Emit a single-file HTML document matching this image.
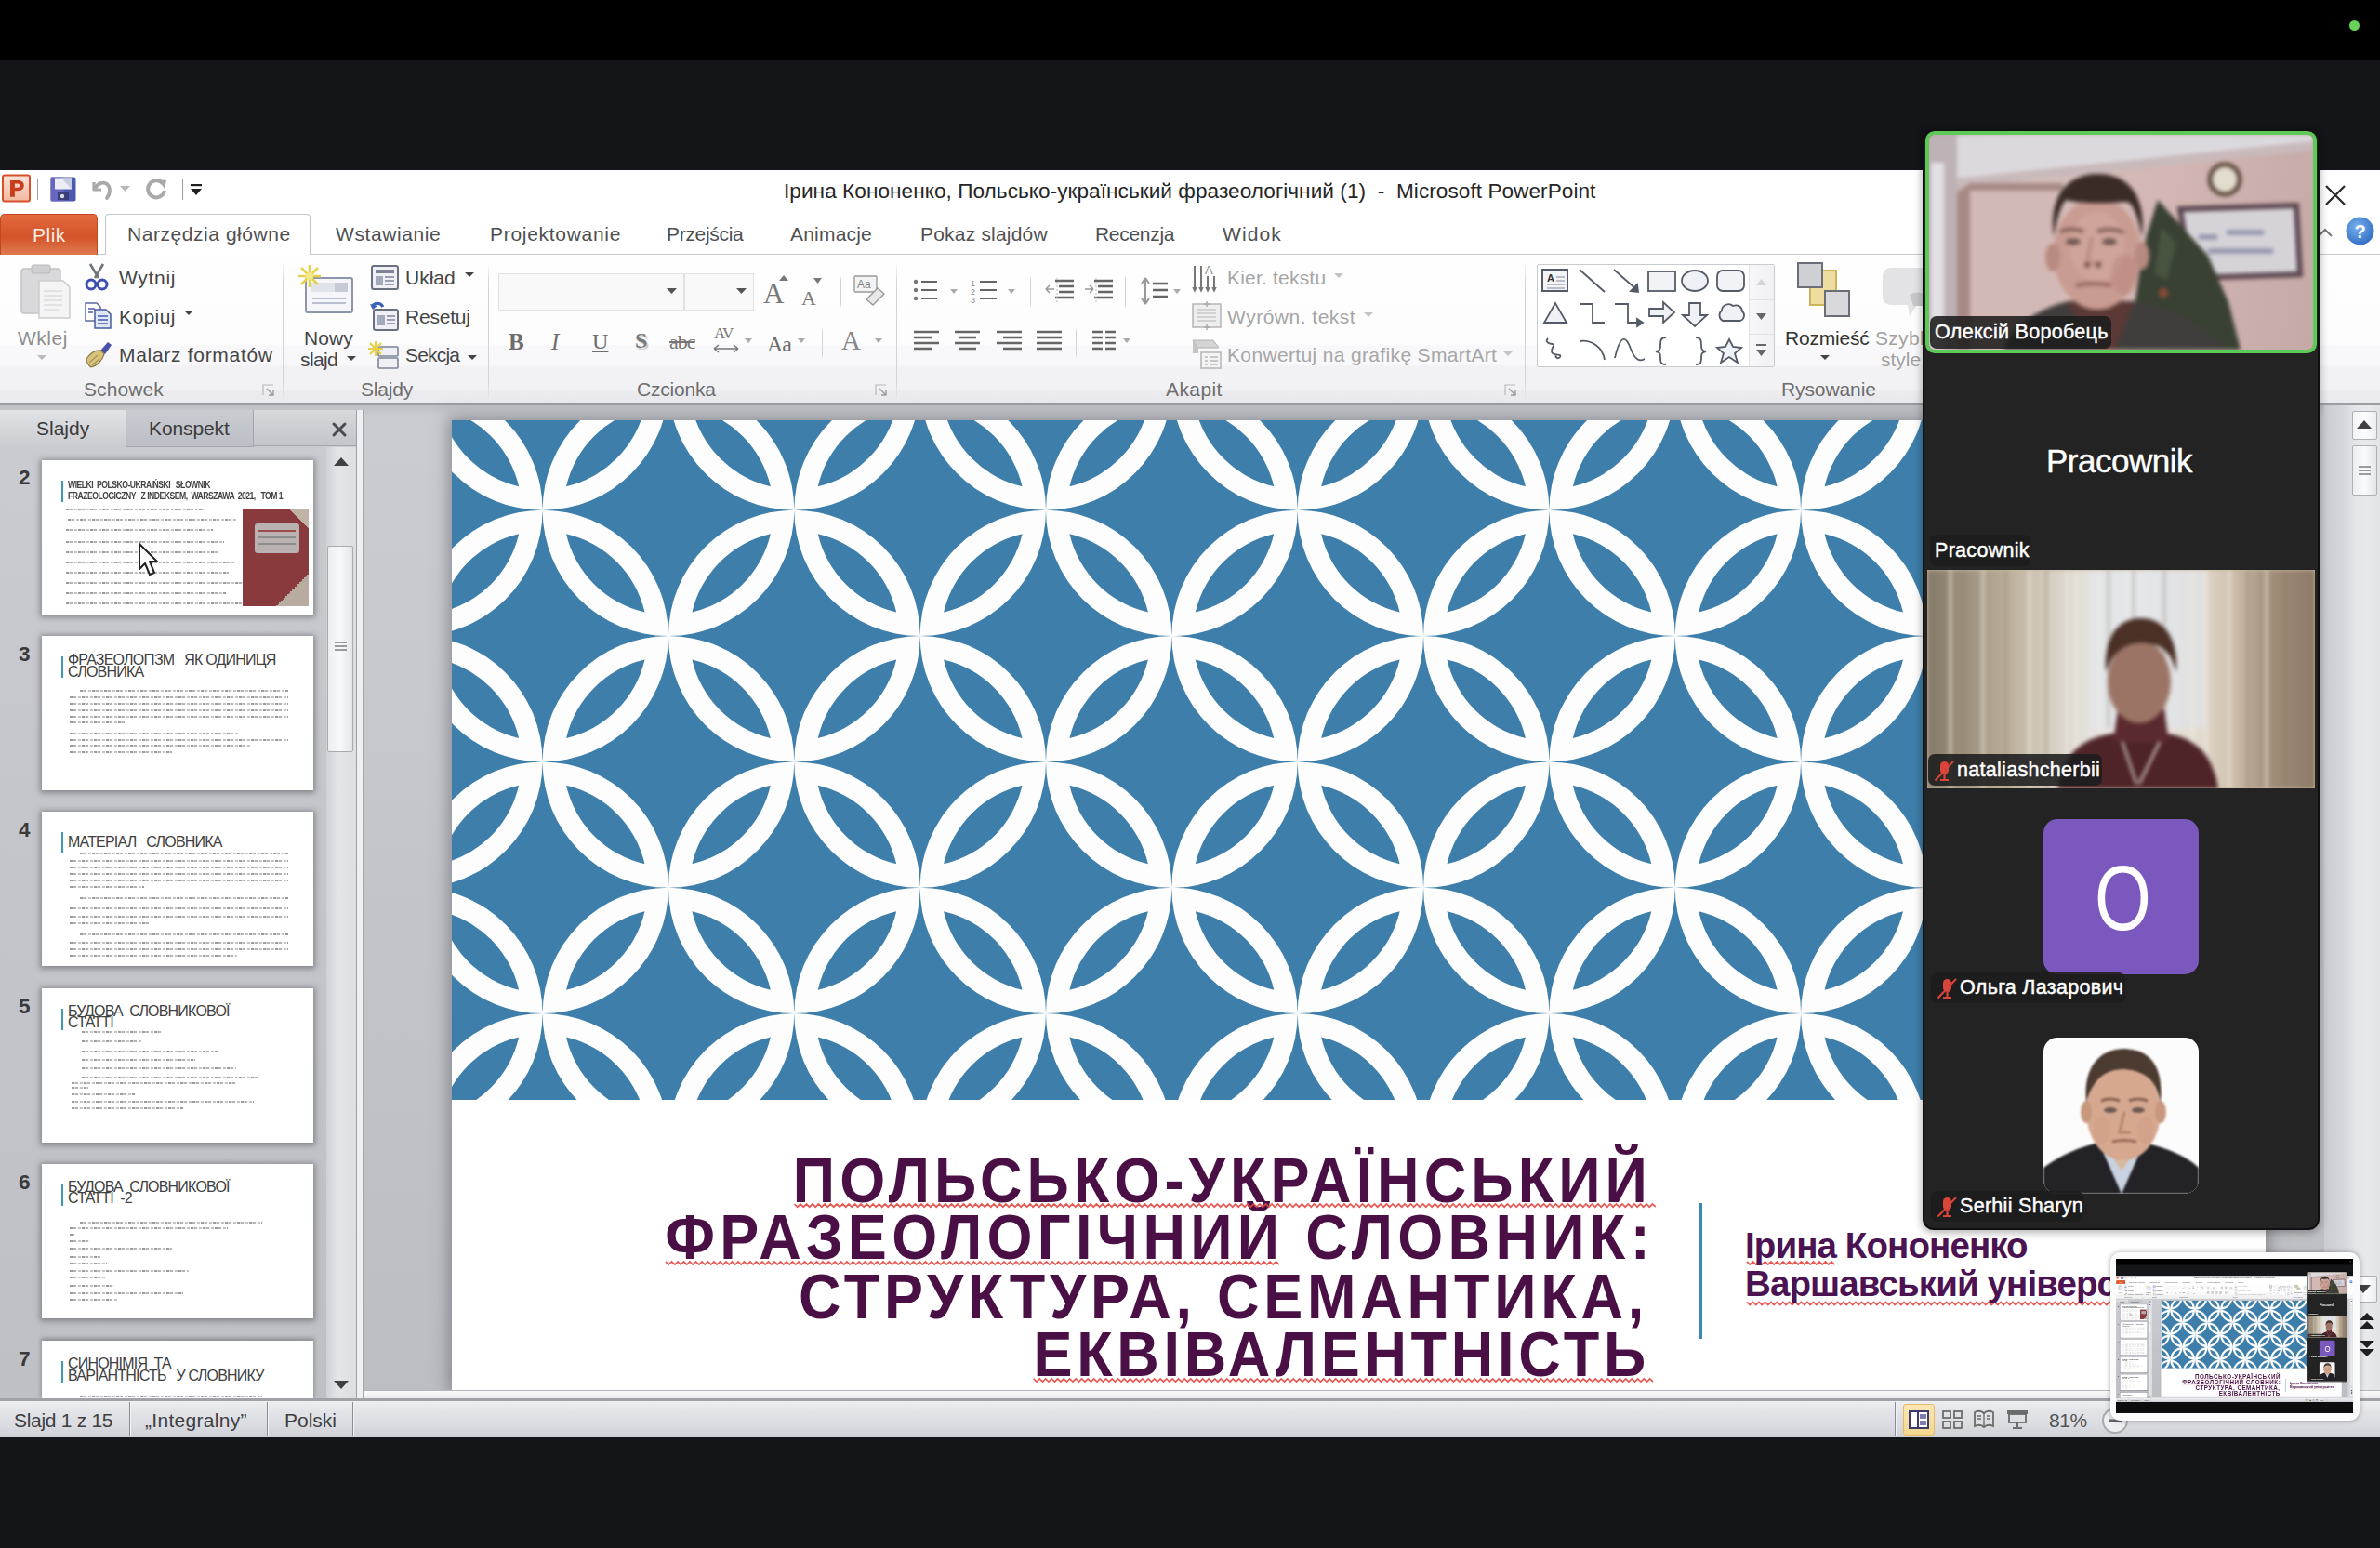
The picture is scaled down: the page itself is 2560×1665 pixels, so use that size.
<!DOCTYPE html>
<html><head><meta charset="utf-8">
<style>
*{margin:0;padding:0;box-sizing:border-box}
html,body{width:2560px;height:1665px;overflow:hidden;background:#141519;font-family:"Liberation Sans",sans-serif}
div,span{position:absolute;white-space:nowrap}
svg{position:absolute;display:block;overflow:visible}
.t{line-height:1}
.tab{font-size:21px;color:#505050;line-height:1;top:241px}
.rt{font-size:21px;color:#454545;line-height:1}
.dis{color:#a6a6a6}
.gl{font-size:21px;color:#6e6e6e;line-height:1;top:408px}
.vs{width:1px;background:linear-gradient(rgba(200,201,206,0),#d2d3d8 15%,#d2d3d8 85%,rgba(200,201,206,0))}
.tt{font-weight:bold;color:#4a1046;font-size:63px;line-height:1;transform:scaleY(1.08);transform-origin:0 53.3px}
.lbl{height:34px;background:rgba(28,28,28,.88);border-radius:7px;color:#fff;font-size:21.5px;font-weight:normal;-webkit-text-stroke:.45px #fff;letter-spacing:.3px;line-height:34px;padding:0 5px 0 5px}
.num{font-size:22.5px;font-weight:bold;color:#3a3a3a;left:18px;line-height:1}
.thumb{left:45px;width:292px;height:166px;background:#fff;box-shadow:0 1px 6px 2px rgba(70,72,80,.5);overflow:hidden}
</style></head><body>
<!-- zoom top bars -->
<div style="left:0;top:0;width:2560px;height:64px;background:#000"></div>
<div style="left:2527px;top:22px;width:11px;height:11px;border-radius:50%;background:#69d25c"></div>

<!-- ================= POWERPOINT WINDOW ================= -->
<div id="ppt" style="left:0;top:183px;width:2560px;height:1363px;background:#fff"></div>
<!-- title bar -->
<svg style="left:2px;top:187px" width="32" height="32" viewBox="0 0 32 32">
  <defs><linearGradient id="pg" x1="0" y1="0" x2="0" y2="1"><stop offset="0" stop-color="#fbe3d8"/><stop offset="1" stop-color="#f2b9a1"/></linearGradient></defs>
  <rect x="1" y="1.5" width="29" height="28" rx="2" fill="url(#pg)" stroke="#d8502a" stroke-width="2"/>
  <path d="M9 7h8.5c4 0 6.2 2.2 6.2 5.6s-2.3 5.6-6.2 5.6h-3.6v6.5H9z M13.9 10.6v4.2h3.1c1.5 0 2.3-.8 2.3-2.1s-.8-2.1-2.3-2.1z" fill="#c73e1d"/>
</svg>
<div style="left:40px;top:192px;width:1px;height:23px;background:#9b9b9b"></div>
<svg style="left:54px;top:190px" width="28" height="27" viewBox="0 0 28 27">
  <rect x="0.5" y="0.5" width="27" height="26" rx="2" fill="#4a5ab0"/>
  <rect x="0.5" y="0.5" width="14" height="26" fill="#6f6ac4" opacity=".8"/>
  <rect x="5" y="1.5" width="18" height="12" fill="#eceef6"/>
  <path d="M12 1.5h11v12L12 1.5z" fill="#c9cde0"/>
  <rect x="8" y="17" width="12" height="8" fill="#3a3f7a"/>
  <circle cx="13" cy="21" r="2.2" fill="#d8dbe8"/>
</svg>
<svg style="left:96px;top:192px" width="26" height="24" viewBox="0 0 26 24">
  <path d="M5 4v8h8" fill="none" stroke="#a9a9a9" stroke-width="3.2" stroke-linejoin="round"/>
  <path d="M6 11C9 5 15 3 19 6s4 10 0 15" fill="none" stroke="#a9a9a9" stroke-width="3.8" stroke-linecap="round"/>
</svg>
<svg style="left:129px;top:200px" width="11" height="7" viewBox="0 0 11 7"><path d="M0 0h11L5.5 6z" fill="#b7b7b7"/></svg>
<svg style="left:156px;top:192px" width="26" height="25" viewBox="0 0 26 25">
  <path d="M19 5.5A9 9 0 1 0 21 13" fill="none" stroke="#a9a9a9" stroke-width="4"/>
  <path d="M14 1l9 1-2 9z" fill="#a9a9a9"/>
</svg>
<div style="left:196px;top:192px;width:1px;height:23px;background:#9b9b9b"></div>
<svg style="left:204px;top:198px" width="14" height="14" viewBox="0 0 14 14">
  <rect x="1" y="0" width="12" height="2.2" fill="#1f1f1f"/>
  <path d="M1 5h12l-6 7z" fill="#1f1f1f"/>
</svg>
<div class="t" style="left:843px;top:195px;font-size:22.6px;color:#262626;letter-spacing:0.05px">Ірина Кононенко, Польсько-український фразеологічний (1)&nbsp; -&nbsp; Microsoft PowerPoint</div>
<!-- close X -->
<svg style="left:2498px;top:196px" width="28" height="28" viewBox="0 0 28 28"><path d="M4 4L24 24M24 4L4 24" stroke="#2b2b2b" stroke-width="2.3"/></svg>
<!-- ribbon minimize + help -->
<svg style="left:2492px;top:243px" width="18" height="14" viewBox="0 0 18 14"><path d="M2 11L9 4l7 7" fill="none" stroke="#7a7a7a" stroke-width="2.2"/></svg>
<svg style="left:2523px;top:233px" width="31" height="31" viewBox="-1 -1 31 31">
  <defs><radialGradient id="hg" cx=".4" cy=".35" r=".7"><stop offset="0" stop-color="#7ab0ee"/><stop offset="1" stop-color="#2f6cc4"/></radialGradient></defs>
  <circle cx="14.5" cy="14.5" r="15" fill="url(#hg)"/>
  <text x="14.5" y="22" text-anchor="middle" font-family="Liberation Sans" font-weight="bold" font-size="20" fill="#fff">?</text>
</svg>

<!-- tabs -->
<div style="left:0;top:273px;width:2560px;height:1px;background:#c9cbd0"></div>
<div style="left:0;top:230px;width:105px;height:44px;border-radius:5px 5px 0 0;background:linear-gradient(#e3693f,#d4532a 55%,#e07a4f);border:1px solid #c2481f;border-bottom:none"></div>
<div class="t" style="left:35px;top:242px;font-size:21px;color:#fbeee4;letter-spacing:.5px">Plik</div>
<div style="left:113px;top:230px;width:221px;height:45px;background:#fff;border:1px solid #c3c5ca;border-bottom:none;border-radius:4px 4px 0 0"></div>
<div class="tab" style="left:137px;letter-spacing:.55px">Narzędzia główne</div>
<div class="tab" style="left:361px;letter-spacing:.6px">Wstawianie</div>
<div class="tab" style="left:527px;letter-spacing:.7px">Projektowanie</div>
<div class="tab" style="left:717px;letter-spacing:-.3px">Przejścia</div>
<div class="tab" style="left:850px;letter-spacing:.2px">Animacje</div>
<div class="tab" style="left:990px;letter-spacing:.2px">Pokaz slajdów</div>
<div class="tab" style="left:1178px;letter-spacing:-.3px">Recenzja</div>
<div class="tab" style="left:1315px;letter-spacing:1.1px">Widok</div>

<!-- ribbon body -->
<div style="left:0;top:274px;width:2560px;height:160px;background:linear-gradient(#fefefe 0px,#fdfdfd 96px,#f8f7f9 98px,#f8f7f9 118px,#f2f2f5 120px,#f2f2f5 145px,#ececf0 147px,#eaeaee 160px)"></div>
<div class="vs" style="left:304px;top:282px;height:150px"></div>
<div class="vs" style="left:525px;top:282px;height:150px"></div>
<div class="vs" style="left:964px;top:282px;height:150px"></div>
<div class="vs" style="left:1640px;top:282px;height:150px"></div>

<!-- Schowek -->
<svg style="left:20px;top:282px" width="56" height="62" viewBox="0 0 56 62">
  <rect x="3" y="7" width="42" height="48" rx="3" fill="#d9d9db" stroke="#c4c4c6" stroke-width="1.5"/>
  <rect x="14" y="3" width="20" height="9" rx="2" fill="#cfcfd1" stroke="#b9b9bb"/>
  <path d="M22 20h26l7 7v33H22z" fill="#f4f4f5" stroke="#cbcbcd" stroke-width="1.5"/>
  <path d="M27 31h20M27 36h20M27 41h20M27 46h20M27 51h16" stroke="#dcdcde" stroke-width="1.5"/>
</svg>
<div class="rt" style="left:19px;top:353px;color:#8e8e8e;letter-spacing:0.5px">Wklej</div>
<svg style="left:40px;top:382px" width="10" height="6" viewBox="0 0 10 6"><path d="M0 0h10L5 5z" fill="#b9b9b9"/></svg>
<svg style="left:91px;top:283px" width="26" height="30" viewBox="0 0 26 30">
  <path d="M6 1l9 15M20 1l-9 15" stroke="#6f737a" stroke-width="2.6"/>
  <circle cx="7" cy="23" r="5" fill="none" stroke="#3f4eb0" stroke-width="3"/>
  <circle cx="19" cy="23" r="5" fill="none" stroke="#3f4eb0" stroke-width="3"/>
</svg>
<div class="rt" style="left:128px;top:288px;letter-spacing:0.7px">Wytnij</div>
<svg style="left:91px;top:325px" width="30" height="29" viewBox="0 0 30 29">
  <path d="M1 1h12l4 4v15H1z" fill="#fff" stroke="#5a6a9a" stroke-width="1.5"/>
  <path d="M11 8h12l5 5v15H11z" fill="#dfe6f7" stroke="#4a5a9a" stroke-width="1.5"/>
  <path d="M14 15h11M14 19h11M14 23h11M4 7h7M4 11h5" stroke="#4a5ab0" stroke-width="1.5"/>
</svg>
<div class="rt" style="left:128px;top:330px;letter-spacing:0.4px">Kopiuj</div>
<svg style="left:198px;top:334px" width="10" height="6" viewBox="0 0 10 6"><path d="M0 0h10L5 5z" fill="#444"/></svg>
<svg style="left:90px;top:366px" width="32" height="30" viewBox="0 0 32 30">
  <path d="M18 11l8-9 4 3-7 10z" fill="#4a4fa8"/>
  <path d="M3 20c4-6 10-10 16-9l3 4c-2 6-7 12-14 14-3-2-5-5-5-9z" fill="#d9c27a" stroke="#8a7a4a" stroke-width="1.2"/>
  <path d="M6 24l9-8M9 27l8-7" stroke="#a8925a" stroke-width="1.2"/>
</svg>
<div class="rt" style="left:128px;top:371px;letter-spacing:0.7px">Malarz formatów</div>
<div class="gl" style="left:90px;letter-spacing:0.1px">Schowek</div>
<svg style="left:282px;top:413px" width="13" height="13" viewBox="0 0 13 13"><path d="M1 12V1h11" fill="none" stroke="#b8b8b8" stroke-width="1.2"/><path d="M5 5l7 7M12 7v5H7" fill="none" stroke="#9a9a9a" stroke-width="1.4"/></svg>

<!-- Slajdy -->
<svg style="left:320px;top:283px" width="62" height="56" viewBox="0 0 62 56">
  <rect x="9" y="16" width="50" height="37" rx="2" fill="#f4f6fa" stroke="#8c96a8" stroke-width="2"/>
  <rect x="14" y="21" width="40" height="10" fill="#dfe3ea"/>
  <rect x="40" y="21" width="14" height="10" fill="#c5cad4"/>
  <path d="M16 38h36M16 43h36" stroke="#b8c0d0" stroke-width="2"/>
  <path d="M13 2v24M1 14h24M4 5l18 18M22 5L4 23" stroke="#e5d24a" stroke-width="2.5"/>
  <circle cx="13" cy="14" r="4" fill="#f5e98a"/>
</svg>
<div class="rt" style="left:327px;top:353px;letter-spacing:0.1px">Nowy</div>
<div class="rt" style="left:323px;top:376px;letter-spacing:-0.6px">slajd</div>
<svg style="left:373px;top:383px" width="10" height="6" viewBox="0 0 10 6"><path d="M0 0h10L5 5z" fill="#444"/></svg>
<svg style="left:399px;top:285px" width="30" height="27" viewBox="0 0 30 27">
  <rect x="1" y="1" width="28" height="25" rx="2" fill="#eef0f5" stroke="#6a7080" stroke-width="2"/>
  <rect x="5" y="5" width="20" height="4" fill="#7c8496"/>
  <rect x="5" y="12" width="8" height="10" fill="#a4abbc"/>
  <path d="M15 13h10M15 17h10M15 21h10" stroke="#7c8496" stroke-width="1.6"/>
</svg>
<div class="rt" style="left:436px;top:288px;letter-spacing:0px">Układ</div>
<svg style="left:500px;top:293px" width="10" height="6" viewBox="0 0 10 6"><path d="M0 0h10L5 5z" fill="#444"/></svg>
<svg style="left:398px;top:324px" width="32" height="32" viewBox="0 0 32 32">
  <rect x="4" y="9" width="26" height="22" rx="2" fill="#eef0f5" stroke="#6a7080" stroke-width="2"/>
  <rect x="8" y="15" width="8" height="11" fill="#a4abbc"/>
  <path d="M18 16h9M18 20h9M18 24h9" stroke="#7c8496" stroke-width="1.6"/>
  <path d="M2 6c3-5 9-5 12 0" fill="none" stroke="#3a62b8" stroke-width="3"/>
  <path d="M0 3l3 6 5-4z" fill="#3a62b8"/>
</svg>
<div class="rt" style="left:436px;top:330px;letter-spacing:-0.2px">Resetuj</div>
<svg style="left:396px;top:365px" width="34" height="32" viewBox="0 0 34 32">
  <rect x="11" y="8" width="21" height="10" rx="1" fill="#eef0f5" stroke="#7c8496" stroke-width="1.6"/>
  <rect x="11" y="20" width="21" height="11" rx="1" fill="#eef0f5" stroke="#7c8496" stroke-width="1.6"/>
  <path d="M8 2v16M0 10h16M2 4l12 12M14 4L2 16" stroke="#e5d24a" stroke-width="2.2"/>
</svg>
<div class="rt" style="left:436px;top:371px;letter-spacing:-0.8px">Sekcja</div>
<svg style="left:503px;top:382px" width="10" height="6" viewBox="0 0 10 6"><path d="M0 0h10L5 5z" fill="#444"/></svg>
<div class="gl" style="left:388px;letter-spacing:-0.2px">Slajdy</div>

<!-- Czcionka -->
<div style="left:536px;top:294px;width:200px;height:40px;background:#f9f9fa;border:1px solid #e1e2e6"></div>
<div style="left:736px;top:294px;width:75px;height:40px;background:#f9f9fa;border:1px solid #e1e2e6"></div>
<svg style="left:717px;top:310px" width="11" height="7" viewBox="0 0 11 7"><path d="M0 0h11L5.5 6z" fill="#555"/></svg>
<svg style="left:792px;top:310px" width="11" height="7" viewBox="0 0 11 7"><path d="M0 0h11L5.5 6z" fill="#555"/></svg>
<div class="t" style="left:821px;top:300px;font-family:'Liberation Serif';font-size:31px;color:#777">A</div>
<svg style="left:838px;top:296px" width="10" height="6" viewBox="0 0 10 6"><path d="M0 6h10L5 0z" fill="#777"/></svg>
<div class="t" style="left:862px;top:310px;font-family:'Liberation Serif';font-size:22px;color:#777">A</div>
<svg style="left:875px;top:299px" width="9" height="6" viewBox="0 0 9 6"><path d="M0 0h9L4.5 6z" fill="#777"/></svg>
<div class="vs" style="left:904px;top:296px;height:36px"></div>
<svg style="left:918px;top:296px" width="34" height="33" viewBox="0 0 34 33">
  <rect x="1" y="1" width="24" height="17" rx="1" fill="#f3f3f3" stroke="#999" stroke-width="1.4"/>
  <text x="4" y="14" font-family="Liberation Sans" font-size="12" fill="#888">Aa</text>
  <path d="M14 26l12-12 7 6-12 12z" fill="#e8e8e8" stroke="#9a9a9a" stroke-width="1.4"/>
</svg>
<div class="t" style="left:547px;top:355px;font-family:'Liberation Serif';font-weight:bold;font-size:25px;color:#6e6e6e">B</div>
<div class="t" style="left:593px;top:355px;font-family:'Liberation Serif';font-style:italic;font-size:25px;color:#6e6e6e">I</div>
<div class="t" style="left:637px;top:355px;font-family:'Liberation Serif';font-size:24px;color:#6e6e6e;text-decoration:underline">U</div>
<div class="t" style="left:683px;top:354px;font-family:'Liberation Serif';font-weight:bold;font-size:24px;color:#7a7a7a;text-shadow:2px 2px 1px #c8c8c8">S</div>
<div class="t" style="left:720px;top:357px;font-family:'Liberation Serif';font-size:22px;color:#777;text-decoration:line-through;letter-spacing:-1px">abc</div>
<div class="t" style="left:768px;top:350px;font-family:'Liberation Serif';font-size:17px;color:#777;letter-spacing:-1px">AV</div>
<svg style="left:766px;top:369px" width="30" height="12" viewBox="0 0 30 12"><path d="M2 6h26M2 6l5-4M2 6l5 4M28 6l-5-4M28 6l-5 4" stroke="#777" stroke-width="1.6" fill="none"/></svg>
<svg style="left:801px;top:364px" width="8" height="5" viewBox="0 0 8 5"><path d="M0 0h8L4 5z" fill="#aaa"/></svg>
<div class="t" style="left:825px;top:358px;font-family:'Liberation Serif';font-size:24px;color:#6e6e6e;letter-spacing:-1px">Aa</div>
<svg style="left:858px;top:364px" width="8" height="5" viewBox="0 0 8 5"><path d="M0 0h8L4 5z" fill="#aaa"/></svg>
<div class="vs" style="left:884px;top:352px;height:34px"></div>
<div class="t" style="left:905px;top:352px;font-family:'Liberation Serif';font-size:29px;color:#888">A</div>
<svg style="left:941px;top:364px" width="8" height="5" viewBox="0 0 8 5"><path d="M0 0h8L4 5z" fill="#aaa"/></svg>
<div class="gl" style="left:685px;letter-spacing:-0.2px">Czcionka</div>
<svg style="left:941px;top:413px" width="13" height="13" viewBox="0 0 13 13"><path d="M1 12V1h11" fill="none" stroke="#b8b8b8" stroke-width="1.2"/><path d="M5 5l7 7M12 7v5H7" fill="none" stroke="#9a9a9a" stroke-width="1.4"/></svg>

<!-- Akapit -->
<svg style="left:982px;top:300px" width="28" height="26" viewBox="0 0 28 26">
  <circle cx="3" cy="3" r="2.2" fill="#777"/><circle cx="3" cy="12" r="2.2" fill="#777"/><circle cx="3" cy="21" r="2.2" fill="#777"/>
  <path d="M9 3h17M9 12h17M9 21h17" stroke="#666" stroke-width="2"/>
</svg>
<svg style="left:1022px;top:311px" width="8" height="5" viewBox="0 0 8 5"><path d="M0 0h8L4 5z" fill="#aaa"/></svg>
<svg style="left:1044px;top:299px" width="30" height="28" viewBox="0 0 30 28">
  <text x="0" y="9" font-size="9" font-family="Liberation Sans" fill="#888">1</text><text x="0" y="18" font-size="9" font-family="Liberation Sans" fill="#888">2</text><text x="0" y="27" font-size="9" font-family="Liberation Sans" fill="#888">3</text>
  <path d="M10 4h18M10 13h18M10 22h18" stroke="#666" stroke-width="2"/>
</svg>
<svg style="left:1084px;top:311px" width="8" height="5" viewBox="0 0 8 5"><path d="M0 0h8L4 5z" fill="#aaa"/></svg>
<div class="vs" style="left:1108px;top:296px;height:36px"></div>
<svg style="left:1123px;top:298px" width="34" height="30" viewBox="0 0 34 30">
  <path d="M12 4h20M16 10h16M16 16h16M12 22h20" stroke="#666" stroke-width="2.4"/>
  <path d="M2 13h9M2 13l4-4M2 13l4 4" stroke="#999" stroke-width="1.6" fill="none"/>
  <path d="M14 1v28" stroke="#bbb" stroke-width="1" stroke-dasharray="2 2"/>
</svg>
<svg style="left:1165px;top:298px" width="34" height="30" viewBox="0 0 34 30">
  <path d="M12 4h20M16 10h16M16 16h16M12 22h20" stroke="#666" stroke-width="2.4"/>
  <path d="M2 13h9M11 13l-4-4M11 13l-4 4" stroke="#999" stroke-width="1.6" fill="none"/>
  <path d="M14 1v28" stroke="#bbb" stroke-width="1" stroke-dasharray="2 2"/>
</svg>
<div class="vs" style="left:1210px;top:296px;height:36px"></div>
<svg style="left:1226px;top:297px" width="44" height="32" viewBox="0 0 44 32">
  <path d="M6 3v26M6 2l-4 6M6 2l4 6M6 30l-4-6M6 30l4-6" stroke="#999" stroke-width="2" fill="none"/>
  <path d="M14 8h16M14 15h16M14 22h16" stroke="#666" stroke-width="2.4"/>
</svg>
<svg style="left:1262px;top:311px" width="8" height="5" viewBox="0 0 8 5"><path d="M0 0h8L4 5z" fill="#aaa"/></svg>
<svg style="left:982px;top:355px" width="30" height="25" viewBox="0 0 30 25"><path d="M1 2h27M1 8h20M1 14h27M1 20h20" stroke="#666" stroke-width="2.4"/></svg>
<svg style="left:1026px;top:355px" width="30" height="25" viewBox="0 0 30 25"><path d="M1 2h27M5 8h19M1 14h27M5 20h19" stroke="#666" stroke-width="2.4"/></svg>
<svg style="left:1071px;top:355px" width="30" height="25" viewBox="0 0 30 25"><path d="M1 2h27M8 8h20M1 14h27M8 20h20" stroke="#666" stroke-width="2.4"/></svg>
<svg style="left:1114px;top:355px" width="30" height="25" viewBox="0 0 30 25"><path d="M1 2h27M1 8h27M1 14h27M1 20h27" stroke="#666" stroke-width="2.4"/></svg>
<div class="vs" style="left:1157px;top:352px;height:34px"></div>
<svg style="left:1174px;top:355px" width="28" height="25" viewBox="0 0 28 25"><path d="M1 2h11M1 8h11M1 14h11M1 20h11M15 2h11M15 8h11M15 14h11M15 20h11" stroke="#666" stroke-width="2.4"/></svg>
<svg style="left:1208px;top:364px" width="8" height="5" viewBox="0 0 8 5"><path d="M0 0h8L4 5z" fill="#aaa"/></svg>
<svg style="left:1282px;top:283px" width="32" height="31" viewBox="0 0 32 31">
  <path d="M3 3v26M10 3v26M17 14v15M24 14v15" stroke="#777" stroke-width="2"/>
  <path d="M1 26l2 4 2-4M8 26l2 4 2-4M15 26l2 4 2-4M22 26l2 4 2-4" stroke="#777" stroke-width="1.5" fill="none"/>
  <text x="14" y="12" font-size="13" font-family="Liberation Sans" fill="#888">A</text>
</svg>
<div class="rt dis" style="left:1320px;top:288px;letter-spacing:0.2px">Kier. tekstu</div>
<svg style="left:1435px;top:294px" width="10" height="6" viewBox="0 0 10 6"><path d="M0 0h10L5 5z" fill="#c4c4c4"/></svg>
<svg style="left:1282px;top:324px" width="33" height="31" viewBox="0 0 33 31">
  <rect x="1" y="3" width="30" height="25" fill="#eeeeee" stroke="#b5b5b5" stroke-width="1.5"/>
  <path d="M6 9h20M6 13h20M6 17h20M6 21h20" stroke="#c8c8c8" stroke-width="1.5"/>
  <path d="M16 0v6M13 3h6M16 25v6M13 28h6" stroke="#aaa" stroke-width="1.5"/>
</svg>
<div class="rt dis" style="left:1320px;top:330px;letter-spacing:0.5px">Wyrówn. tekst</div>
<svg style="left:1467px;top:336px" width="10" height="6" viewBox="0 0 10 6"><path d="M0 0h10L5 5z" fill="#c4c4c4"/></svg>
<svg style="left:1282px;top:365px" width="33" height="32" viewBox="0 0 33 32">
  <path d="M1 1h22l6 8H7z" fill="#d4d4d4" stroke="#b0b0b0"/>
  <path d="M1 1l6 8v6H1z" fill="#c4c4c4"/>
  <rect x="10" y="14" width="21" height="17" fill="#f3f3f3" stroke="#b5b5b5" stroke-width="1.5"/>
  <path d="M14 19h3M20 19h8M14 23h3M20 23h8M14 27h3M20 27h8" stroke="#b8b8b8" stroke-width="1.5"/>
</svg>
<div class="rt dis" style="left:1320px;top:371px;letter-spacing:0.35px">Konwertuj na grafikę SmartArt</div>
<svg style="left:1617px;top:378px" width="10" height="6" viewBox="0 0 10 6"><path d="M0 0h10L5 5z" fill="#c4c4c4"/></svg>
<div class="gl" style="left:1254px;letter-spacing:0.4px">Akapit</div>
<svg style="left:1618px;top:413px" width="13" height="13" viewBox="0 0 13 13"><path d="M1 12V1h11" fill="none" stroke="#b8b8b8" stroke-width="1.2"/><path d="M5 5l7 7M12 7v5H7" fill="none" stroke="#9a9a9a" stroke-width="1.4"/></svg>

<!-- Rysowanie -->
<div style="left:1653px;top:284px;width:256px;height:111px;background:#fff;border:1px solid #c9cbcf;border-radius:2px"></div>
<div style="left:1881px;top:285px;width:27px;height:109px;background:linear-gradient(90deg,#f7f7f9,#f1f1f4);border-left:1px solid #e2e3e6"></div>
<div style="left:1881px;top:322px;width:27px;height:1px;background:#e2e3e6"></div>
<div style="left:1881px;top:359px;width:27px;height:1px;background:#e2e3e6"></div>
<svg style="left:1889px;top:300px" width="11" height="7" viewBox="0 0 11 7"><path d="M0 7h11L5.5 0z" fill="#d5d5d5"/></svg>
<svg style="left:1889px;top:337px" width="11" height="7" viewBox="0 0 11 7"><path d="M0 0h11L5.5 7z" fill="#666"/></svg>
<svg style="left:1889px;top:370px" width="11" height="14" viewBox="0 0 11 14"><path d="M0 1h11" stroke="#666" stroke-width="2"/><path d="M0 6h11L5.5 13z" fill="#666"/></svg>
<svg style="left:1655px;top:286px" width="226" height="108" viewBox="0 0 226 108" fill="none" stroke="#545b66" stroke-width="1.8">
  <rect x="4" y="4" width="27" height="23" fill="#f2f3f6" stroke-width="2"/>
  <text x="9" y="17" font-size="11" font-weight="bold" font-family="Liberation Sans" fill="#333" stroke="none">A</text>
  <path d="M19 12h9M19 16h9M9 20h19M9 24h19" stroke="#889" stroke-width="1.2"/>
  <path d="M44 4l27 24"/>
  <path d="M81 4l25 22"/><path d="M99 27l8 1-1-8z" fill="#545b66"/>
  <rect x="118" y="6" width="29" height="21" fill="#f1f3f7"/>
  <ellipse cx="168" cy="16" rx="14" ry="11" fill="#eef1f6"/>
  <rect x="192" y="5" width="29" height="22" rx="6" fill="#f1f3f7"/>
  <path d="M18 40l-12 21h24z" fill="#eef1f6"/>
  <path d="M45 41h13v20h13"/>
  <path d="M82 41h14v20h11"/><path d="M106 57l6 4-6 4z" fill="#545b66"/>
  <path d="M119 46h15v-7l12 11-12 11v-7h-15z" fill="#eef1f6"/>
  <path d="M162 40h12v13h7l-13 12-13-12h7z" fill="#eef1f6"/>
  <path d="M197 48c0-6 8-9 12-5 5-2 10 1 10 6 3 2 3 8-2 10h-19c-4-2-5-8-1-11z" fill="#eef1f6"/>
  <path d="M10 78c-4 4 2 6 5 6 4 1-4 6 0 10 4 3 10 0 8 4-2 3-6 0-4-3"/>
  <path d="M44 81c12-2 25 6 27 20"/>
  <path d="M82 99c6-26 12-24 17-10 5 13 10 14 15 11"/>
  <path d="M137 77c-6 0-6 4-6 8s0 6-5 7c5 1 5 3 5 7s0 7 6 7"/>
  <path d="M169 77c6 0 6 4 6 8s0 6 5 7c-5 1-5 3-5 7s0 7-6 7"/>
  <path d="M205 79l4 8 9 1-7 6 3 10-9-6-9 6 3-10-7-6 9-1z" fill="#eef3f8"/>
</svg>
<svg style="left:1932px;top:281px" width="60" height="62" viewBox="0 0 60 62">
  <rect x="15" y="10" width="28" height="37" fill="#efdca0" stroke="#cdb45a" stroke-width="2"/>
  <rect x="2" y="2" width="26" height="26" fill="#cfd0d4" stroke="#6b6e76" stroke-width="2"/>
  <rect x="31" y="32" width="26" height="27" fill="#d9d9dd" stroke="#6b6e76" stroke-width="2"/>
</svg>
<div class="rt" style="left:1920px;top:353px;letter-spacing:-.2px;color:#333">Rozmieść</div>
<svg style="left:1958px;top:382px" width="10" height="6" viewBox="0 0 10 6"><path d="M0 0h10L5 5z" fill="#444"/></svg>
<svg style="left:2024px;top:287px" width="50" height="55" viewBox="0 0 50 55">
  <path d="M10 1h40v40H38l-8 12-2-12H10C5 41 1 37 1 32V10C1 5 5 1 10 1z" fill="#e3e3e5"/>
  <path d="M30 30c6-4 14-3 20 2v10H34z" fill="#c8c8ca"/>
</svg>
<div class="rt dis" style="left:2017px;top:353px;color:#a0a0a0;letter-spacing:.3px">Szybkie</div>
<div class="rt dis" style="left:2023px;top:376px;color:#a0a0a0">style</div>
<div class="gl" style="left:1916px;letter-spacing:-0.1px">Rysowanie</div>

<!-- work area -->
<div style="left:0;top:433px;width:2560px;height:3px;background:#9c9da3"></div>
<div style="left:0;top:436px;width:2560px;height:1070px;background:linear-gradient(#bfc0c5 0px,#cbccd1 12px,#c8c9ce 300px,#c3c4c9 550px,#bdbec3 1060px)"></div>
<!-- left slides panel -->
<div style="left:0;top:441px;width:384px;height:1065px;background:linear-gradient(#cbccd1,#c5c6cb 40%,#bfc0c5);border-right:1px solid #9fa1a7;overflow:hidden">
  <!-- tabs -->
  <div style="left:0;top:0;width:384px;height:39px;background:linear-gradient(#d6d8dc,#c3c5cb);border-bottom:1px solid #a4a6ac"></div>
  <div style="left:0;top:0;width:136px;height:40px;background:linear-gradient(#e2e3e6,#d3d5d9 60%,#c9cbd0)"></div>
  <div style="left:135px;top:0;width:138px;height:40px;background:linear-gradient(#c9cbd1,#bcbfc6);border-left:1px solid #a3a5ab;border-right:1px solid #a3a5ab;border-bottom:1px solid #a3a5ab"></div>
  <div class="t" style="left:39px;top:9px;font-size:21px;color:#3b3b3b">Slajdy</div>
  <div class="t" style="left:160px;top:9px;font-size:21px;color:#3b3b3b;letter-spacing:-.1px">Konspekt</div>
  <svg style="left:357px;top:13px" width="16" height="16" viewBox="0 0 16 16"><path d="M2 2l12 12M14 2L2 14" stroke="#4a4a4f" stroke-width="3" stroke-linecap="round"/></svg>
  <!-- scrollbar -->
  <div style="left:351px;top:40px;width:32px;height:1025px;background:linear-gradient(90deg,#cfd1d6,#e4e5e9 40%,#dcdee2)"></div>
  <svg style="left:359px;top:51px" width="16" height="9" viewBox="0 0 16 9"><path d="M0 9h16L8 0z" fill="#3f3f44"/></svg>
  <div style="left:352px;top:146px;width:28px;height:222px;border:1px solid #a9abb1;border-radius:2px;background:linear-gradient(90deg,#eceef1,#f9f9fb 50%,#e3e5e9)"></div>
  <svg style="left:359px;top:248px" width="15" height="14" viewBox="0 0 15 14"><path d="M1 2h13M1 6h13M1 10h13" stroke="#7b7d83" stroke-width="1.4"/></svg>
  <svg style="left:359px;top:1044px" width="16" height="9" viewBox="0 0 16 9"><path d="M0 0h16L8 9z" fill="#3f3f44"/></svg>
</div>
<div style="left:384px;top:441px;width:7px;height:1065px;background:#eef0f3;border-right:1px solid #a6a8ae"></div>

<!-- thumbnails -->
<div class="num" style="left:20px;top:503px">2</div>
<div class="thumb" style="top:495px">
  <div style="left:21px;top:22px;width:2px;height:23px;background:#3a9bb7"></div>
  <div class="t" style="left:28px;top:21px;font-size:10.5px;font-weight:bold;color:#444;letter-spacing:-.6px;transform:scaleX(.82);transform-origin:0 0">WIELKI &nbsp;POLSKO-UKRAIŃSKI &nbsp; SŁOWNIK</div>
  <div class="t" style="left:28px;top:33px;font-size:10.5px;font-weight:bold;color:#444;letter-spacing:-.6px;transform:scaleX(.82);transform-origin:0 0">FRAZEOLOGICZNY &nbsp; Z INDEKSEM, &nbsp;WARSZAWA &nbsp;2021, &nbsp; TOM 1.</div>
  <div style="left:26px;top:52px;width:148px;height:2px;background:repeating-linear-gradient(90deg,#9c9c9c 0 3px,#dadada 3px 4px,#b4b4b4 4px 7px,#f6f6f6 7px 9px,#c4c4c4 9px 12px,#fff 12px 13px)"></div>
  <div style="left:28px;top:63px;width:182px;height:2px;background:repeating-linear-gradient(90deg,#9c9c9c 0 3px,#dadada 3px 4px,#b4b4b4 4px 7px,#f6f6f6 7px 9px,#c4c4c4 9px 12px,#fff 12px 13px)"></div>
  <div style="left:26px;top:74px;width:158px;height:2px;background:repeating-linear-gradient(90deg,#9c9c9c 0 3px,#dadada 3px 4px,#b4b4b4 4px 7px,#f6f6f6 7px 9px,#c4c4c4 9px 12px,#fff 12px 13px)"></div>
  <div style="left:26px;top:87px;width:170px;height:2px;background:repeating-linear-gradient(90deg,#9c9c9c 0 3px,#dadada 3px 4px,#b4b4b4 4px 7px,#f6f6f6 7px 9px,#c4c4c4 9px 12px,#fff 12px 13px)"></div>
  <div style="left:26px;top:98px;width:165px;height:2px;background:repeating-linear-gradient(90deg,#9c9c9c 0 3px,#dadada 3px 4px,#b4b4b4 4px 7px,#f6f6f6 7px 9px,#c4c4c4 9px 12px,#fff 12px 13px)"></div>
  <div style="left:26px;top:109px;width:182px;height:2px;background:repeating-linear-gradient(90deg,#9c9c9c 0 3px,#dadada 3px 4px,#b4b4b4 4px 7px,#f6f6f6 7px 9px,#c4c4c4 9px 12px,#fff 12px 13px)"></div>
  <div style="left:26px;top:120px;width:175px;height:2px;background:repeating-linear-gradient(90deg,#9c9c9c 0 3px,#dadada 3px 4px,#b4b4b4 4px 7px,#f6f6f6 7px 9px,#c4c4c4 9px 12px,#fff 12px 13px)"></div>
  <div style="left:26px;top:131px;width:190px;height:2px;background:repeating-linear-gradient(90deg,#9c9c9c 0 3px,#dadada 3px 4px,#b4b4b4 4px 7px,#f6f6f6 7px 9px,#c4c4c4 9px 12px,#fff 12px 13px)"></div>
  <div style="left:26px;top:142px;width:172px;height:2px;background:repeating-linear-gradient(90deg,#9c9c9c 0 3px,#dadada 3px 4px,#b4b4b4 4px 7px,#f6f6f6 7px 9px,#c4c4c4 9px 12px,#fff 12px 13px)"></div>
  <div style="left:26px;top:153px;width:190px;height:2px;background:repeating-linear-gradient(90deg,#9c9c9c 0 3px,#dadada 3px 4px,#b4b4b4 4px 7px,#f6f6f6 7px 9px,#c4c4c4 9px 12px,#fff 12px 13px)"></div>
  <div style="left:216px;top:53px;width:71px;height:104px;background:#883a3d"></div>
  <div style="left:216px;top:53px;width:71px;height:104px;background:linear-gradient(135deg,transparent 80%,#b8aca0 80%);"></div>
  <div style="left:218px;top:53px;width:69px;height:104px;background:linear-gradient(225deg,#c0b4a8 12%,transparent 12%)"></div>
  <div style="left:229px;top:68px;width:48px;height:32px;background:#b9b2b0;border-radius:3px"></div>
  <div style="left:233px;top:75px;width:40px;height:2px;background:#9a4a4a"></div>
  <div style="left:233px;top:82px;width:40px;height:2px;background:#8d8d8d"></div>
  <div style="left:233px;top:89px;width:40px;height:2px;background:#8d8d8d"></div>
</div>
<!-- cursor -->
<svg style="left:149px;top:584px" width="22" height="36" viewBox="0 0 22 36">
  <path d="M1 1v27l6-6 5 12 5-2-5-12h8z" fill="#fff" stroke="#222" stroke-width="2" stroke-linejoin="round"/>
</svg>

<div class="num" style="left:20px;top:693px">3</div>
<div class="thumb" style="top:684px">
  <div style="left:21px;top:22px;width:2px;height:23px;background:#3a9bb7"></div>
  <div class="t" style="left:28px;top:18px;font-size:16px;color:#404040;letter-spacing:-.8px">ФРАЗЕОЛОГІЗМ &nbsp; ЯК ОДИНИЦЯ</div>
  <div class="t" style="left:28px;top:31px;font-size:16px;color:#404040;letter-spacing:-.8px">СЛОВНИКА</div>
  <div style="left:41px;top:58px;width:224px;height:2px;background:repeating-linear-gradient(90deg,#9c9c9c 0 3px,#dadada 3px 4px,#b4b4b4 4px 7px,#f6f6f6 7px 9px,#c4c4c4 9px 12px,#fff 12px 13px)"></div>
  <div style="left:30px;top:65px;width:235px;height:2px;background:repeating-linear-gradient(90deg,#9c9c9c 0 3px,#dadada 3px 4px,#b4b4b4 4px 7px,#f6f6f6 7px 9px,#c4c4c4 9px 12px,#fff 12px 13px)"></div>
  <div style="left:30px;top:72px;width:235px;height:2px;background:repeating-linear-gradient(90deg,#9c9c9c 0 3px,#dadada 3px 4px,#b4b4b4 4px 7px,#f6f6f6 7px 9px,#c4c4c4 9px 12px,#fff 12px 13px)"></div>
  <div style="left:30px;top:79px;width:235px;height:2px;background:repeating-linear-gradient(90deg,#9c9c9c 0 3px,#dadada 3px 4px,#b4b4b4 4px 7px,#f6f6f6 7px 9px,#c4c4c4 9px 12px,#fff 12px 13px)"></div>
  <div style="left:30px;top:86px;width:235px;height:2px;background:repeating-linear-gradient(90deg,#9c9c9c 0 3px,#dadada 3px 4px,#b4b4b4 4px 7px,#f6f6f6 7px 9px,#c4c4c4 9px 12px,#fff 12px 13px)"></div>
  <div style="left:30px;top:92px;width:60px;height:2px;background:repeating-linear-gradient(90deg,#9c9c9c 0 3px,#dadada 3px 4px,#b4b4b4 4px 7px,#f6f6f6 7px 9px,#c4c4c4 9px 12px,#fff 12px 13px)"></div>
  <div style="left:30px;top:104px;width:182px;height:2px;background:repeating-linear-gradient(90deg,#9c9c9c 0 3px,#dadada 3px 4px,#b4b4b4 4px 7px,#f6f6f6 7px 9px,#c4c4c4 9px 12px,#fff 12px 13px)"></div>
  <div style="left:30px;top:111px;width:235px;height:2px;background:repeating-linear-gradient(90deg,#9c9c9c 0 3px,#dadada 3px 4px,#b4b4b4 4px 7px,#f6f6f6 7px 9px,#c4c4c4 9px 12px,#fff 12px 13px)"></div>
  <div style="left:30px;top:117px;width:194px;height:2px;background:repeating-linear-gradient(90deg,#9c9c9c 0 3px,#dadada 3px 4px,#b4b4b4 4px 7px,#f6f6f6 7px 9px,#c4c4c4 9px 12px,#fff 12px 13px)"></div>
  <div style="left:30px;top:124px;width:110px;height:2px;background:repeating-linear-gradient(90deg,#9c9c9c 0 3px,#dadada 3px 4px,#b4b4b4 4px 7px,#f6f6f6 7px 9px,#c4c4c4 9px 12px,#fff 12px 13px)"></div>
</div>

<div class="num" style="left:20px;top:882px">4</div>
<div class="thumb" style="top:873px">
  <div style="left:21px;top:22px;width:2px;height:23px;background:#3a9bb7"></div>
  <div class="t" style="left:28px;top:25px;font-size:16px;color:#404040;letter-spacing:-.8px">МАТЕРІАЛ &nbsp; СЛОВНИКА</div>
  <div style="left:41px;top:44px;width:224px;height:2px;background:repeating-linear-gradient(90deg,#9c9c9c 0 3px,#dadada 3px 4px,#b4b4b4 4px 7px,#f6f6f6 7px 9px,#c4c4c4 9px 12px,#fff 12px 13px)"></div>
  <div style="left:30px;top:52px;width:235px;height:2px;background:repeating-linear-gradient(90deg,#9c9c9c 0 3px,#dadada 3px 4px,#b4b4b4 4px 7px,#f6f6f6 7px 9px,#c4c4c4 9px 12px,#fff 12px 13px)"></div>
  <div style="left:30px;top:59px;width:235px;height:2px;background:repeating-linear-gradient(90deg,#9c9c9c 0 3px,#dadada 3px 4px,#b4b4b4 4px 7px,#f6f6f6 7px 9px,#c4c4c4 9px 12px,#fff 12px 13px)"></div>
  <div style="left:30px;top:66px;width:235px;height:2px;background:repeating-linear-gradient(90deg,#9c9c9c 0 3px,#dadada 3px 4px,#b4b4b4 4px 7px,#f6f6f6 7px 9px,#c4c4c4 9px 12px,#fff 12px 13px)"></div>
  <div style="left:30px;top:73px;width:235px;height:2px;background:repeating-linear-gradient(90deg,#9c9c9c 0 3px,#dadada 3px 4px,#b4b4b4 4px 7px,#f6f6f6 7px 9px,#c4c4c4 9px 12px,#fff 12px 13px)"></div>
  <div style="left:30px;top:80px;width:80px;height:2px;background:repeating-linear-gradient(90deg,#9c9c9c 0 3px,#dadada 3px 4px,#b4b4b4 4px 7px,#f6f6f6 7px 9px,#c4c4c4 9px 12px,#fff 12px 13px)"></div>
  <div style="left:41px;top:92px;width:224px;height:2px;background:repeating-linear-gradient(90deg,#9c9c9c 0 3px,#dadada 3px 4px,#b4b4b4 4px 7px,#f6f6f6 7px 9px,#c4c4c4 9px 12px,#fff 12px 13px)"></div>
  <div style="left:30px;top:103px;width:235px;height:2px;background:repeating-linear-gradient(90deg,#9c9c9c 0 3px,#dadada 3px 4px,#b4b4b4 4px 7px,#f6f6f6 7px 9px,#c4c4c4 9px 12px,#fff 12px 13px)"></div>
  <div style="left:30px;top:112px;width:235px;height:2px;background:repeating-linear-gradient(90deg,#9c9c9c 0 3px,#dadada 3px 4px,#b4b4b4 4px 7px,#f6f6f6 7px 9px,#c4c4c4 9px 12px,#fff 12px 13px)"></div>
  <div style="left:30px;top:119px;width:85px;height:2px;background:repeating-linear-gradient(90deg,#9c9c9c 0 3px,#dadada 3px 4px,#b4b4b4 4px 7px,#f6f6f6 7px 9px,#c4c4c4 9px 12px,#fff 12px 13px)"></div>
  <div style="left:41px;top:131px;width:224px;height:2px;background:repeating-linear-gradient(90deg,#9c9c9c 0 3px,#dadada 3px 4px,#b4b4b4 4px 7px,#f6f6f6 7px 9px,#c4c4c4 9px 12px,#fff 12px 13px)"></div>
  <div style="left:30px;top:140px;width:235px;height:2px;background:repeating-linear-gradient(90deg,#9c9c9c 0 3px,#dadada 3px 4px,#b4b4b4 4px 7px,#f6f6f6 7px 9px,#c4c4c4 9px 12px,#fff 12px 13px)"></div>
  <div style="left:30px;top:147px;width:235px;height:2px;background:repeating-linear-gradient(90deg,#9c9c9c 0 3px,#dadada 3px 4px,#b4b4b4 4px 7px,#f6f6f6 7px 9px,#c4c4c4 9px 12px,#fff 12px 13px)"></div>
  <div style="left:30px;top:154px;width:180px;height:2px;background:repeating-linear-gradient(90deg,#9c9c9c 0 3px,#dadada 3px 4px,#b4b4b4 4px 7px,#f6f6f6 7px 9px,#c4c4c4 9px 12px,#fff 12px 13px)"></div>
</div>

<div class="num" style="left:20px;top:1072px">5</div>
<div class="thumb" style="top:1063px">
  <div style="left:21px;top:22px;width:2px;height:23px;background:#3a9bb7"></div>
  <div class="t" style="left:28px;top:17px;font-size:16px;color:#404040;letter-spacing:-.8px">БУДОВА &nbsp;СЛОВНИКОВОЇ</div>
  <div class="t" style="left:28px;top:29px;font-size:16px;color:#404040;letter-spacing:-.8px">СТАТТІ</div>
  <div style="left:43px;top:46px;width:85px;height:2px;background:repeating-linear-gradient(90deg,#9c9c9c 0 3px,#dadada 3px 4px,#b4b4b4 4px 7px,#f6f6f6 7px 9px,#c4c4c4 9px 12px,#fff 12px 13px)"></div>
  <div style="left:43px;top:56px;width:65px;height:2px;background:repeating-linear-gradient(90deg,#9c9c9c 0 3px,#dadada 3px 4px,#b4b4b4 4px 7px,#f6f6f6 7px 9px,#c4c4c4 9px 12px,#fff 12px 13px)"></div>
  <div style="left:43px;top:67px;width:146px;height:2px;background:repeating-linear-gradient(90deg,#9c9c9c 0 3px,#dadada 3px 4px,#b4b4b4 4px 7px,#f6f6f6 7px 9px,#c4c4c4 9px 12px,#fff 12px 13px)"></div>
  <div style="left:43px;top:76px;width:122px;height:2px;background:repeating-linear-gradient(90deg,#9c9c9c 0 3px,#dadada 3px 4px,#b4b4b4 4px 7px,#f6f6f6 7px 9px,#c4c4c4 9px 12px,#fff 12px 13px)"></div>
  <div style="left:43px;top:85px;width:166px;height:2px;background:repeating-linear-gradient(90deg,#9c9c9c 0 3px,#dadada 3px 4px,#b4b4b4 4px 7px,#f6f6f6 7px 9px,#c4c4c4 9px 12px,#fff 12px 13px)"></div>
  <div style="left:43px;top:95px;width:190px;height:2px;background:repeating-linear-gradient(90deg,#9c9c9c 0 3px,#dadada 3px 4px,#b4b4b4 4px 7px,#f6f6f6 7px 9px,#c4c4c4 9px 12px,#fff 12px 13px)"></div>
  <div style="left:32px;top:101px;width:178px;height:2px;background:repeating-linear-gradient(90deg,#9c9c9c 0 3px,#dadada 3px 4px,#b4b4b4 4px 7px,#f6f6f6 7px 9px,#c4c4c4 9px 12px,#fff 12px 13px)"></div>
  <div style="left:32px;top:106px;width:18px;height:2px;background:repeating-linear-gradient(90deg,#9c9c9c 0 3px,#dadada 3px 4px,#b4b4b4 4px 7px,#f6f6f6 7px 9px,#c4c4c4 9px 12px,#fff 12px 13px)"></div>
  <div style="left:32px;top:113px;width:68px;height:2px;background:repeating-linear-gradient(90deg,#9c9c9c 0 3px,#dadada 3px 4px,#b4b4b4 4px 7px,#f6f6f6 7px 9px,#c4c4c4 9px 12px,#fff 12px 13px)"></div>
  <div style="left:32px;top:121px;width:196px;height:2px;background:repeating-linear-gradient(90deg,#9c9c9c 0 3px,#dadada 3px 4px,#b4b4b4 4px 7px,#f6f6f6 7px 9px,#c4c4c4 9px 12px,#fff 12px 13px)"></div>
  <div style="left:32px;top:128px;width:120px;height:2px;background:repeating-linear-gradient(90deg,#9c9c9c 0 3px,#dadada 3px 4px,#b4b4b4 4px 7px,#f6f6f6 7px 9px,#c4c4c4 9px 12px,#fff 12px 13px)"></div>
</div>

<div class="num" style="left:20px;top:1261px">6</div>
<div class="thumb" style="top:1252px">
  <div style="left:21px;top:22px;width:2px;height:23px;background:#3a9bb7"></div>
  <div class="t" style="left:28px;top:17px;font-size:16px;color:#404040;letter-spacing:-.8px">БУДОВА &nbsp;СЛОВНИКОВОЇ</div>
  <div class="t" style="left:28px;top:29px;font-size:16px;color:#404040;letter-spacing:-.8px">СТАТТІ &nbsp;-2</div>
  <div style="left:41px;top:62px;width:196px;height:2px;background:repeating-linear-gradient(90deg,#9c9c9c 0 3px,#dadada 3px 4px,#b4b4b4 4px 7px,#f6f6f6 7px 9px,#c4c4c4 9px 12px,#fff 12px 13px)"></div>
  <div style="left:30px;top:68px;width:170px;height:2px;background:repeating-linear-gradient(90deg,#9c9c9c 0 3px,#dadada 3px 4px,#b4b4b4 4px 7px,#f6f6f6 7px 9px,#c4c4c4 9px 12px,#fff 12px 13px)"></div>
  <div style="left:30px;top:75px;width:5px;height:2px;background:repeating-linear-gradient(90deg,#9c9c9c 0 3px,#dadada 3px 4px,#b4b4b4 4px 7px,#f6f6f6 7px 9px,#c4c4c4 9px 12px,#fff 12px 13px)"></div>
  <div style="left:30px;top:82px;width:22px;height:2px;background:repeating-linear-gradient(90deg,#9c9c9c 0 3px,#dadada 3px 4px,#b4b4b4 4px 7px,#f6f6f6 7px 9px,#c4c4c4 9px 12px,#fff 12px 13px)"></div>
  <div style="left:30px;top:90px;width:110px;height:2px;background:repeating-linear-gradient(90deg,#9c9c9c 0 3px,#dadada 3px 4px,#b4b4b4 4px 7px,#f6f6f6 7px 9px,#c4c4c4 9px 12px,#fff 12px 13px)"></div>
  <div style="left:30px;top:99px;width:33px;height:2px;background:repeating-linear-gradient(90deg,#9c9c9c 0 3px,#dadada 3px 4px,#b4b4b4 4px 7px,#f6f6f6 7px 9px,#c4c4c4 9px 12px,#fff 12px 13px)"></div>
  <div style="left:30px;top:106px;width:40px;height:2px;background:repeating-linear-gradient(90deg,#9c9c9c 0 3px,#dadada 3px 4px,#b4b4b4 4px 7px,#f6f6f6 7px 9px,#c4c4c4 9px 12px,#fff 12px 13px)"></div>
  <div style="left:30px;top:114px;width:128px;height:2px;background:repeating-linear-gradient(90deg,#9c9c9c 0 3px,#dadada 3px 4px,#b4b4b4 4px 7px,#f6f6f6 7px 9px,#c4c4c4 9px 12px,#fff 12px 13px)"></div>
  <div style="left:30px;top:121px;width:38px;height:2px;background:repeating-linear-gradient(90deg,#9c9c9c 0 3px,#dadada 3px 4px,#b4b4b4 4px 7px,#f6f6f6 7px 9px,#c4c4c4 9px 12px,#fff 12px 13px)"></div>
  <div style="left:30px;top:130px;width:48px;height:2px;background:repeating-linear-gradient(90deg,#9c9c9c 0 3px,#dadada 3px 4px,#b4b4b4 4px 7px,#f6f6f6 7px 9px,#c4c4c4 9px 12px,#fff 12px 13px)"></div>
  <div style="left:30px;top:138px;width:122px;height:2px;background:repeating-linear-gradient(90deg,#9c9c9c 0 3px,#dadada 3px 4px,#b4b4b4 4px 7px,#f6f6f6 7px 9px,#c4c4c4 9px 12px,#fff 12px 13px)"></div>
  <div style="left:30px;top:145px;width:52px;height:2px;background:repeating-linear-gradient(90deg,#9c9c9c 0 3px,#dadada 3px 4px,#b4b4b4 4px 7px,#f6f6f6 7px 9px,#c4c4c4 9px 12px,#fff 12px 13px)"></div>
</div>

<div class="num" style="left:20px;top:1451px">7</div>
<div class="thumb" style="top:1442px;height:63px;box-shadow:0 -2px 4px 1px rgba(80,82,90,.45)">
  <div style="left:21px;top:22px;width:2px;height:23px;background:#3a9bb7"></div>
  <div class="t" style="left:28px;top:17px;font-size:16px;color:#404040;letter-spacing:-.8px">СИНОНІМІЯ &nbsp;ТА</div>
  <div class="t" style="left:28px;top:30px;font-size:16px;color:#404040;letter-spacing:-.8px">ВАРІАНТНІСТЬ &nbsp; У СЛОВНИКУ</div>
  <div style="left:41px;top:59px;width:196px;height:2px;background:repeating-linear-gradient(90deg,#9c9c9c 0 3px,#dadada 3px 4px,#b4b4b4 4px 7px,#f6f6f6 7px 9px,#c4c4c4 9px 12px,#fff 12px 13px)"></div>
</div>

<!-- main slide -->
<div style="left:486px;top:452px;width:1951px;height:1043px;background:#fff;box-shadow:0 0 16px 4px rgba(90,92,100,.55);overflow:hidden">
  <svg width="1951" height="731" viewBox="0 0 1951 731" style="position:absolute;left:0;top:0;display:block;overflow:hidden"><rect width="1951" height="731" fill="#3d7eaa"/><path fill="#fdfdfd" fill-rule="evenodd" d="M232.95 -38.65A135.35 135.35 0 0 1 97.60 96.70A135.35 135.35 0 0 1 232.95 -38.65ZM207.49 -13.19A112.8 112.8 0 0 1 123.06 71.24A112.8 112.8 0 0 1 207.49 -13.19ZM503.65 -38.65A135.35 135.35 0 0 1 368.30 96.70A135.35 135.35 0 0 1 503.65 -38.65ZM478.19 -13.19A112.8 112.8 0 0 1 393.76 71.24A112.8 112.8 0 0 1 478.19 -13.19ZM774.35 -38.65A135.35 135.35 0 0 1 639.00 96.70A135.35 135.35 0 0 1 774.35 -38.65ZM748.89 -13.19A112.8 112.8 0 0 1 664.46 71.24A112.8 112.8 0 0 1 748.89 -13.19ZM1045.05 -38.65A135.35 135.35 0 0 1 909.70 96.70A135.35 135.35 0 0 1 1045.05 -38.65ZM1019.59 -13.19A112.8 112.8 0 0 1 935.16 71.24A112.8 112.8 0 0 1 1019.59 -13.19ZM1315.75 -38.65A135.35 135.35 0 0 1 1180.40 96.70A135.35 135.35 0 0 1 1315.75 -38.65ZM1290.29 -13.19A112.8 112.8 0 0 1 1205.86 71.24A112.8 112.8 0 0 1 1290.29 -13.19ZM1586.45 -38.65A135.35 135.35 0 0 1 1451.10 96.70A135.35 135.35 0 0 1 1586.45 -38.65ZM1560.99 -13.19A112.8 112.8 0 0 1 1476.56 71.24A112.8 112.8 0 0 1 1560.99 -13.19ZM1857.15 -38.65A135.35 135.35 0 0 1 1721.80 96.70A135.35 135.35 0 0 1 1857.15 -38.65ZM1831.69 -13.19A112.8 112.8 0 0 1 1747.26 71.24A112.8 112.8 0 0 1 1831.69 -13.19ZM97.60 96.70A135.35 135.35 0 0 1 -37.75 232.05A135.35 135.35 0 0 1 97.60 96.70ZM72.14 122.16A112.8 112.8 0 0 1 -12.29 206.59A112.8 112.8 0 0 1 72.14 122.16ZM97.60 96.70A135.35 135.35 0 0 0 -37.75 -38.65A135.35 135.35 0 0 0 97.60 96.70ZM72.14 71.24A112.8 112.8 0 0 0 -12.29 -13.19A112.8 112.8 0 0 0 72.14 71.24ZM368.30 96.70A135.35 135.35 0 0 1 232.95 232.05A135.35 135.35 0 0 1 368.30 96.70ZM342.84 122.16A112.8 112.8 0 0 1 258.41 206.59A112.8 112.8 0 0 1 342.84 122.16ZM368.30 96.70A135.35 135.35 0 0 0 232.95 -38.65A135.35 135.35 0 0 0 368.30 96.70ZM342.84 71.24A112.8 112.8 0 0 0 258.41 -13.19A112.8 112.8 0 0 0 342.84 71.24ZM639.00 96.70A135.35 135.35 0 0 1 503.65 232.05A135.35 135.35 0 0 1 639.00 96.70ZM613.54 122.16A112.8 112.8 0 0 1 529.11 206.59A112.8 112.8 0 0 1 613.54 122.16ZM639.00 96.70A135.35 135.35 0 0 0 503.65 -38.65A135.35 135.35 0 0 0 639.00 96.70ZM613.54 71.24A112.8 112.8 0 0 0 529.11 -13.19A112.8 112.8 0 0 0 613.54 71.24ZM909.70 96.70A135.35 135.35 0 0 1 774.35 232.05A135.35 135.35 0 0 1 909.70 96.70ZM884.24 122.16A112.8 112.8 0 0 1 799.81 206.59A112.8 112.8 0 0 1 884.24 122.16ZM909.70 96.70A135.35 135.35 0 0 0 774.35 -38.65A135.35 135.35 0 0 0 909.70 96.70ZM884.24 71.24A112.8 112.8 0 0 0 799.81 -13.19A112.8 112.8 0 0 0 884.24 71.24ZM1180.40 96.70A135.35 135.35 0 0 1 1045.05 232.05A135.35 135.35 0 0 1 1180.40 96.70ZM1154.94 122.16A112.8 112.8 0 0 1 1070.51 206.59A112.8 112.8 0 0 1 1154.94 122.16ZM1180.40 96.70A135.35 135.35 0 0 0 1045.05 -38.65A135.35 135.35 0 0 0 1180.40 96.70ZM1154.94 71.24A112.8 112.8 0 0 0 1070.51 -13.19A112.8 112.8 0 0 0 1154.94 71.24ZM1451.10 96.70A135.35 135.35 0 0 1 1315.75 232.05A135.35 135.35 0 0 1 1451.10 96.70ZM1425.64 122.16A112.8 112.8 0 0 1 1341.21 206.59A112.8 112.8 0 0 1 1425.64 122.16ZM1451.10 96.70A135.35 135.35 0 0 0 1315.75 -38.65A135.35 135.35 0 0 0 1451.10 96.70ZM1425.64 71.24A112.8 112.8 0 0 0 1341.21 -13.19A112.8 112.8 0 0 0 1425.64 71.24ZM1721.80 96.70A135.35 135.35 0 0 1 1586.45 232.05A135.35 135.35 0 0 1 1721.80 96.70ZM1696.34 122.16A112.8 112.8 0 0 1 1611.91 206.59A112.8 112.8 0 0 1 1696.34 122.16ZM1721.80 96.70A135.35 135.35 0 0 0 1586.45 -38.65A135.35 135.35 0 0 0 1721.80 96.70ZM1696.34 71.24A112.8 112.8 0 0 0 1611.91 -13.19A112.8 112.8 0 0 0 1696.34 71.24ZM1992.50 96.70A135.35 135.35 0 0 1 1857.15 232.05A135.35 135.35 0 0 1 1992.50 96.70ZM1967.04 122.16A112.8 112.8 0 0 1 1882.61 206.59A112.8 112.8 0 0 1 1967.04 122.16ZM1992.50 96.70A135.35 135.35 0 0 0 1857.15 -38.65A135.35 135.35 0 0 0 1992.50 96.70ZM1967.04 71.24A112.8 112.8 0 0 0 1882.61 -13.19A112.8 112.8 0 0 0 1967.04 71.24ZM232.95 232.05A135.35 135.35 0 0 1 97.60 367.40A135.35 135.35 0 0 1 232.95 232.05ZM207.49 257.51A112.8 112.8 0 0 1 123.06 341.94A112.8 112.8 0 0 1 207.49 257.51ZM232.95 232.05A135.35 135.35 0 0 0 97.60 96.70A135.35 135.35 0 0 0 232.95 232.05ZM207.49 206.59A112.8 112.8 0 0 0 123.06 122.16A112.8 112.8 0 0 0 207.49 206.59ZM503.65 232.05A135.35 135.35 0 0 1 368.30 367.40A135.35 135.35 0 0 1 503.65 232.05ZM478.19 257.51A112.8 112.8 0 0 1 393.76 341.94A112.8 112.8 0 0 1 478.19 257.51ZM503.65 232.05A135.35 135.35 0 0 0 368.30 96.70A135.35 135.35 0 0 0 503.65 232.05ZM478.19 206.59A112.8 112.8 0 0 0 393.76 122.16A112.8 112.8 0 0 0 478.19 206.59ZM774.35 232.05A135.35 135.35 0 0 1 639.00 367.40A135.35 135.35 0 0 1 774.35 232.05ZM748.89 257.51A112.8 112.8 0 0 1 664.46 341.94A112.8 112.8 0 0 1 748.89 257.51ZM774.35 232.05A135.35 135.35 0 0 0 639.00 96.70A135.35 135.35 0 0 0 774.35 232.05ZM748.89 206.59A112.8 112.8 0 0 0 664.46 122.16A112.8 112.8 0 0 0 748.89 206.59ZM1045.05 232.05A135.35 135.35 0 0 1 909.70 367.40A135.35 135.35 0 0 1 1045.05 232.05ZM1019.59 257.51A112.8 112.8 0 0 1 935.16 341.94A112.8 112.8 0 0 1 1019.59 257.51ZM1045.05 232.05A135.35 135.35 0 0 0 909.70 96.70A135.35 135.35 0 0 0 1045.05 232.05ZM1019.59 206.59A112.8 112.8 0 0 0 935.16 122.16A112.8 112.8 0 0 0 1019.59 206.59ZM1315.75 232.05A135.35 135.35 0 0 1 1180.40 367.40A135.35 135.35 0 0 1 1315.75 232.05ZM1290.29 257.51A112.8 112.8 0 0 1 1205.86 341.94A112.8 112.8 0 0 1 1290.29 257.51ZM1315.75 232.05A135.35 135.35 0 0 0 1180.40 96.70A135.35 135.35 0 0 0 1315.75 232.05ZM1290.29 206.59A112.8 112.8 0 0 0 1205.86 122.16A112.8 112.8 0 0 0 1290.29 206.59ZM1586.45 232.05A135.35 135.35 0 0 1 1451.10 367.40A135.35 135.35 0 0 1 1586.45 232.05ZM1560.99 257.51A112.8 112.8 0 0 1 1476.56 341.94A112.8 112.8 0 0 1 1560.99 257.51ZM1586.45 232.05A135.35 135.35 0 0 0 1451.10 96.70A135.35 135.35 0 0 0 1586.45 232.05ZM1560.99 206.59A112.8 112.8 0 0 0 1476.56 122.16A112.8 112.8 0 0 0 1560.99 206.59ZM1857.15 232.05A135.35 135.35 0 0 1 1721.80 367.40A135.35 135.35 0 0 1 1857.15 232.05ZM1831.69 257.51A112.8 112.8 0 0 1 1747.26 341.94A112.8 112.8 0 0 1 1831.69 257.51ZM1857.15 232.05A135.35 135.35 0 0 0 1721.80 96.70A135.35 135.35 0 0 0 1857.15 232.05ZM1831.69 206.59A112.8 112.8 0 0 0 1747.26 122.16A112.8 112.8 0 0 0 1831.69 206.59ZM97.60 367.40A135.35 135.35 0 0 1 -37.75 502.75A135.35 135.35 0 0 1 97.60 367.40ZM72.14 392.86A112.8 112.8 0 0 1 -12.29 477.29A112.8 112.8 0 0 1 72.14 392.86ZM97.60 367.40A135.35 135.35 0 0 0 -37.75 232.05A135.35 135.35 0 0 0 97.60 367.40ZM72.14 341.94A112.8 112.8 0 0 0 -12.29 257.51A112.8 112.8 0 0 0 72.14 341.94ZM368.30 367.40A135.35 135.35 0 0 1 232.95 502.75A135.35 135.35 0 0 1 368.30 367.40ZM342.84 392.86A112.8 112.8 0 0 1 258.41 477.29A112.8 112.8 0 0 1 342.84 392.86ZM368.30 367.40A135.35 135.35 0 0 0 232.95 232.05A135.35 135.35 0 0 0 368.30 367.40ZM342.84 341.94A112.8 112.8 0 0 0 258.41 257.51A112.8 112.8 0 0 0 342.84 341.94ZM639.00 367.40A135.35 135.35 0 0 1 503.65 502.75A135.35 135.35 0 0 1 639.00 367.40ZM613.54 392.86A112.8 112.8 0 0 1 529.11 477.29A112.8 112.8 0 0 1 613.54 392.86ZM639.00 367.40A135.35 135.35 0 0 0 503.65 232.05A135.35 135.35 0 0 0 639.00 367.40ZM613.54 341.94A112.8 112.8 0 0 0 529.11 257.51A112.8 112.8 0 0 0 613.54 341.94ZM909.70 367.40A135.35 135.35 0 0 1 774.35 502.75A135.35 135.35 0 0 1 909.70 367.40ZM884.24 392.86A112.8 112.8 0 0 1 799.81 477.29A112.8 112.8 0 0 1 884.24 392.86ZM909.70 367.40A135.35 135.35 0 0 0 774.35 232.05A135.35 135.35 0 0 0 909.70 367.40ZM884.24 341.94A112.8 112.8 0 0 0 799.81 257.51A112.8 112.8 0 0 0 884.24 341.94ZM1180.40 367.40A135.35 135.35 0 0 1 1045.05 502.75A135.35 135.35 0 0 1 1180.40 367.40ZM1154.94 392.86A112.8 112.8 0 0 1 1070.51 477.29A112.8 112.8 0 0 1 1154.94 392.86ZM1180.40 367.40A135.35 135.35 0 0 0 1045.05 232.05A135.35 135.35 0 0 0 1180.40 367.40ZM1154.94 341.94A112.8 112.8 0 0 0 1070.51 257.51A112.8 112.8 0 0 0 1154.94 341.94ZM1451.10 367.40A135.35 135.35 0 0 1 1315.75 502.75A135.35 135.35 0 0 1 1451.10 367.40ZM1425.64 392.86A112.8 112.8 0 0 1 1341.21 477.29A112.8 112.8 0 0 1 1425.64 392.86ZM1451.10 367.40A135.35 135.35 0 0 0 1315.75 232.05A135.35 135.35 0 0 0 1451.10 367.40ZM1425.64 341.94A112.8 112.8 0 0 0 1341.21 257.51A112.8 112.8 0 0 0 1425.64 341.94ZM1721.80 367.40A135.35 135.35 0 0 1 1586.45 502.75A135.35 135.35 0 0 1 1721.80 367.40ZM1696.34 392.86A112.8 112.8 0 0 1 1611.91 477.29A112.8 112.8 0 0 1 1696.34 392.86ZM1721.80 367.40A135.35 135.35 0 0 0 1586.45 232.05A135.35 135.35 0 0 0 1721.80 367.40ZM1696.34 341.94A112.8 112.8 0 0 0 1611.91 257.51A112.8 112.8 0 0 0 1696.34 341.94ZM1992.50 367.40A135.35 135.35 0 0 1 1857.15 502.75A135.35 135.35 0 0 1 1992.50 367.40ZM1967.04 392.86A112.8 112.8 0 0 1 1882.61 477.29A112.8 112.8 0 0 1 1967.04 392.86ZM1992.50 367.40A135.35 135.35 0 0 0 1857.15 232.05A135.35 135.35 0 0 0 1992.50 367.40ZM1967.04 341.94A112.8 112.8 0 0 0 1882.61 257.51A112.8 112.8 0 0 0 1967.04 341.94ZM232.95 502.75A135.35 135.35 0 0 1 97.60 638.10A135.35 135.35 0 0 1 232.95 502.75ZM207.49 528.21A112.8 112.8 0 0 1 123.06 612.64A112.8 112.8 0 0 1 207.49 528.21ZM232.95 502.75A135.35 135.35 0 0 0 97.60 367.40A135.35 135.35 0 0 0 232.95 502.75ZM207.49 477.29A112.8 112.8 0 0 0 123.06 392.86A112.8 112.8 0 0 0 207.49 477.29ZM503.65 502.75A135.35 135.35 0 0 1 368.30 638.10A135.35 135.35 0 0 1 503.65 502.75ZM478.19 528.21A112.8 112.8 0 0 1 393.76 612.64A112.8 112.8 0 0 1 478.19 528.21ZM503.65 502.75A135.35 135.35 0 0 0 368.30 367.40A135.35 135.35 0 0 0 503.65 502.75ZM478.19 477.29A112.8 112.8 0 0 0 393.76 392.86A112.8 112.8 0 0 0 478.19 477.29ZM774.35 502.75A135.35 135.35 0 0 1 639.00 638.10A135.35 135.35 0 0 1 774.35 502.75ZM748.89 528.21A112.8 112.8 0 0 1 664.46 612.64A112.8 112.8 0 0 1 748.89 528.21ZM774.35 502.75A135.35 135.35 0 0 0 639.00 367.40A135.35 135.35 0 0 0 774.35 502.75ZM748.89 477.29A112.8 112.8 0 0 0 664.46 392.86A112.8 112.8 0 0 0 748.89 477.29ZM1045.05 502.75A135.35 135.35 0 0 1 909.70 638.10A135.35 135.35 0 0 1 1045.05 502.75ZM1019.59 528.21A112.8 112.8 0 0 1 935.16 612.64A112.8 112.8 0 0 1 1019.59 528.21ZM1045.05 502.75A135.35 135.35 0 0 0 909.70 367.40A135.35 135.35 0 0 0 1045.05 502.75ZM1019.59 477.29A112.8 112.8 0 0 0 935.16 392.86A112.8 112.8 0 0 0 1019.59 477.29ZM1315.75 502.75A135.35 135.35 0 0 1 1180.40 638.10A135.35 135.35 0 0 1 1315.75 502.75ZM1290.29 528.21A112.8 112.8 0 0 1 1205.86 612.64A112.8 112.8 0 0 1 1290.29 528.21ZM1315.75 502.75A135.35 135.35 0 0 0 1180.40 367.40A135.35 135.35 0 0 0 1315.75 502.75ZM1290.29 477.29A112.8 112.8 0 0 0 1205.86 392.86A112.8 112.8 0 0 0 1290.29 477.29ZM1586.45 502.75A135.35 135.35 0 0 1 1451.10 638.10A135.35 135.35 0 0 1 1586.45 502.75ZM1560.99 528.21A112.8 112.8 0 0 1 1476.56 612.64A112.8 112.8 0 0 1 1560.99 528.21ZM1586.45 502.75A135.35 135.35 0 0 0 1451.10 367.40A135.35 135.35 0 0 0 1586.45 502.75ZM1560.99 477.29A112.8 112.8 0 0 0 1476.56 392.86A112.8 112.8 0 0 0 1560.99 477.29ZM1857.15 502.75A135.35 135.35 0 0 1 1721.80 638.10A135.35 135.35 0 0 1 1857.15 502.75ZM1831.69 528.21A112.8 112.8 0 0 1 1747.26 612.64A112.8 112.8 0 0 1 1831.69 528.21ZM1857.15 502.75A135.35 135.35 0 0 0 1721.80 367.40A135.35 135.35 0 0 0 1857.15 502.75ZM1831.69 477.29A112.8 112.8 0 0 0 1747.26 392.86A112.8 112.8 0 0 0 1831.69 477.29ZM97.60 638.10A135.35 135.35 0 0 1 -37.75 773.45A135.35 135.35 0 0 1 97.60 638.10ZM72.14 663.56A112.8 112.8 0 0 1 -12.29 747.99A112.8 112.8 0 0 1 72.14 663.56ZM97.60 638.10A135.35 135.35 0 0 0 -37.75 502.75A135.35 135.35 0 0 0 97.60 638.10ZM72.14 612.64A112.8 112.8 0 0 0 -12.29 528.21A112.8 112.8 0 0 0 72.14 612.64ZM368.30 638.10A135.35 135.35 0 0 1 232.95 773.45A135.35 135.35 0 0 1 368.30 638.10ZM342.84 663.56A112.8 112.8 0 0 1 258.41 747.99A112.8 112.8 0 0 1 342.84 663.56ZM368.30 638.10A135.35 135.35 0 0 0 232.95 502.75A135.35 135.35 0 0 0 368.30 638.10ZM342.84 612.64A112.8 112.8 0 0 0 258.41 528.21A112.8 112.8 0 0 0 342.84 612.64ZM639.00 638.10A135.35 135.35 0 0 1 503.65 773.45A135.35 135.35 0 0 1 639.00 638.10ZM613.54 663.56A112.8 112.8 0 0 1 529.11 747.99A112.8 112.8 0 0 1 613.54 663.56ZM639.00 638.10A135.35 135.35 0 0 0 503.65 502.75A135.35 135.35 0 0 0 639.00 638.10ZM613.54 612.64A112.8 112.8 0 0 0 529.11 528.21A112.8 112.8 0 0 0 613.54 612.64ZM909.70 638.10A135.35 135.35 0 0 1 774.35 773.45A135.35 135.35 0 0 1 909.70 638.10ZM884.24 663.56A112.8 112.8 0 0 1 799.81 747.99A112.8 112.8 0 0 1 884.24 663.56ZM909.70 638.10A135.35 135.35 0 0 0 774.35 502.75A135.35 135.35 0 0 0 909.70 638.10ZM884.24 612.64A112.8 112.8 0 0 0 799.81 528.21A112.8 112.8 0 0 0 884.24 612.64ZM1180.40 638.10A135.35 135.35 0 0 1 1045.05 773.45A135.35 135.35 0 0 1 1180.40 638.10ZM1154.94 663.56A112.8 112.8 0 0 1 1070.51 747.99A112.8 112.8 0 0 1 1154.94 663.56ZM1180.40 638.10A135.35 135.35 0 0 0 1045.05 502.75A135.35 135.35 0 0 0 1180.40 638.10ZM1154.94 612.64A112.8 112.8 0 0 0 1070.51 528.21A112.8 112.8 0 0 0 1154.94 612.64ZM1451.10 638.10A135.35 135.35 0 0 1 1315.75 773.45A135.35 135.35 0 0 1 1451.10 638.10ZM1425.64 663.56A112.8 112.8 0 0 1 1341.21 747.99A112.8 112.8 0 0 1 1425.64 663.56ZM1451.10 638.10A135.35 135.35 0 0 0 1315.75 502.75A135.35 135.35 0 0 0 1451.10 638.10ZM1425.64 612.64A112.8 112.8 0 0 0 1341.21 528.21A112.8 112.8 0 0 0 1425.64 612.64ZM1721.80 638.10A135.35 135.35 0 0 1 1586.45 773.45A135.35 135.35 0 0 1 1721.80 638.10ZM1696.34 663.56A112.8 112.8 0 0 1 1611.91 747.99A112.8 112.8 0 0 1 1696.34 663.56ZM1721.80 638.10A135.35 135.35 0 0 0 1586.45 502.75A135.35 135.35 0 0 0 1721.80 638.10ZM1696.34 612.64A112.8 112.8 0 0 0 1611.91 528.21A112.8 112.8 0 0 0 1696.34 612.64ZM1992.50 638.10A135.35 135.35 0 0 1 1857.15 773.45A135.35 135.35 0 0 1 1992.50 638.10ZM1967.04 663.56A112.8 112.8 0 0 1 1882.61 747.99A112.8 112.8 0 0 1 1967.04 663.56ZM1992.50 638.10A135.35 135.35 0 0 0 1857.15 502.75A135.35 135.35 0 0 0 1992.50 638.10ZM1967.04 612.64A112.8 112.8 0 0 0 1882.61 528.21A112.8 112.8 0 0 0 1967.04 612.64ZM232.95 773.45A135.35 135.35 0 0 0 97.60 638.10A135.35 135.35 0 0 0 232.95 773.45ZM207.49 747.99A112.8 112.8 0 0 0 123.06 663.56A112.8 112.8 0 0 0 207.49 747.99ZM503.65 773.45A135.35 135.35 0 0 0 368.30 638.10A135.35 135.35 0 0 0 503.65 773.45ZM478.19 747.99A112.8 112.8 0 0 0 393.76 663.56A112.8 112.8 0 0 0 478.19 747.99ZM774.35 773.45A135.35 135.35 0 0 0 639.00 638.10A135.35 135.35 0 0 0 774.35 773.45ZM748.89 747.99A112.8 112.8 0 0 0 664.46 663.56A112.8 112.8 0 0 0 748.89 747.99ZM1045.05 773.45A135.35 135.35 0 0 0 909.70 638.10A135.35 135.35 0 0 0 1045.05 773.45ZM1019.59 747.99A112.8 112.8 0 0 0 935.16 663.56A112.8 112.8 0 0 0 1019.59 747.99ZM1315.75 773.45A135.35 135.35 0 0 0 1180.40 638.10A135.35 135.35 0 0 0 1315.75 773.45ZM1290.29 747.99A112.8 112.8 0 0 0 1205.86 663.56A112.8 112.8 0 0 0 1290.29 747.99ZM1586.45 773.45A135.35 135.35 0 0 0 1451.10 638.10A135.35 135.35 0 0 0 1586.45 773.45ZM1560.99 747.99A112.8 112.8 0 0 0 1476.56 663.56A112.8 112.8 0 0 0 1560.99 747.99ZM1857.15 773.45A135.35 135.35 0 0 0 1721.80 638.10A135.35 135.35 0 0 0 1857.15 773.45ZM1831.69 747.99A112.8 112.8 0 0 0 1747.26 663.56A112.8 112.8 0 0 0 1831.69 747.99Z"/></svg>
  <div class="t tt" style="top:787.5px;right:660px;letter-spacing:5.1px">ПОЛЬСЬКО-УКРАЇНСЬКИЙ</div>
  <div class="t tt" style="top:849px;right:657px;letter-spacing:5.35px">ФРАЗЕОЛОГІЧНИЙ СЛОВНИК:</div>
  <div class="t tt" style="top:913px;right:664px;letter-spacing:4.78px">СТРУКТУРА, СЕМАНТИКА,</div>
  <div class="t tt" style="top:975px;right:662px;letter-spacing:4.7px">ЕКВІВАЛЕНТНІСТЬ</div>
  <svg style="left:0;top:0" width="1951" height="1043" viewBox="0 0 1951 1043"><g fill="none" stroke="#e4473f" stroke-width="1.7" opacity=".9"><polyline points="368.5,843.0 371.8,846.2 375.0,843.0 378.2,846.2 381.5,843.0 384.8,846.2 388.0,843.0 391.2,846.2 394.5,843.0 397.8,846.2 401.0,843.0 404.2,846.2 407.5,843.0 410.8,846.2 414.0,843.0 417.2,846.2 420.5,843.0 423.8,846.2 427.0,843.0 430.2,846.2 433.5,843.0 436.8,846.2 440.0,843.0 443.2,846.2 446.5,843.0 449.8,846.2 453.0,843.0 456.2,846.2 459.5,843.0 462.8,846.2 466.0,843.0 469.2,846.2 472.5,843.0 475.8,846.2 479.0,843.0 482.2,846.2 485.5,843.0 488.8,846.2 492.0,843.0 495.2,846.2 498.5,843.0 501.8,846.2 505.0,843.0 508.2,846.2 511.5,843.0 514.8,846.2 518.0,843.0 521.2,846.2 524.5,843.0 527.8,846.2 531.0,843.0 534.2,846.2 537.5,843.0 540.8,846.2 544.0,843.0 547.2,846.2 550.5,843.0 553.8,846.2 557.0,843.0 560.2,846.2 563.5,843.0 566.8,846.2 570.0,843.0 573.2,846.2 576.5,843.0 579.8,846.2 583.0,843.0 586.2,846.2 589.5,843.0 592.8,846.2 596.0,843.0 599.2,846.2 602.5,843.0 605.8,846.2 609.0,843.0 612.2,846.2 615.5,843.0 618.8,846.2 622.0,843.0 625.2,846.2 628.5,843.0 631.8,846.2 635.0,843.0 638.2,846.2 641.5,843.0 644.8,846.2 648.0,843.0 651.2,846.2 654.5,843.0 657.8,846.2 661.0,843.0 664.2,846.2 667.5,843.0 670.8,846.2 674.0,843.0 677.2,846.2 680.5,843.0 683.8,846.2 687.0,843.0 690.2,846.2 693.5,843.0 696.8,846.2 700.0,843.0 703.2,846.2 706.5,843.0 709.8,846.2 713.0,843.0 716.2,846.2 719.5,843.0 722.8,846.2 726.0,843.0 729.2,846.2 732.5,843.0 735.8,846.2 739.0,843.0 742.2,846.2 745.5,843.0 748.8,846.2 752.0,843.0 755.2,846.2 758.5,843.0 761.8,846.2 765.0,843.0 768.2,846.2 771.5,843.0 774.8,846.2 778.0,843.0 781.2,846.2 784.5,843.0 787.8,846.2 791.0,843.0 794.2,846.2 797.5,843.0 800.8,846.2 804.0,843.0 807.2,846.2 810.5,843.0 813.8,846.2 817.0,843.0 820.2,846.2 823.5,843.0 826.8,846.2 830.0,843.0 833.2,846.2 836.5,843.0 839.8,846.2 843.0,843.0 846.2,846.2 849.5,843.0 852.8,846.2 856.0,843.0 859.2,846.2 862.5,843.0 865.8,846.2 869.0,843.0 872.2,846.2 875.5,843.0 878.8,846.2 882.0,843.0 885.2,846.2 888.5,843.0 891.8,846.2 895.0,843.0 898.2,846.2 901.5,843.0 904.8,846.2 908.0,843.0 911.2,846.2 914.5,843.0 917.8,846.2 921.0,843.0 924.2,846.2 927.5,843.0 930.8,846.2 934.0,843.0 937.2,846.2 940.5,843.0 943.8,846.2 947.0,843.0 950.2,846.2 953.5,843.0 956.8,846.2 960.0,843.0 963.2,846.2 966.5,843.0 969.8,846.2 973.0,843.0 976.2,846.2 979.5,843.0 982.8,846.2 986.0,843.0 989.2,846.2 992.5,843.0 995.8,846.2 999.0,843.0 1002.2,846.2 1005.5,843.0 1008.8,846.2 1012.0,843.0 1015.2,846.2 1018.5,843.0 1021.8,846.2 1025.0,843.0 1028.2,846.2 1031.5,843.0 1034.8,846.2 1038.0,843.0 1041.2,846.2 1044.5,843.0 1047.8,846.2 1051.0,843.0 1054.2,846.2 1057.5,843.0 1060.8,846.2 1064.0,843.0 1067.2,846.2 1070.5,843.0 1073.8,846.2 1077.0,843.0 1080.2,846.2 1083.5,843.0 1086.8,846.2 1090.0,843.0 1093.2,846.2 1096.5,843.0 1099.8,846.2 1103.0,843.0 1106.2,846.2 1109.5,843.0 1112.8,846.2 1116.0,843.0 1119.2,846.2 1122.5,843.0 1125.8,846.2 1129.0,843.0 1132.2,846.2 1135.5,843.0 1138.8,846.2 1142.0,843.0 1145.2,846.2 1148.5,843.0 1151.8,846.2 1155.0,843.0 1158.2,846.2 1161.5,843.0 1164.8,846.2 1168.0,843.0 1171.2,846.2 1174.5,843.0 1177.8,846.2 1181.0,843.0 1184.2,846.2 1187.5,843.0 1190.8,846.2 1194.0,843.0 1197.2,846.2 1200.5,843.0 1203.8,846.2 1207.0,843.0 1210.2,846.2 1213.5,843.0 1216.8,846.2 1220.0,843.0 1223.2,846.2 1226.5,843.0 1229.8,846.2 1233.0,843.0 1236.2,846.2 1239.5,843.0 1242.8,846.2 1246.0,843.0 1249.2,846.2 1252.5,843.0 1255.8,846.2 1259.0,843.0 1262.2,846.2 1265.5,843.0 1268.8,846.2 1272.0,843.0 1275.2,846.2 1278.5,843.0 1281.8,846.2 1285.0,843.0 1288.2,846.2 1291.5,843.0 1294.8,846.2"/><polyline points="230.0,904.9 233.2,908.1 236.5,904.9 239.8,908.1 243.0,904.9 246.2,908.1 249.5,904.9 252.8,908.1 256.0,904.9 259.2,908.1 262.5,904.9 265.8,908.1 269.0,904.9 272.2,908.1 275.5,904.9 278.8,908.1 282.0,904.9 285.2,908.1 288.5,904.9 291.8,908.1 295.0,904.9 298.2,908.1 301.5,904.9 304.8,908.1 308.0,904.9 311.2,908.1 314.5,904.9 317.8,908.1 321.0,904.9 324.2,908.1 327.5,904.9 330.8,908.1 334.0,904.9 337.2,908.1 340.5,904.9 343.8,908.1 347.0,904.9 350.2,908.1 353.5,904.9 356.8,908.1 360.0,904.9 363.2,908.1 366.5,904.9 369.8,908.1 373.0,904.9 376.2,908.1 379.5,904.9 382.8,908.1 386.0,904.9 389.2,908.1 392.5,904.9 395.8,908.1 399.0,904.9 402.2,908.1 405.5,904.9 408.8,908.1 412.0,904.9 415.2,908.1 418.5,904.9 421.8,908.1 425.0,904.9 428.2,908.1 431.5,904.9 434.8,908.1 438.0,904.9 441.2,908.1 444.5,904.9 447.8,908.1 451.0,904.9 454.2,908.1 457.5,904.9 460.8,908.1 464.0,904.9 467.2,908.1 470.5,904.9 473.8,908.1 477.0,904.9 480.2,908.1 483.5,904.9 486.8,908.1 490.0,904.9 493.2,908.1 496.5,904.9 499.8,908.1 503.0,904.9 506.2,908.1 509.5,904.9 512.8,908.1 516.0,904.9 519.2,908.1 522.5,904.9 525.8,908.1 529.0,904.9 532.2,908.1 535.5,904.9 538.8,908.1 542.0,904.9 545.2,908.1 548.5,904.9 551.8,908.1 555.0,904.9 558.2,908.1 561.5,904.9 564.8,908.1 568.0,904.9 571.2,908.1 574.5,904.9 577.8,908.1 581.0,904.9 584.2,908.1 587.5,904.9 590.8,908.1 594.0,904.9 597.2,908.1 600.5,904.9 603.8,908.1 607.0,904.9 610.2,908.1 613.5,904.9 616.8,908.1 620.0,904.9 623.2,908.1 626.5,904.9 629.8,908.1 633.0,904.9 636.2,908.1 639.5,904.9 642.8,908.1 646.0,904.9 649.2,908.1 652.5,904.9 655.8,908.1 659.0,904.9 662.2,908.1 665.5,904.9 668.8,908.1 672.0,904.9 675.2,908.1 678.5,904.9 681.8,908.1 685.0,904.9 688.2,908.1 691.5,904.9 694.8,908.1 698.0,904.9 701.2,908.1 704.5,904.9 707.8,908.1 711.0,904.9 714.2,908.1 717.5,904.9 720.8,908.1 724.0,904.9 727.2,908.1 730.5,904.9 733.8,908.1 737.0,904.9 740.2,908.1 743.5,904.9 746.8,908.1 750.0,904.9 753.2,908.1 756.5,904.9 759.8,908.1 763.0,904.9 766.2,908.1 769.5,904.9 772.8,908.1 776.0,904.9 779.2,908.1 782.5,904.9 785.8,908.1 789.0,904.9 792.2,908.1 795.5,904.9 798.8,908.1 802.0,904.9 805.2,908.1 808.5,904.9 811.8,908.1 815.0,904.9 818.2,908.1 821.5,904.9 824.8,908.1 828.0,904.9 831.2,908.1 834.5,904.9 837.8,908.1 841.0,904.9 844.2,908.1 847.5,904.9 850.8,908.1 854.0,904.9 857.2,908.1 860.5,904.9 863.8,908.1 867.0,904.9 870.2,908.1 873.5,904.9 876.8,908.1 880.0,904.9 883.2,908.1 886.5,904.9 889.8,908.1"/><polyline points="625.7,1030.9 629.0,1034.1 632.2,1030.9 635.5,1034.1 638.7,1030.9 642.0,1034.1 645.2,1030.9 648.5,1034.1 651.7,1030.9 655.0,1034.1 658.2,1030.9 661.5,1034.1 664.7,1030.9 668.0,1034.1 671.2,1030.9 674.5,1034.1 677.7,1030.9 681.0,1034.1 684.2,1030.9 687.5,1034.1 690.7,1030.9 694.0,1034.1 697.2,1030.9 700.5,1034.1 703.7,1030.9 707.0,1034.1 710.2,1030.9 713.5,1034.1 716.7,1030.9 720.0,1034.1 723.2,1030.9 726.5,1034.1 729.7,1030.9 733.0,1034.1 736.2,1030.9 739.5,1034.1 742.7,1030.9 746.0,1034.1 749.2,1030.9 752.5,1034.1 755.7,1030.9 759.0,1034.1 762.2,1030.9 765.5,1034.1 768.7,1030.9 772.0,1034.1 775.2,1030.9 778.5,1034.1 781.7,1030.9 785.0,1034.1 788.2,1030.9 791.5,1034.1 794.7,1030.9 798.0,1034.1 801.2,1030.9 804.5,1034.1 807.7,1030.9 811.0,1034.1 814.2,1030.9 817.5,1034.1 820.7,1030.9 824.0,1034.1 827.2,1030.9 830.5,1034.1 833.7,1030.9 837.0,1034.1 840.2,1030.9 843.5,1034.1 846.7,1030.9 850.0,1034.1 853.2,1030.9 856.5,1034.1 859.7,1030.9 863.0,1034.1 866.2,1030.9 869.5,1034.1 872.7,1030.9 876.0,1034.1 879.2,1030.9 882.5,1034.1 885.7,1030.9 889.0,1034.1 892.2,1030.9 895.5,1034.1 898.7,1030.9 902.0,1034.1 905.2,1030.9 908.5,1034.1 911.7,1030.9 915.0,1034.1 918.2,1030.9 921.5,1034.1 924.7,1030.9 928.0,1034.1 931.2,1030.9 934.5,1034.1 937.7,1030.9 941.0,1034.1 944.2,1030.9 947.5,1034.1 950.7,1030.9 954.0,1034.1 957.2,1030.9 960.5,1034.1 963.7,1030.9 967.0,1034.1 970.2,1030.9 973.5,1034.1 976.7,1030.9 980.0,1034.1 983.2,1030.9 986.5,1034.1 989.7,1030.9 993.0,1034.1 996.2,1030.9 999.5,1034.1 1002.7,1030.9 1006.0,1034.1 1009.2,1030.9 1012.5,1034.1 1015.7,1030.9 1019.0,1034.1 1022.2,1030.9 1025.5,1034.1 1028.7,1030.9 1032.0,1034.1 1035.2,1030.9 1038.5,1034.1 1041.7,1030.9 1045.0,1034.1 1048.2,1030.9 1051.5,1034.1 1054.7,1030.9 1058.0,1034.1 1061.2,1030.9 1064.5,1034.1 1067.7,1030.9 1071.0,1034.1 1074.2,1030.9 1077.5,1034.1 1080.7,1030.9 1084.0,1034.1 1087.2,1030.9 1090.5,1034.1 1093.7,1030.9 1097.0,1034.1 1100.2,1030.9 1103.5,1034.1 1106.7,1030.9 1110.0,1034.1 1113.2,1030.9 1116.5,1034.1 1119.7,1030.9 1123.0,1034.1 1126.2,1030.9 1129.5,1034.1 1132.7,1030.9 1136.0,1034.1 1139.2,1030.9 1142.5,1034.1 1145.7,1030.9 1149.0,1034.1 1152.2,1030.9 1155.5,1034.1 1158.7,1030.9 1162.0,1034.1 1165.2,1030.9 1168.5,1034.1 1171.7,1030.9 1175.0,1034.1 1178.2,1030.9 1181.5,1034.1 1184.7,1030.9 1188.0,1034.1 1191.2,1030.9 1194.5,1034.1 1197.7,1030.9 1201.0,1034.1 1204.2,1030.9 1207.5,1034.1 1210.7,1030.9 1214.0,1034.1 1217.2,1030.9 1220.5,1034.1 1223.7,1030.9 1227.0,1034.1 1230.2,1030.9 1233.5,1034.1 1236.7,1030.9 1240.0,1034.1 1243.2,1030.9 1246.5,1034.1 1249.7,1030.9 1253.0,1034.1 1256.2,1030.9 1259.5,1034.1 1262.7,1030.9 1266.0,1034.1 1269.2,1030.9 1272.5,1034.1 1275.7,1030.9 1279.0,1034.1 1282.2,1030.9 1285.5,1034.1 1288.7,1030.9 1292.0,1034.1"/><polyline points="1393.0,904.9 1396.2,908.1 1399.5,904.9 1402.8,908.1 1406.0,904.9 1409.2,908.1 1412.5,904.9 1415.8,908.1 1419.0,904.9 1422.2,908.1 1425.5,904.9 1428.8,908.1 1432.0,904.9 1435.2,908.1 1438.5,904.9 1441.8,908.1 1445.0,904.9 1448.2,908.1 1451.5,904.9 1454.8,908.1 1458.0,904.9 1461.2,908.1 1464.5,904.9 1467.8,908.1 1471.0,904.9 1474.2,908.1 1477.5,904.9 1480.8,908.1 1484.0,904.9 1487.2,908.1"/><polyline points="1393.0,948.4 1396.2,951.6 1399.5,948.4 1402.8,951.6 1406.0,948.4 1409.2,951.6 1412.5,948.4 1415.8,951.6 1419.0,948.4 1422.2,951.6 1425.5,948.4 1428.8,951.6 1432.0,948.4 1435.2,951.6 1438.5,948.4 1441.8,951.6 1445.0,948.4 1448.2,951.6 1451.5,948.4 1454.8,951.6 1458.0,948.4 1461.2,951.6 1464.5,948.4 1467.8,951.6 1471.0,948.4 1474.2,951.6 1477.5,948.4 1480.8,951.6 1484.0,948.4 1487.2,951.6 1490.5,948.4 1493.8,951.6 1497.0,948.4 1500.2,951.6 1503.5,948.4 1506.8,951.6 1510.0,948.4 1513.2,951.6 1516.5,948.4 1519.8,951.6 1523.0,948.4 1526.2,951.6 1529.5,948.4 1532.8,951.6 1536.0,948.4 1539.2,951.6 1542.5,948.4 1545.8,951.6 1549.0,948.4 1552.2,951.6 1555.5,948.4 1558.8,951.6 1562.0,948.4 1565.2,951.6 1568.5,948.4 1571.8,951.6 1575.0,948.4 1578.2,951.6 1581.5,948.4 1584.8,951.6 1588.0,948.4 1591.2,951.6 1594.5,948.4 1597.8,951.6 1601.0,948.4 1604.2,951.6 1607.5,948.4 1610.8,951.6 1614.0,948.4 1617.2,951.6 1620.5,948.4 1623.8,951.6 1627.0,948.4 1630.2,951.6 1633.5,948.4 1636.8,951.6 1640.0,948.4 1643.2,951.6 1646.5,948.4 1649.8,951.6 1653.0,948.4 1656.2,951.6 1659.5,948.4 1662.8,951.6 1666.0,948.4 1669.2,951.6 1672.5,948.4 1675.8,951.6 1679.0,948.4 1682.2,951.6 1685.5,948.4 1688.8,951.6 1692.0,948.4 1695.2,951.6 1698.5,948.4 1701.8,951.6 1705.0,948.4 1708.2,951.6 1711.5,948.4 1714.8,951.6 1718.0,948.4 1721.2,951.6 1724.5,948.4 1727.8,951.6 1731.0,948.4 1734.2,951.6 1737.5,948.4 1740.8,951.6 1744.0,948.4 1747.2,951.6 1750.5,948.4 1753.8,951.6 1757.0,948.4 1760.2,951.6 1763.5,948.4 1766.8,951.6 1770.0,948.4 1773.2,951.6 1776.5,948.4 1779.8,951.6 1783.0,948.4 1786.2,951.6 1789.5,948.4 1792.8,951.6 1796.0,948.4 1799.2,951.6"/></g></svg>
  <div style="left:1341px;top:842px;width:4px;height:146px;background:#3b87b5"></div>
  <div class="t" style="left:1391px;top:869px;font-size:38.5px;font-weight:bold;color:#4b1352;letter-spacing:-.9px">Ірина Кононенко</div>
  <div class="t" style="left:1391px;top:910px;font-size:38.5px;font-weight:bold;color:#4b1352;letter-spacing:-.9px">Варшавський університет</div>
</div>
<!-- bottom band under slide view -->
<div style="left:392px;top:1495px;width:2168px;height:9px;background:linear-gradient(#fafafc,#ececf0);border-top:1px solid #b4b6bb"></div>
<!-- right scrollbar -->
<div style="left:2500px;top:436px;width:60px;height:1059px;background:linear-gradient(90deg,#cbccd1,#d8d9de 40%,#e4e5e9 55%,#e8e9ed 80%,#e2e3e7)"></div>
<div style="left:2530px;top:442px;width:27px;height:31px;border:1px solid #aeb0b5;border-radius:2px;background:linear-gradient(90deg,#f3f4f6,#fcfcfd 50%,#eceef1)"></div>
<svg style="left:2535px;top:452px" width="16" height="9" viewBox="0 0 16 9"><path d="M0 9h16L8 0z" fill="#3f3f44"/></svg>
<div style="left:2530px;top:479px;width:27px;height:54px;border:1px solid #aeb0b5;border-radius:2px;background:linear-gradient(90deg,#eceef1,#fafafb 50%,#e3e5e9)"></div>
<svg style="left:2536px;top:500px" width="15" height="13" viewBox="0 0 15 13"><path d="M1 2h13M1 6h13M1 10h13" stroke="#7b7d83" stroke-width="1.4"/></svg>
<div style="left:2530px;top:1372px;width:27px;height:29px;border:1px solid #aeb0b5;border-radius:2px;background:linear-gradient(90deg,#f3f4f6,#fcfcfd 50%,#eceef1)"></div>
<svg style="left:2534px;top:1382px" width="16" height="9" viewBox="0 0 16 9"><path d="M0 0h16L8 9z" fill="#3f3f44"/></svg>
<svg style="left:2537px;top:1411px" width="18" height="50" viewBox="0 0 18 50">
  <path d="M1 9h16L9 1z M1 18h16L9 10z" fill="#1f1f22"/>
  <path d="M1 31h16L9 39z M1 40h16L9 48z" fill="#1f1f22"/>
</svg>

<!-- status bar -->
<div style="left:0;top:1504px;width:2560px;height:42px;background:linear-gradient(#a0a2a8 0px,#a0a2a8 3px,#eceef2 3px,#e3e4e8 14px,#dcdde2 28px,#cfd0d5 42px)"></div>
<div class="t" style="left:15px;top:1517px;font-size:21px;color:#3f3f3f;letter-spacing:-.3px">Slajd 1 z 15</div>
<div style="left:139px;top:1508px;width:2px;height:36px;background:#8a8c92;border-right:1px solid #f2f3f5"></div>
<div class="t" style="left:156px;top:1517px;font-size:21px;color:#3f3f3f;letter-spacing:.3px">„Integralny”</div>
<div style="left:287px;top:1508px;width:2px;height:36px;background:#8a8c92;border-right:1px solid #f2f3f5"></div>
<div class="t" style="left:306px;top:1517px;font-size:21px;color:#3f3f3f">Polski</div>
<div style="left:379px;top:1508px;width:2px;height:36px;background:#8a8c92;border-right:1px solid #f2f3f5"></div>
<div style="left:2038px;top:1508px;width:2px;height:36px;background:#8a8c92;border-right:1px solid #f2f3f5"></div>
<div style="left:2047px;top:1510px;width:34px;height:34px;border:1px solid #e3b96a;border-radius:3px;background:linear-gradient(#fbe7b4,#f5d68f)"></div>
<svg style="left:2053px;top:1517px" width="22" height="20" viewBox="0 0 22 20"><rect x="1" y="1" width="20" height="18" fill="#fff" stroke="#3c3c6a" stroke-width="2"/><rect x="2" y="2" width="8" height="16" fill="#fff"/><path d="M10 1v18" stroke="#3c3c6a" stroke-width="2"/><rect x="12" y="4" width="7" height="5" fill="#7d7db0"/><rect x="12" y="11" width="7" height="5" fill="#7d7db0"/></svg>
<svg style="left:2089px;top:1517px" width="22" height="20" viewBox="0 0 22 20"><rect x="1" y="1" width="8" height="7" fill="none" stroke="#6c6c6c" stroke-width="1.8"/><rect x="13" y="1" width="8" height="7" fill="none" stroke="#6c6c6c" stroke-width="1.8"/><rect x="1" y="12" width="8" height="7" fill="none" stroke="#6c6c6c" stroke-width="1.8"/><rect x="13" y="12" width="8" height="7" fill="none" stroke="#6c6c6c" stroke-width="1.8"/></svg>
<svg style="left:2123px;top:1516px" width="22" height="22" viewBox="0 0 22 22"><path d="M1 3c4-2 7-2 10 1 3-3 6-3 10-1v15c-4-2-7-2-10 1-3-3-6-3-10-1z" fill="none" stroke="#6c6c6c" stroke-width="1.8"/><path d="M11 4v15M4 7h4M4 10h4M14 7h4M14 10h4" stroke="#6c6c6c" stroke-width="1.3"/></svg>
<svg style="left:2158px;top:1516px" width="24" height="22" viewBox="0 0 24 22"><rect x="1" y="1" width="22" height="4" fill="#6c6c6c"/><rect x="3" y="5" width="18" height="9" fill="none" stroke="#6c6c6c" stroke-width="1.8"/><path d="M12 14v6M7 20h10" stroke="#6c6c6c" stroke-width="2"/></svg>
<div class="t" style="left:2204px;top:1517px;font-size:21px;color:#555;letter-spacing:-.4px">81%</div>
<svg style="left:2259px;top:1512px" width="32" height="32" viewBox="0 0 32 32"><circle cx="16" cy="16" r="13" fill="#eeeff2" stroke="#a8aaaf" stroke-width="2"/><path d="M9 16h14" stroke="#666" stroke-width="3"/></svg>

<!-- zoom gallery panel -->
<div style="left:2070px;top:141px;width:423px;height:1180px;background:#232323;border-radius:10px;box-shadow:0 0 0 2px #101011,0 2px 8px 3px rgba(0,0,0,.3);overflow:hidden">
  <!-- slot 1 : active speaker -->
  <div style="left:1px;top:0;width:421px;height:239px;border:4px solid #5dc957;border-radius:10px;background:#1c1c1c"></div>
  <div style="left:5px;top:4px;width:413px;height:231px;border-radius:6px;overflow:hidden;background:#cbb0ad">
    <div style="left:0;top:0;width:413px;height:231px;background:linear-gradient(100deg,#b9a4a6 0%,#d6c0bd 25%,#d3b6b3 60%,#c4a9a6 100%)"></div>
    <svg style="left:0;top:0;filter:blur(2.2px)" width="413" height="231" viewBox="0 0 413 231">
      <path d="M0 0h413v7L0 50z" fill="#dcd9de"/>
      <path d="M0 50L413 7v10L0 60z" fill="#c8b9ba"/>
      <path d="M0 0h30v231H0z" fill="#bdb2b6"/>
      <path d="M2 30h14v201H2z" fill="#e3e1e6"/>
      <path d="M30 62l14-10h100v8H46v171H30z" fill="#a68984"/>
      <path d="M44 60h100v171H44z" fill="#d3b9b5"/>
      <circle cx="318" cy="48" r="16" fill="#e2dccf" stroke="#5e4a3c" stroke-width="5"/>
      <path d="M270 80l125-4 4 74-117 4z" fill="#d6d3d8" stroke="#5c4650" stroke-width="6"/>
      <path d="M290 110h20M320 105h40M300 125h70" stroke="#8b8ea8" stroke-width="5"/>
      <path d="M246 70L234 108 226 150 214 231H335L322 180 300 130z" fill="#394133"/>
      <path d="M250 100l-8 50 14 6 10-40z" fill="#556049" opacity=".6"/>
      <circle cx="252" cy="170" r="5" fill="#b0503a" opacity=".7"/>
      <path d="M80 231c10-28 40-45 70-52h70c40 7 70 22 100 52z" fill="#403e3c"/>
      <path d="M148 180l30 51h22l20-51z" fill="#5b3936"/>
      <ellipse cx="181" cy="128" rx="47" ry="60" fill="#c99b91"/>
      <ellipse cx="181" cy="120" rx="30" ry="38" fill="#d4aaa0" opacity=".6"/>
      <ellipse cx="133" cy="132" rx="8" ry="15" fill="#b88a80"/>
      <ellipse cx="229" cy="130" rx="8" ry="15" fill="#b88a80"/>
      <path d="M134 110c-6-45 16-68 47-68s53 20 48 68c-4-22-10-36-16-38-28 2-52 2-66-2-6 8-10 22-13 40z" fill="#3a2b27"/>
      <path d="M141 104q12-5 25 0M181 104q14-5 28 1" stroke="#7a5650" stroke-width="3.5" fill="none"/>
      <ellipse cx="155" cy="115" rx="8" ry="3.5" fill="#6d5550"/>
      <ellipse cx="194" cy="115" rx="8" ry="3.5" fill="#6d5550"/>
      <path d="M175 110l-5 28h16" stroke="#b5857c" stroke-width="3" fill="none"/>
      <circle cx="170" cy="140" r="2.5" fill="#5a3a36"/><circle cx="182" cy="140" r="2.5" fill="#5a3a36"/>
      <path d="M158 162q19-4 38 0" stroke="#8f5e5a" stroke-width="3.5" fill="none"/>
      <ellipse cx="210" cy="150" rx="14" ry="22" fill="#b88078" opacity=".45"/>
    </svg>
    <div class="lbl" style="left:1px;top:195px;height:35px;width:195px;line-height:35px">Олексій Воробець</div>
  </div>

  <!-- slot 2 : Pracownik -->
  <div class="t" style="left:131px;top:337px;font-size:35px;color:#fff;letter-spacing:-.5px;-webkit-text-stroke:.4px #fff">Pracownik</div>
  <div class="lbl" style="left:6px;top:434px;width:108px;height:34px;line-height:34px">Pracownik</div>

  <!-- slot 3 : natalia -->
  <div style="left:3px;top:472px;width:417px;height:235px;overflow:hidden;background:#c6b6a0">
    <svg style="left:0;top:0;filter:blur(2px)" width="417" height="235" viewBox="0 0 417 235">
      <defs>
        <linearGradient id="cur" x1="0" x2="1">
          <stop offset="0" stop-color="#857a68"/><stop offset=".1" stop-color="#9d917e"/><stop offset=".2" stop-color="#b9ad98"/>
          <stop offset=".32" stop-color="#d6cfc2"/><stop offset=".42" stop-color="#e6e3de"/><stop offset=".55" stop-color="#ebe9e6"/>
          <stop offset=".7" stop-color="#e3dbcf"/><stop offset=".79" stop-color="#cdbfab"/><stop offset=".88" stop-color="#a18f7a"/><stop offset="1" stop-color="#8c7a66"/>
        </linearGradient>
      </defs>
      <rect width="417" height="235" fill="url(#cur)"/>
      <rect x="175" y="0" width="125" height="170" fill="#dfe5ec" opacity=".6"/>
      <path d="M25 0v235M60 0v235M110 0v235M150 0v235M160 0v235M185 0v235M215 0v235M285 0v235M300 0v235M325 0v235M365 0v235" stroke="#f3eee6" stroke-width="4" opacity=".45"/>
      <path d="M40 0v235M85 0v235M128 0v235M195 0v170M222 0v170M255 0v170M345 0v235M385 0v235" stroke="#8a7c6a" stroke-width="3" opacity=".35"/>
      <path d="M140 235c8-50 40-60 90-62 50 2 75 15 83 62z" fill="#4f2428"/>
      <path d="M205 150h50l5 35h-60z" fill="#5a2a2e"/>
      <ellipse cx="228" cy="120" rx="34" ry="45" fill="#9c7466"/>
      <path d="M192 110c-2-40 14-58 38-58s40 20 38 58c-6-20-12-30-38-32-22 2-32 14-38 32z" fill="#4a3026"/>
      <path d="M210 185l15 45M250 185l-22 45" stroke="#e8e2dc" stroke-width="2"/>
    </svg>
    <div class="lbl" style="left:1px;top:198px;width:187px;height:34px;padding-left:31px;line-height:34px">nataliashcherbii</div>
    <svg style="left:8px;top:205px" width="20" height="22" viewBox="0 0 20 22"><rect x="6" y="1" width="9" height="14" rx="4.5" fill="#d9453a"/><path d="M10.5 15v5M6 21h9" stroke="#d9453a" stroke-width="2.2"/><path d="M0.5 21.5L20 1" stroke="#d9453a" stroke-width="2"/></svg>
  </div>

  <!-- slot 4 : Olga -->
  <div style="left:128px;top:740px;width:167px;height:167px;border-radius:15px;background:#7b58bd"></div>
  <div class="t" style="left:183px;top:775px;font-size:99px;color:#fff;transform:scaleX(.79);transform-origin:0 0">O</div>
  <div class="lbl" style="left:7px;top:905px;width:209px;height:33px;padding-left:31px;line-height:33px">Ольга Лазарович</div>
  <svg style="left:14px;top:911px" width="20" height="22" viewBox="0 0 20 22"><rect x="6" y="1" width="9" height="14" rx="4.5" fill="#d9453a"/><path d="M10.5 15v5M6 21h9" stroke="#d9453a" stroke-width="2.2"/><path d="M0.5 21.5L20 1" stroke="#d9453a" stroke-width="2"/></svg>

  <!-- slot 5 : Serhii -->
  <div style="left:128px;top:975px;width:167px;height:168px;border-radius:15px;background:#fcfcfc;overflow:hidden">
    <svg style="left:0;top:0;filter:blur(1px)" width="167" height="168" viewBox="0 0 167 168">
      <path d="M0 140c20-15 40-22 55-26h57c20 5 40 12 55 26v28H0z" fill="#232327"/>
      <path d="M60 114l24 54 24-54z" fill="#c9d2e0"/>
      <path d="M64 115h40l-20 28z" fill="#d8b8a0"/>
      <ellipse cx="86" cy="80" rx="40" ry="52" fill="#d6a890"/>
      <ellipse cx="46" cy="80" rx="6" ry="12" fill="#c8987e"/>
      <ellipse cx="126" cy="80" rx="6" ry="12" fill="#c8987e"/>
      <path d="M46 70c-4-42 18-58 40-58 26 0 44 16 40 58-4-20-12-34-40-36-22 0-34 14-40 36z" fill="#4c3b30"/>
      <path d="M62 68q10-4 20 0M92 68q10-4 20 0" stroke="#8a6452" stroke-width="3" fill="none"/>
      <ellipse cx="72" cy="78" rx="7" ry="3" fill="#6e5a52"/><ellipse cx="102" cy="78" rx="7" ry="3" fill="#6e5a52"/>
      <path d="M87 80l-5 22h12" stroke="#b88470" stroke-width="3" fill="none"/>
      <path d="M74 112q13-3 26 0" stroke="#a06a5a" stroke-width="3" fill="none"/>
      <ellipse cx="62" cy="100" rx="9" ry="15" fill="#c89078" opacity=".25"/><ellipse cx="110" cy="100" rx="9" ry="15" fill="#c89078" opacity=".25"/>
    </svg>
  </div>
  <div class="lbl" style="left:7px;top:1140px;width:164px;height:33px;padding-left:31px;line-height:33px">Serhii Sharyn</div>
  <svg style="left:14px;top:1146px" width="20" height="22" viewBox="0 0 20 22"><rect x="6" y="1" width="9" height="14" rx="4.5" fill="#d9453a"/><path d="M10.5 15v5M6 21h9" stroke="#d9453a" stroke-width="2.2"/><path d="M0.5 21.5L20 1" stroke="#d9453a" stroke-width="2"/></svg>
</div>


<!-- self view mini -->
<div style="left:2270px;top:1347px;width:268px;height:181px;background:#fbfbfc;border-radius:11px;box-shadow:0 0 5px 1px rgba(0,0,0,.25);overflow:hidden">
  <div style="left:6px;top:7px;width:255px;height:166px;overflow:hidden;background:#141519">
    <div style="left:0;top:0;width:2560px;height:1665px;transform:scale(0.0996);transform-origin:0 0">
<!-- zoom top bars -->
<div style="left:0;top:0;width:2560px;height:64px;background:#000"></div>
<div style="left:2527px;top:22px;width:11px;height:11px;border-radius:50%;background:#69d25c"></div>

<!-- ================= POWERPOINT WINDOW ================= -->
<div id="ppt" style="left:0;top:183px;width:2560px;height:1363px;background:#fff"></div>
<!-- title bar -->
<svg style="left:2px;top:187px" width="32" height="32" viewBox="0 0 32 32">
  <defs><linearGradient id="pg" x1="0" y1="0" x2="0" y2="1"><stop offset="0" stop-color="#fbe3d8"/><stop offset="1" stop-color="#f2b9a1"/></linearGradient></defs>
  <rect x="1" y="1.5" width="29" height="28" rx="2" fill="url(#pg)" stroke="#d8502a" stroke-width="2"/>
  <path d="M9 7h8.5c4 0 6.2 2.2 6.2 5.6s-2.3 5.6-6.2 5.6h-3.6v6.5H9z M13.9 10.6v4.2h3.1c1.5 0 2.3-.8 2.3-2.1s-.8-2.1-2.3-2.1z" fill="#c73e1d"/>
</svg>
<div style="left:40px;top:192px;width:1px;height:23px;background:#9b9b9b"></div>
<svg style="left:54px;top:190px" width="28" height="27" viewBox="0 0 28 27">
  <rect x="0.5" y="0.5" width="27" height="26" rx="2" fill="#4a5ab0"/>
  <rect x="0.5" y="0.5" width="14" height="26" fill="#6f6ac4" opacity=".8"/>
  <rect x="5" y="1.5" width="18" height="12" fill="#eceef6"/>
  <path d="M12 1.5h11v12L12 1.5z" fill="#c9cde0"/>
  <rect x="8" y="17" width="12" height="8" fill="#3a3f7a"/>
  <circle cx="13" cy="21" r="2.2" fill="#d8dbe8"/>
</svg>
<svg style="left:96px;top:192px" width="26" height="24" viewBox="0 0 26 24">
  <path d="M5 4v8h8" fill="none" stroke="#a9a9a9" stroke-width="3.2" stroke-linejoin="round"/>
  <path d="M6 11C9 5 15 3 19 6s4 10 0 15" fill="none" stroke="#a9a9a9" stroke-width="3.8" stroke-linecap="round"/>
</svg>
<svg style="left:129px;top:200px" width="11" height="7" viewBox="0 0 11 7"><path d="M0 0h11L5.5 6z" fill="#b7b7b7"/></svg>
<svg style="left:156px;top:192px" width="26" height="25" viewBox="0 0 26 25">
  <path d="M19 5.5A9 9 0 1 0 21 13" fill="none" stroke="#a9a9a9" stroke-width="4"/>
  <path d="M14 1l9 1-2 9z" fill="#a9a9a9"/>
</svg>
<div style="left:196px;top:192px;width:1px;height:23px;background:#9b9b9b"></div>
<svg style="left:204px;top:198px" width="14" height="14" viewBox="0 0 14 14">
  <rect x="1" y="0" width="12" height="2.2" fill="#1f1f1f"/>
  <path d="M1 5h12l-6 7z" fill="#1f1f1f"/>
</svg>
<div class="t" style="left:843px;top:195px;font-size:22.6px;color:#262626;letter-spacing:0.05px">Ірина Кононенко, Польсько-український фразеологічний (1)&nbsp; -&nbsp; Microsoft PowerPoint</div>
<!-- close X -->
<svg style="left:2498px;top:196px" width="28" height="28" viewBox="0 0 28 28"><path d="M4 4L24 24M24 4L4 24" stroke="#2b2b2b" stroke-width="2.3"/></svg>
<!-- ribbon minimize + help -->
<svg style="left:2492px;top:243px" width="18" height="14" viewBox="0 0 18 14"><path d="M2 11L9 4l7 7" fill="none" stroke="#7a7a7a" stroke-width="2.2"/></svg>
<svg style="left:2523px;top:233px" width="31" height="31" viewBox="-1 -1 31 31">
  <defs><radialGradient id="hg" cx=".4" cy=".35" r=".7"><stop offset="0" stop-color="#7ab0ee"/><stop offset="1" stop-color="#2f6cc4"/></radialGradient></defs>
  <circle cx="14.5" cy="14.5" r="15" fill="url(#hg)"/>
  <text x="14.5" y="22" text-anchor="middle" font-family="Liberation Sans" font-weight="bold" font-size="20" fill="#fff">?</text>
</svg>

<!-- tabs -->
<div style="left:0;top:273px;width:2560px;height:1px;background:#c9cbd0"></div>
<div style="left:0;top:230px;width:105px;height:44px;border-radius:5px 5px 0 0;background:linear-gradient(#e3693f,#d4532a 55%,#e07a4f);border:1px solid #c2481f;border-bottom:none"></div>
<div class="t" style="left:35px;top:242px;font-size:21px;color:#fbeee4;letter-spacing:.5px">Plik</div>
<div style="left:113px;top:230px;width:221px;height:45px;background:#fff;border:1px solid #c3c5ca;border-bottom:none;border-radius:4px 4px 0 0"></div>
<div class="tab" style="left:137px;letter-spacing:.55px">Narzędzia główne</div>
<div class="tab" style="left:361px;letter-spacing:.6px">Wstawianie</div>
<div class="tab" style="left:527px;letter-spacing:.7px">Projektowanie</div>
<div class="tab" style="left:717px;letter-spacing:-.3px">Przejścia</div>
<div class="tab" style="left:850px;letter-spacing:.2px">Animacje</div>
<div class="tab" style="left:990px;letter-spacing:.2px">Pokaz slajdów</div>
<div class="tab" style="left:1178px;letter-spacing:-.3px">Recenzja</div>
<div class="tab" style="left:1315px;letter-spacing:1.1px">Widok</div>

<!-- ribbon body -->
<div style="left:0;top:274px;width:2560px;height:160px;background:linear-gradient(#fefefe 0px,#fdfdfd 96px,#f8f7f9 98px,#f8f7f9 118px,#f2f2f5 120px,#f2f2f5 145px,#ececf0 147px,#eaeaee 160px)"></div>
<div class="vs" style="left:304px;top:282px;height:150px"></div>
<div class="vs" style="left:525px;top:282px;height:150px"></div>
<div class="vs" style="left:964px;top:282px;height:150px"></div>
<div class="vs" style="left:1640px;top:282px;height:150px"></div>

<!-- Schowek -->
<svg style="left:20px;top:282px" width="56" height="62" viewBox="0 0 56 62">
  <rect x="3" y="7" width="42" height="48" rx="3" fill="#d9d9db" stroke="#c4c4c6" stroke-width="1.5"/>
  <rect x="14" y="3" width="20" height="9" rx="2" fill="#cfcfd1" stroke="#b9b9bb"/>
  <path d="M22 20h26l7 7v33H22z" fill="#f4f4f5" stroke="#cbcbcd" stroke-width="1.5"/>
  <path d="M27 31h20M27 36h20M27 41h20M27 46h20M27 51h16" stroke="#dcdcde" stroke-width="1.5"/>
</svg>
<div class="rt" style="left:19px;top:353px;color:#8e8e8e;letter-spacing:0.5px">Wklej</div>
<svg style="left:40px;top:382px" width="10" height="6" viewBox="0 0 10 6"><path d="M0 0h10L5 5z" fill="#b9b9b9"/></svg>
<svg style="left:91px;top:283px" width="26" height="30" viewBox="0 0 26 30">
  <path d="M6 1l9 15M20 1l-9 15" stroke="#6f737a" stroke-width="2.6"/>
  <circle cx="7" cy="23" r="5" fill="none" stroke="#3f4eb0" stroke-width="3"/>
  <circle cx="19" cy="23" r="5" fill="none" stroke="#3f4eb0" stroke-width="3"/>
</svg>
<div class="rt" style="left:128px;top:288px;letter-spacing:0.7px">Wytnij</div>
<svg style="left:91px;top:325px" width="30" height="29" viewBox="0 0 30 29">
  <path d="M1 1h12l4 4v15H1z" fill="#fff" stroke="#5a6a9a" stroke-width="1.5"/>
  <path d="M11 8h12l5 5v15H11z" fill="#dfe6f7" stroke="#4a5a9a" stroke-width="1.5"/>
  <path d="M14 15h11M14 19h11M14 23h11M4 7h7M4 11h5" stroke="#4a5ab0" stroke-width="1.5"/>
</svg>
<div class="rt" style="left:128px;top:330px;letter-spacing:0.4px">Kopiuj</div>
<svg style="left:198px;top:334px" width="10" height="6" viewBox="0 0 10 6"><path d="M0 0h10L5 5z" fill="#444"/></svg>
<svg style="left:90px;top:366px" width="32" height="30" viewBox="0 0 32 30">
  <path d="M18 11l8-9 4 3-7 10z" fill="#4a4fa8"/>
  <path d="M3 20c4-6 10-10 16-9l3 4c-2 6-7 12-14 14-3-2-5-5-5-9z" fill="#d9c27a" stroke="#8a7a4a" stroke-width="1.2"/>
  <path d="M6 24l9-8M9 27l8-7" stroke="#a8925a" stroke-width="1.2"/>
</svg>
<div class="rt" style="left:128px;top:371px;letter-spacing:0.7px">Malarz formatów</div>
<div class="gl" style="left:90px;letter-spacing:0.1px">Schowek</div>
<svg style="left:282px;top:413px" width="13" height="13" viewBox="0 0 13 13"><path d="M1 12V1h11" fill="none" stroke="#b8b8b8" stroke-width="1.2"/><path d="M5 5l7 7M12 7v5H7" fill="none" stroke="#9a9a9a" stroke-width="1.4"/></svg>

<!-- Slajdy -->
<svg style="left:320px;top:283px" width="62" height="56" viewBox="0 0 62 56">
  <rect x="9" y="16" width="50" height="37" rx="2" fill="#f4f6fa" stroke="#8c96a8" stroke-width="2"/>
  <rect x="14" y="21" width="40" height="10" fill="#dfe3ea"/>
  <rect x="40" y="21" width="14" height="10" fill="#c5cad4"/>
  <path d="M16 38h36M16 43h36" stroke="#b8c0d0" stroke-width="2"/>
  <path d="M13 2v24M1 14h24M4 5l18 18M22 5L4 23" stroke="#e5d24a" stroke-width="2.5"/>
  <circle cx="13" cy="14" r="4" fill="#f5e98a"/>
</svg>
<div class="rt" style="left:327px;top:353px;letter-spacing:0.1px">Nowy</div>
<div class="rt" style="left:323px;top:376px;letter-spacing:-0.6px">slajd</div>
<svg style="left:373px;top:383px" width="10" height="6" viewBox="0 0 10 6"><path d="M0 0h10L5 5z" fill="#444"/></svg>
<svg style="left:399px;top:285px" width="30" height="27" viewBox="0 0 30 27">
  <rect x="1" y="1" width="28" height="25" rx="2" fill="#eef0f5" stroke="#6a7080" stroke-width="2"/>
  <rect x="5" y="5" width="20" height="4" fill="#7c8496"/>
  <rect x="5" y="12" width="8" height="10" fill="#a4abbc"/>
  <path d="M15 13h10M15 17h10M15 21h10" stroke="#7c8496" stroke-width="1.6"/>
</svg>
<div class="rt" style="left:436px;top:288px;letter-spacing:0px">Układ</div>
<svg style="left:500px;top:293px" width="10" height="6" viewBox="0 0 10 6"><path d="M0 0h10L5 5z" fill="#444"/></svg>
<svg style="left:398px;top:324px" width="32" height="32" viewBox="0 0 32 32">
  <rect x="4" y="9" width="26" height="22" rx="2" fill="#eef0f5" stroke="#6a7080" stroke-width="2"/>
  <rect x="8" y="15" width="8" height="11" fill="#a4abbc"/>
  <path d="M18 16h9M18 20h9M18 24h9" stroke="#7c8496" stroke-width="1.6"/>
  <path d="M2 6c3-5 9-5 12 0" fill="none" stroke="#3a62b8" stroke-width="3"/>
  <path d="M0 3l3 6 5-4z" fill="#3a62b8"/>
</svg>
<div class="rt" style="left:436px;top:330px;letter-spacing:-0.2px">Resetuj</div>
<svg style="left:396px;top:365px" width="34" height="32" viewBox="0 0 34 32">
  <rect x="11" y="8" width="21" height="10" rx="1" fill="#eef0f5" stroke="#7c8496" stroke-width="1.6"/>
  <rect x="11" y="20" width="21" height="11" rx="1" fill="#eef0f5" stroke="#7c8496" stroke-width="1.6"/>
  <path d="M8 2v16M0 10h16M2 4l12 12M14 4L2 16" stroke="#e5d24a" stroke-width="2.2"/>
</svg>
<div class="rt" style="left:436px;top:371px;letter-spacing:-0.8px">Sekcja</div>
<svg style="left:503px;top:382px" width="10" height="6" viewBox="0 0 10 6"><path d="M0 0h10L5 5z" fill="#444"/></svg>
<div class="gl" style="left:388px;letter-spacing:-0.2px">Slajdy</div>

<!-- Czcionka -->
<div style="left:536px;top:294px;width:200px;height:40px;background:#f9f9fa;border:1px solid #e1e2e6"></div>
<div style="left:736px;top:294px;width:75px;height:40px;background:#f9f9fa;border:1px solid #e1e2e6"></div>
<svg style="left:717px;top:310px" width="11" height="7" viewBox="0 0 11 7"><path d="M0 0h11L5.5 6z" fill="#555"/></svg>
<svg style="left:792px;top:310px" width="11" height="7" viewBox="0 0 11 7"><path d="M0 0h11L5.5 6z" fill="#555"/></svg>
<div class="t" style="left:821px;top:300px;font-family:'Liberation Serif';font-size:31px;color:#777">A</div>
<svg style="left:838px;top:296px" width="10" height="6" viewBox="0 0 10 6"><path d="M0 6h10L5 0z" fill="#777"/></svg>
<div class="t" style="left:862px;top:310px;font-family:'Liberation Serif';font-size:22px;color:#777">A</div>
<svg style="left:875px;top:299px" width="9" height="6" viewBox="0 0 9 6"><path d="M0 0h9L4.5 6z" fill="#777"/></svg>
<div class="vs" style="left:904px;top:296px;height:36px"></div>
<svg style="left:918px;top:296px" width="34" height="33" viewBox="0 0 34 33">
  <rect x="1" y="1" width="24" height="17" rx="1" fill="#f3f3f3" stroke="#999" stroke-width="1.4"/>
  <text x="4" y="14" font-family="Liberation Sans" font-size="12" fill="#888">Aa</text>
  <path d="M14 26l12-12 7 6-12 12z" fill="#e8e8e8" stroke="#9a9a9a" stroke-width="1.4"/>
</svg>
<div class="t" style="left:547px;top:355px;font-family:'Liberation Serif';font-weight:bold;font-size:25px;color:#6e6e6e">B</div>
<div class="t" style="left:593px;top:355px;font-family:'Liberation Serif';font-style:italic;font-size:25px;color:#6e6e6e">I</div>
<div class="t" style="left:637px;top:355px;font-family:'Liberation Serif';font-size:24px;color:#6e6e6e;text-decoration:underline">U</div>
<div class="t" style="left:683px;top:354px;font-family:'Liberation Serif';font-weight:bold;font-size:24px;color:#7a7a7a;text-shadow:2px 2px 1px #c8c8c8">S</div>
<div class="t" style="left:720px;top:357px;font-family:'Liberation Serif';font-size:22px;color:#777;text-decoration:line-through;letter-spacing:-1px">abc</div>
<div class="t" style="left:768px;top:350px;font-family:'Liberation Serif';font-size:17px;color:#777;letter-spacing:-1px">AV</div>
<svg style="left:766px;top:369px" width="30" height="12" viewBox="0 0 30 12"><path d="M2 6h26M2 6l5-4M2 6l5 4M28 6l-5-4M28 6l-5 4" stroke="#777" stroke-width="1.6" fill="none"/></svg>
<svg style="left:801px;top:364px" width="8" height="5" viewBox="0 0 8 5"><path d="M0 0h8L4 5z" fill="#aaa"/></svg>
<div class="t" style="left:825px;top:358px;font-family:'Liberation Serif';font-size:24px;color:#6e6e6e;letter-spacing:-1px">Aa</div>
<svg style="left:858px;top:364px" width="8" height="5" viewBox="0 0 8 5"><path d="M0 0h8L4 5z" fill="#aaa"/></svg>
<div class="vs" style="left:884px;top:352px;height:34px"></div>
<div class="t" style="left:905px;top:352px;font-family:'Liberation Serif';font-size:29px;color:#888">A</div>
<svg style="left:941px;top:364px" width="8" height="5" viewBox="0 0 8 5"><path d="M0 0h8L4 5z" fill="#aaa"/></svg>
<div class="gl" style="left:685px;letter-spacing:-0.2px">Czcionka</div>
<svg style="left:941px;top:413px" width="13" height="13" viewBox="0 0 13 13"><path d="M1 12V1h11" fill="none" stroke="#b8b8b8" stroke-width="1.2"/><path d="M5 5l7 7M12 7v5H7" fill="none" stroke="#9a9a9a" stroke-width="1.4"/></svg>

<!-- Akapit -->
<svg style="left:982px;top:300px" width="28" height="26" viewBox="0 0 28 26">
  <circle cx="3" cy="3" r="2.2" fill="#777"/><circle cx="3" cy="12" r="2.2" fill="#777"/><circle cx="3" cy="21" r="2.2" fill="#777"/>
  <path d="M9 3h17M9 12h17M9 21h17" stroke="#666" stroke-width="2"/>
</svg>
<svg style="left:1022px;top:311px" width="8" height="5" viewBox="0 0 8 5"><path d="M0 0h8L4 5z" fill="#aaa"/></svg>
<svg style="left:1044px;top:299px" width="30" height="28" viewBox="0 0 30 28">
  <text x="0" y="9" font-size="9" font-family="Liberation Sans" fill="#888">1</text><text x="0" y="18" font-size="9" font-family="Liberation Sans" fill="#888">2</text><text x="0" y="27" font-size="9" font-family="Liberation Sans" fill="#888">3</text>
  <path d="M10 4h18M10 13h18M10 22h18" stroke="#666" stroke-width="2"/>
</svg>
<svg style="left:1084px;top:311px" width="8" height="5" viewBox="0 0 8 5"><path d="M0 0h8L4 5z" fill="#aaa"/></svg>
<div class="vs" style="left:1108px;top:296px;height:36px"></div>
<svg style="left:1123px;top:298px" width="34" height="30" viewBox="0 0 34 30">
  <path d="M12 4h20M16 10h16M16 16h16M12 22h20" stroke="#666" stroke-width="2.4"/>
  <path d="M2 13h9M2 13l4-4M2 13l4 4" stroke="#999" stroke-width="1.6" fill="none"/>
  <path d="M14 1v28" stroke="#bbb" stroke-width="1" stroke-dasharray="2 2"/>
</svg>
<svg style="left:1165px;top:298px" width="34" height="30" viewBox="0 0 34 30">
  <path d="M12 4h20M16 10h16M16 16h16M12 22h20" stroke="#666" stroke-width="2.4"/>
  <path d="M2 13h9M11 13l-4-4M11 13l-4 4" stroke="#999" stroke-width="1.6" fill="none"/>
  <path d="M14 1v28" stroke="#bbb" stroke-width="1" stroke-dasharray="2 2"/>
</svg>
<div class="vs" style="left:1210px;top:296px;height:36px"></div>
<svg style="left:1226px;top:297px" width="44" height="32" viewBox="0 0 44 32">
  <path d="M6 3v26M6 2l-4 6M6 2l4 6M6 30l-4-6M6 30l4-6" stroke="#999" stroke-width="2" fill="none"/>
  <path d="M14 8h16M14 15h16M14 22h16" stroke="#666" stroke-width="2.4"/>
</svg>
<svg style="left:1262px;top:311px" width="8" height="5" viewBox="0 0 8 5"><path d="M0 0h8L4 5z" fill="#aaa"/></svg>
<svg style="left:982px;top:355px" width="30" height="25" viewBox="0 0 30 25"><path d="M1 2h27M1 8h20M1 14h27M1 20h20" stroke="#666" stroke-width="2.4"/></svg>
<svg style="left:1026px;top:355px" width="30" height="25" viewBox="0 0 30 25"><path d="M1 2h27M5 8h19M1 14h27M5 20h19" stroke="#666" stroke-width="2.4"/></svg>
<svg style="left:1071px;top:355px" width="30" height="25" viewBox="0 0 30 25"><path d="M1 2h27M8 8h20M1 14h27M8 20h20" stroke="#666" stroke-width="2.4"/></svg>
<svg style="left:1114px;top:355px" width="30" height="25" viewBox="0 0 30 25"><path d="M1 2h27M1 8h27M1 14h27M1 20h27" stroke="#666" stroke-width="2.4"/></svg>
<div class="vs" style="left:1157px;top:352px;height:34px"></div>
<svg style="left:1174px;top:355px" width="28" height="25" viewBox="0 0 28 25"><path d="M1 2h11M1 8h11M1 14h11M1 20h11M15 2h11M15 8h11M15 14h11M15 20h11" stroke="#666" stroke-width="2.4"/></svg>
<svg style="left:1208px;top:364px" width="8" height="5" viewBox="0 0 8 5"><path d="M0 0h8L4 5z" fill="#aaa"/></svg>
<svg style="left:1282px;top:283px" width="32" height="31" viewBox="0 0 32 31">
  <path d="M3 3v26M10 3v26M17 14v15M24 14v15" stroke="#777" stroke-width="2"/>
  <path d="M1 26l2 4 2-4M8 26l2 4 2-4M15 26l2 4 2-4M22 26l2 4 2-4" stroke="#777" stroke-width="1.5" fill="none"/>
  <text x="14" y="12" font-size="13" font-family="Liberation Sans" fill="#888">A</text>
</svg>
<div class="rt dis" style="left:1320px;top:288px;letter-spacing:0.2px">Kier. tekstu</div>
<svg style="left:1435px;top:294px" width="10" height="6" viewBox="0 0 10 6"><path d="M0 0h10L5 5z" fill="#c4c4c4"/></svg>
<svg style="left:1282px;top:324px" width="33" height="31" viewBox="0 0 33 31">
  <rect x="1" y="3" width="30" height="25" fill="#eeeeee" stroke="#b5b5b5" stroke-width="1.5"/>
  <path d="M6 9h20M6 13h20M6 17h20M6 21h20" stroke="#c8c8c8" stroke-width="1.5"/>
  <path d="M16 0v6M13 3h6M16 25v6M13 28h6" stroke="#aaa" stroke-width="1.5"/>
</svg>
<div class="rt dis" style="left:1320px;top:330px;letter-spacing:0.5px">Wyrówn. tekst</div>
<svg style="left:1467px;top:336px" width="10" height="6" viewBox="0 0 10 6"><path d="M0 0h10L5 5z" fill="#c4c4c4"/></svg>
<svg style="left:1282px;top:365px" width="33" height="32" viewBox="0 0 33 32">
  <path d="M1 1h22l6 8H7z" fill="#d4d4d4" stroke="#b0b0b0"/>
  <path d="M1 1l6 8v6H1z" fill="#c4c4c4"/>
  <rect x="10" y="14" width="21" height="17" fill="#f3f3f3" stroke="#b5b5b5" stroke-width="1.5"/>
  <path d="M14 19h3M20 19h8M14 23h3M20 23h8M14 27h3M20 27h8" stroke="#b8b8b8" stroke-width="1.5"/>
</svg>
<div class="rt dis" style="left:1320px;top:371px;letter-spacing:0.35px">Konwertuj na grafikę SmartArt</div>
<svg style="left:1617px;top:378px" width="10" height="6" viewBox="0 0 10 6"><path d="M0 0h10L5 5z" fill="#c4c4c4"/></svg>
<div class="gl" style="left:1254px;letter-spacing:0.4px">Akapit</div>
<svg style="left:1618px;top:413px" width="13" height="13" viewBox="0 0 13 13"><path d="M1 12V1h11" fill="none" stroke="#b8b8b8" stroke-width="1.2"/><path d="M5 5l7 7M12 7v5H7" fill="none" stroke="#9a9a9a" stroke-width="1.4"/></svg>

<!-- Rysowanie -->
<div style="left:1653px;top:284px;width:256px;height:111px;background:#fff;border:1px solid #c9cbcf;border-radius:2px"></div>
<div style="left:1881px;top:285px;width:27px;height:109px;background:linear-gradient(90deg,#f7f7f9,#f1f1f4);border-left:1px solid #e2e3e6"></div>
<div style="left:1881px;top:322px;width:27px;height:1px;background:#e2e3e6"></div>
<div style="left:1881px;top:359px;width:27px;height:1px;background:#e2e3e6"></div>
<svg style="left:1889px;top:300px" width="11" height="7" viewBox="0 0 11 7"><path d="M0 7h11L5.5 0z" fill="#d5d5d5"/></svg>
<svg style="left:1889px;top:337px" width="11" height="7" viewBox="0 0 11 7"><path d="M0 0h11L5.5 7z" fill="#666"/></svg>
<svg style="left:1889px;top:370px" width="11" height="14" viewBox="0 0 11 14"><path d="M0 1h11" stroke="#666" stroke-width="2"/><path d="M0 6h11L5.5 13z" fill="#666"/></svg>
<svg style="left:1655px;top:286px" width="226" height="108" viewBox="0 0 226 108" fill="none" stroke="#545b66" stroke-width="1.8">
  <rect x="4" y="4" width="27" height="23" fill="#f2f3f6" stroke-width="2"/>
  <text x="9" y="17" font-size="11" font-weight="bold" font-family="Liberation Sans" fill="#333" stroke="none">A</text>
  <path d="M19 12h9M19 16h9M9 20h19M9 24h19" stroke="#889" stroke-width="1.2"/>
  <path d="M44 4l27 24"/>
  <path d="M81 4l25 22"/><path d="M99 27l8 1-1-8z" fill="#545b66"/>
  <rect x="118" y="6" width="29" height="21" fill="#f1f3f7"/>
  <ellipse cx="168" cy="16" rx="14" ry="11" fill="#eef1f6"/>
  <rect x="192" y="5" width="29" height="22" rx="6" fill="#f1f3f7"/>
  <path d="M18 40l-12 21h24z" fill="#eef1f6"/>
  <path d="M45 41h13v20h13"/>
  <path d="M82 41h14v20h11"/><path d="M106 57l6 4-6 4z" fill="#545b66"/>
  <path d="M119 46h15v-7l12 11-12 11v-7h-15z" fill="#eef1f6"/>
  <path d="M162 40h12v13h7l-13 12-13-12h7z" fill="#eef1f6"/>
  <path d="M197 48c0-6 8-9 12-5 5-2 10 1 10 6 3 2 3 8-2 10h-19c-4-2-5-8-1-11z" fill="#eef1f6"/>
  <path d="M10 78c-4 4 2 6 5 6 4 1-4 6 0 10 4 3 10 0 8 4-2 3-6 0-4-3"/>
  <path d="M44 81c12-2 25 6 27 20"/>
  <path d="M82 99c6-26 12-24 17-10 5 13 10 14 15 11"/>
  <path d="M137 77c-6 0-6 4-6 8s0 6-5 7c5 1 5 3 5 7s0 7 6 7"/>
  <path d="M169 77c6 0 6 4 6 8s0 6 5 7c-5 1-5 3-5 7s0 7-6 7"/>
  <path d="M205 79l4 8 9 1-7 6 3 10-9-6-9 6 3-10-7-6 9-1z" fill="#eef3f8"/>
</svg>
<svg style="left:1932px;top:281px" width="60" height="62" viewBox="0 0 60 62">
  <rect x="15" y="10" width="28" height="37" fill="#efdca0" stroke="#cdb45a" stroke-width="2"/>
  <rect x="2" y="2" width="26" height="26" fill="#cfd0d4" stroke="#6b6e76" stroke-width="2"/>
  <rect x="31" y="32" width="26" height="27" fill="#d9d9dd" stroke="#6b6e76" stroke-width="2"/>
</svg>
<div class="rt" style="left:1920px;top:353px;letter-spacing:-.2px;color:#333">Rozmieść</div>
<svg style="left:1958px;top:382px" width="10" height="6" viewBox="0 0 10 6"><path d="M0 0h10L5 5z" fill="#444"/></svg>
<svg style="left:2024px;top:287px" width="50" height="55" viewBox="0 0 50 55">
  <path d="M10 1h40v40H38l-8 12-2-12H10C5 41 1 37 1 32V10C1 5 5 1 10 1z" fill="#e3e3e5"/>
  <path d="M30 30c6-4 14-3 20 2v10H34z" fill="#c8c8ca"/>
</svg>
<div class="rt dis" style="left:2017px;top:353px;color:#a0a0a0;letter-spacing:.3px">Szybkie</div>
<div class="rt dis" style="left:2023px;top:376px;color:#a0a0a0">style</div>
<div class="gl" style="left:1916px;letter-spacing:-0.1px">Rysowanie</div>

<!-- work area -->
<div style="left:0;top:433px;width:2560px;height:3px;background:#9c9da3"></div>
<div style="left:0;top:436px;width:2560px;height:1070px;background:linear-gradient(#bfc0c5 0px,#cbccd1 12px,#c8c9ce 300px,#c3c4c9 550px,#bdbec3 1060px)"></div>
<!-- left slides panel -->
<div style="left:0;top:441px;width:384px;height:1065px;background:linear-gradient(#cbccd1,#c5c6cb 40%,#bfc0c5);border-right:1px solid #9fa1a7;overflow:hidden">
  <!-- tabs -->
  <div style="left:0;top:0;width:384px;height:39px;background:linear-gradient(#d6d8dc,#c3c5cb);border-bottom:1px solid #a4a6ac"></div>
  <div style="left:0;top:0;width:136px;height:40px;background:linear-gradient(#e2e3e6,#d3d5d9 60%,#c9cbd0)"></div>
  <div style="left:135px;top:0;width:138px;height:40px;background:linear-gradient(#c9cbd1,#bcbfc6);border-left:1px solid #a3a5ab;border-right:1px solid #a3a5ab;border-bottom:1px solid #a3a5ab"></div>
  <div class="t" style="left:39px;top:9px;font-size:21px;color:#3b3b3b">Slajdy</div>
  <div class="t" style="left:160px;top:9px;font-size:21px;color:#3b3b3b;letter-spacing:-.1px">Konspekt</div>
  <svg style="left:357px;top:13px" width="16" height="16" viewBox="0 0 16 16"><path d="M2 2l12 12M14 2L2 14" stroke="#4a4a4f" stroke-width="3" stroke-linecap="round"/></svg>
  <!-- scrollbar -->
  <div style="left:351px;top:40px;width:32px;height:1025px;background:linear-gradient(90deg,#cfd1d6,#e4e5e9 40%,#dcdee2)"></div>
  <svg style="left:359px;top:51px" width="16" height="9" viewBox="0 0 16 9"><path d="M0 9h16L8 0z" fill="#3f3f44"/></svg>
  <div style="left:352px;top:146px;width:28px;height:222px;border:1px solid #a9abb1;border-radius:2px;background:linear-gradient(90deg,#eceef1,#f9f9fb 50%,#e3e5e9)"></div>
  <svg style="left:359px;top:248px" width="15" height="14" viewBox="0 0 15 14"><path d="M1 2h13M1 6h13M1 10h13" stroke="#7b7d83" stroke-width="1.4"/></svg>
  <svg style="left:359px;top:1044px" width="16" height="9" viewBox="0 0 16 9"><path d="M0 0h16L8 9z" fill="#3f3f44"/></svg>
</div>
<div style="left:384px;top:441px;width:7px;height:1065px;background:#eef0f3;border-right:1px solid #a6a8ae"></div>

<!-- thumbnails -->
<div class="num" style="left:20px;top:503px">2</div>
<div class="thumb" style="top:495px">
  <div style="left:21px;top:22px;width:2px;height:23px;background:#3a9bb7"></div>
  <div class="t" style="left:28px;top:21px;font-size:10.5px;font-weight:bold;color:#444;letter-spacing:-.6px;transform:scaleX(.82);transform-origin:0 0">WIELKI &nbsp;POLSKO-UKRAIŃSKI &nbsp; SŁOWNIK</div>
  <div class="t" style="left:28px;top:33px;font-size:10.5px;font-weight:bold;color:#444;letter-spacing:-.6px;transform:scaleX(.82);transform-origin:0 0">FRAZEOLOGICZNY &nbsp; Z INDEKSEM, &nbsp;WARSZAWA &nbsp;2021, &nbsp; TOM 1.</div>
  <div style="left:26px;top:52px;width:148px;height:2px;background:repeating-linear-gradient(90deg,#9c9c9c 0 3px,#dadada 3px 4px,#b4b4b4 4px 7px,#f6f6f6 7px 9px,#c4c4c4 9px 12px,#fff 12px 13px)"></div>
  <div style="left:28px;top:63px;width:182px;height:2px;background:repeating-linear-gradient(90deg,#9c9c9c 0 3px,#dadada 3px 4px,#b4b4b4 4px 7px,#f6f6f6 7px 9px,#c4c4c4 9px 12px,#fff 12px 13px)"></div>
  <div style="left:26px;top:74px;width:158px;height:2px;background:repeating-linear-gradient(90deg,#9c9c9c 0 3px,#dadada 3px 4px,#b4b4b4 4px 7px,#f6f6f6 7px 9px,#c4c4c4 9px 12px,#fff 12px 13px)"></div>
  <div style="left:26px;top:87px;width:170px;height:2px;background:repeating-linear-gradient(90deg,#9c9c9c 0 3px,#dadada 3px 4px,#b4b4b4 4px 7px,#f6f6f6 7px 9px,#c4c4c4 9px 12px,#fff 12px 13px)"></div>
  <div style="left:26px;top:98px;width:165px;height:2px;background:repeating-linear-gradient(90deg,#9c9c9c 0 3px,#dadada 3px 4px,#b4b4b4 4px 7px,#f6f6f6 7px 9px,#c4c4c4 9px 12px,#fff 12px 13px)"></div>
  <div style="left:26px;top:109px;width:182px;height:2px;background:repeating-linear-gradient(90deg,#9c9c9c 0 3px,#dadada 3px 4px,#b4b4b4 4px 7px,#f6f6f6 7px 9px,#c4c4c4 9px 12px,#fff 12px 13px)"></div>
  <div style="left:26px;top:120px;width:175px;height:2px;background:repeating-linear-gradient(90deg,#9c9c9c 0 3px,#dadada 3px 4px,#b4b4b4 4px 7px,#f6f6f6 7px 9px,#c4c4c4 9px 12px,#fff 12px 13px)"></div>
  <div style="left:26px;top:131px;width:190px;height:2px;background:repeating-linear-gradient(90deg,#9c9c9c 0 3px,#dadada 3px 4px,#b4b4b4 4px 7px,#f6f6f6 7px 9px,#c4c4c4 9px 12px,#fff 12px 13px)"></div>
  <div style="left:26px;top:142px;width:172px;height:2px;background:repeating-linear-gradient(90deg,#9c9c9c 0 3px,#dadada 3px 4px,#b4b4b4 4px 7px,#f6f6f6 7px 9px,#c4c4c4 9px 12px,#fff 12px 13px)"></div>
  <div style="left:26px;top:153px;width:190px;height:2px;background:repeating-linear-gradient(90deg,#9c9c9c 0 3px,#dadada 3px 4px,#b4b4b4 4px 7px,#f6f6f6 7px 9px,#c4c4c4 9px 12px,#fff 12px 13px)"></div>
  <div style="left:216px;top:53px;width:71px;height:104px;background:#883a3d"></div>
  <div style="left:216px;top:53px;width:71px;height:104px;background:linear-gradient(135deg,transparent 80%,#b8aca0 80%);"></div>
  <div style="left:218px;top:53px;width:69px;height:104px;background:linear-gradient(225deg,#c0b4a8 12%,transparent 12%)"></div>
  <div style="left:229px;top:68px;width:48px;height:32px;background:#b9b2b0;border-radius:3px"></div>
  <div style="left:233px;top:75px;width:40px;height:2px;background:#9a4a4a"></div>
  <div style="left:233px;top:82px;width:40px;height:2px;background:#8d8d8d"></div>
  <div style="left:233px;top:89px;width:40px;height:2px;background:#8d8d8d"></div>
</div>
<!-- cursor -->
<svg style="left:149px;top:584px" width="22" height="36" viewBox="0 0 22 36">
  <path d="M1 1v27l6-6 5 12 5-2-5-12h8z" fill="#fff" stroke="#222" stroke-width="2" stroke-linejoin="round"/>
</svg>

<div class="num" style="left:20px;top:693px">3</div>
<div class="thumb" style="top:684px">
  <div style="left:21px;top:22px;width:2px;height:23px;background:#3a9bb7"></div>
  <div class="t" style="left:28px;top:18px;font-size:16px;color:#404040;letter-spacing:-.8px">ФРАЗЕОЛОГІЗМ &nbsp; ЯК ОДИНИЦЯ</div>
  <div class="t" style="left:28px;top:31px;font-size:16px;color:#404040;letter-spacing:-.8px">СЛОВНИКА</div>
  <div style="left:41px;top:58px;width:224px;height:2px;background:repeating-linear-gradient(90deg,#9c9c9c 0 3px,#dadada 3px 4px,#b4b4b4 4px 7px,#f6f6f6 7px 9px,#c4c4c4 9px 12px,#fff 12px 13px)"></div>
  <div style="left:30px;top:65px;width:235px;height:2px;background:repeating-linear-gradient(90deg,#9c9c9c 0 3px,#dadada 3px 4px,#b4b4b4 4px 7px,#f6f6f6 7px 9px,#c4c4c4 9px 12px,#fff 12px 13px)"></div>
  <div style="left:30px;top:72px;width:235px;height:2px;background:repeating-linear-gradient(90deg,#9c9c9c 0 3px,#dadada 3px 4px,#b4b4b4 4px 7px,#f6f6f6 7px 9px,#c4c4c4 9px 12px,#fff 12px 13px)"></div>
  <div style="left:30px;top:79px;width:235px;height:2px;background:repeating-linear-gradient(90deg,#9c9c9c 0 3px,#dadada 3px 4px,#b4b4b4 4px 7px,#f6f6f6 7px 9px,#c4c4c4 9px 12px,#fff 12px 13px)"></div>
  <div style="left:30px;top:86px;width:235px;height:2px;background:repeating-linear-gradient(90deg,#9c9c9c 0 3px,#dadada 3px 4px,#b4b4b4 4px 7px,#f6f6f6 7px 9px,#c4c4c4 9px 12px,#fff 12px 13px)"></div>
  <div style="left:30px;top:92px;width:60px;height:2px;background:repeating-linear-gradient(90deg,#9c9c9c 0 3px,#dadada 3px 4px,#b4b4b4 4px 7px,#f6f6f6 7px 9px,#c4c4c4 9px 12px,#fff 12px 13px)"></div>
  <div style="left:30px;top:104px;width:182px;height:2px;background:repeating-linear-gradient(90deg,#9c9c9c 0 3px,#dadada 3px 4px,#b4b4b4 4px 7px,#f6f6f6 7px 9px,#c4c4c4 9px 12px,#fff 12px 13px)"></div>
  <div style="left:30px;top:111px;width:235px;height:2px;background:repeating-linear-gradient(90deg,#9c9c9c 0 3px,#dadada 3px 4px,#b4b4b4 4px 7px,#f6f6f6 7px 9px,#c4c4c4 9px 12px,#fff 12px 13px)"></div>
  <div style="left:30px;top:117px;width:194px;height:2px;background:repeating-linear-gradient(90deg,#9c9c9c 0 3px,#dadada 3px 4px,#b4b4b4 4px 7px,#f6f6f6 7px 9px,#c4c4c4 9px 12px,#fff 12px 13px)"></div>
  <div style="left:30px;top:124px;width:110px;height:2px;background:repeating-linear-gradient(90deg,#9c9c9c 0 3px,#dadada 3px 4px,#b4b4b4 4px 7px,#f6f6f6 7px 9px,#c4c4c4 9px 12px,#fff 12px 13px)"></div>
</div>

<div class="num" style="left:20px;top:882px">4</div>
<div class="thumb" style="top:873px">
  <div style="left:21px;top:22px;width:2px;height:23px;background:#3a9bb7"></div>
  <div class="t" style="left:28px;top:25px;font-size:16px;color:#404040;letter-spacing:-.8px">МАТЕРІАЛ &nbsp; СЛОВНИКА</div>
  <div style="left:41px;top:44px;width:224px;height:2px;background:repeating-linear-gradient(90deg,#9c9c9c 0 3px,#dadada 3px 4px,#b4b4b4 4px 7px,#f6f6f6 7px 9px,#c4c4c4 9px 12px,#fff 12px 13px)"></div>
  <div style="left:30px;top:52px;width:235px;height:2px;background:repeating-linear-gradient(90deg,#9c9c9c 0 3px,#dadada 3px 4px,#b4b4b4 4px 7px,#f6f6f6 7px 9px,#c4c4c4 9px 12px,#fff 12px 13px)"></div>
  <div style="left:30px;top:59px;width:235px;height:2px;background:repeating-linear-gradient(90deg,#9c9c9c 0 3px,#dadada 3px 4px,#b4b4b4 4px 7px,#f6f6f6 7px 9px,#c4c4c4 9px 12px,#fff 12px 13px)"></div>
  <div style="left:30px;top:66px;width:235px;height:2px;background:repeating-linear-gradient(90deg,#9c9c9c 0 3px,#dadada 3px 4px,#b4b4b4 4px 7px,#f6f6f6 7px 9px,#c4c4c4 9px 12px,#fff 12px 13px)"></div>
  <div style="left:30px;top:73px;width:235px;height:2px;background:repeating-linear-gradient(90deg,#9c9c9c 0 3px,#dadada 3px 4px,#b4b4b4 4px 7px,#f6f6f6 7px 9px,#c4c4c4 9px 12px,#fff 12px 13px)"></div>
  <div style="left:30px;top:80px;width:80px;height:2px;background:repeating-linear-gradient(90deg,#9c9c9c 0 3px,#dadada 3px 4px,#b4b4b4 4px 7px,#f6f6f6 7px 9px,#c4c4c4 9px 12px,#fff 12px 13px)"></div>
  <div style="left:41px;top:92px;width:224px;height:2px;background:repeating-linear-gradient(90deg,#9c9c9c 0 3px,#dadada 3px 4px,#b4b4b4 4px 7px,#f6f6f6 7px 9px,#c4c4c4 9px 12px,#fff 12px 13px)"></div>
  <div style="left:30px;top:103px;width:235px;height:2px;background:repeating-linear-gradient(90deg,#9c9c9c 0 3px,#dadada 3px 4px,#b4b4b4 4px 7px,#f6f6f6 7px 9px,#c4c4c4 9px 12px,#fff 12px 13px)"></div>
  <div style="left:30px;top:112px;width:235px;height:2px;background:repeating-linear-gradient(90deg,#9c9c9c 0 3px,#dadada 3px 4px,#b4b4b4 4px 7px,#f6f6f6 7px 9px,#c4c4c4 9px 12px,#fff 12px 13px)"></div>
  <div style="left:30px;top:119px;width:85px;height:2px;background:repeating-linear-gradient(90deg,#9c9c9c 0 3px,#dadada 3px 4px,#b4b4b4 4px 7px,#f6f6f6 7px 9px,#c4c4c4 9px 12px,#fff 12px 13px)"></div>
  <div style="left:41px;top:131px;width:224px;height:2px;background:repeating-linear-gradient(90deg,#9c9c9c 0 3px,#dadada 3px 4px,#b4b4b4 4px 7px,#f6f6f6 7px 9px,#c4c4c4 9px 12px,#fff 12px 13px)"></div>
  <div style="left:30px;top:140px;width:235px;height:2px;background:repeating-linear-gradient(90deg,#9c9c9c 0 3px,#dadada 3px 4px,#b4b4b4 4px 7px,#f6f6f6 7px 9px,#c4c4c4 9px 12px,#fff 12px 13px)"></div>
  <div style="left:30px;top:147px;width:235px;height:2px;background:repeating-linear-gradient(90deg,#9c9c9c 0 3px,#dadada 3px 4px,#b4b4b4 4px 7px,#f6f6f6 7px 9px,#c4c4c4 9px 12px,#fff 12px 13px)"></div>
  <div style="left:30px;top:154px;width:180px;height:2px;background:repeating-linear-gradient(90deg,#9c9c9c 0 3px,#dadada 3px 4px,#b4b4b4 4px 7px,#f6f6f6 7px 9px,#c4c4c4 9px 12px,#fff 12px 13px)"></div>
</div>

<div class="num" style="left:20px;top:1072px">5</div>
<div class="thumb" style="top:1063px">
  <div style="left:21px;top:22px;width:2px;height:23px;background:#3a9bb7"></div>
  <div class="t" style="left:28px;top:17px;font-size:16px;color:#404040;letter-spacing:-.8px">БУДОВА &nbsp;СЛОВНИКОВОЇ</div>
  <div class="t" style="left:28px;top:29px;font-size:16px;color:#404040;letter-spacing:-.8px">СТАТТІ</div>
  <div style="left:43px;top:46px;width:85px;height:2px;background:repeating-linear-gradient(90deg,#9c9c9c 0 3px,#dadada 3px 4px,#b4b4b4 4px 7px,#f6f6f6 7px 9px,#c4c4c4 9px 12px,#fff 12px 13px)"></div>
  <div style="left:43px;top:56px;width:65px;height:2px;background:repeating-linear-gradient(90deg,#9c9c9c 0 3px,#dadada 3px 4px,#b4b4b4 4px 7px,#f6f6f6 7px 9px,#c4c4c4 9px 12px,#fff 12px 13px)"></div>
  <div style="left:43px;top:67px;width:146px;height:2px;background:repeating-linear-gradient(90deg,#9c9c9c 0 3px,#dadada 3px 4px,#b4b4b4 4px 7px,#f6f6f6 7px 9px,#c4c4c4 9px 12px,#fff 12px 13px)"></div>
  <div style="left:43px;top:76px;width:122px;height:2px;background:repeating-linear-gradient(90deg,#9c9c9c 0 3px,#dadada 3px 4px,#b4b4b4 4px 7px,#f6f6f6 7px 9px,#c4c4c4 9px 12px,#fff 12px 13px)"></div>
  <div style="left:43px;top:85px;width:166px;height:2px;background:repeating-linear-gradient(90deg,#9c9c9c 0 3px,#dadada 3px 4px,#b4b4b4 4px 7px,#f6f6f6 7px 9px,#c4c4c4 9px 12px,#fff 12px 13px)"></div>
  <div style="left:43px;top:95px;width:190px;height:2px;background:repeating-linear-gradient(90deg,#9c9c9c 0 3px,#dadada 3px 4px,#b4b4b4 4px 7px,#f6f6f6 7px 9px,#c4c4c4 9px 12px,#fff 12px 13px)"></div>
  <div style="left:32px;top:101px;width:178px;height:2px;background:repeating-linear-gradient(90deg,#9c9c9c 0 3px,#dadada 3px 4px,#b4b4b4 4px 7px,#f6f6f6 7px 9px,#c4c4c4 9px 12px,#fff 12px 13px)"></div>
  <div style="left:32px;top:106px;width:18px;height:2px;background:repeating-linear-gradient(90deg,#9c9c9c 0 3px,#dadada 3px 4px,#b4b4b4 4px 7px,#f6f6f6 7px 9px,#c4c4c4 9px 12px,#fff 12px 13px)"></div>
  <div style="left:32px;top:113px;width:68px;height:2px;background:repeating-linear-gradient(90deg,#9c9c9c 0 3px,#dadada 3px 4px,#b4b4b4 4px 7px,#f6f6f6 7px 9px,#c4c4c4 9px 12px,#fff 12px 13px)"></div>
  <div style="left:32px;top:121px;width:196px;height:2px;background:repeating-linear-gradient(90deg,#9c9c9c 0 3px,#dadada 3px 4px,#b4b4b4 4px 7px,#f6f6f6 7px 9px,#c4c4c4 9px 12px,#fff 12px 13px)"></div>
  <div style="left:32px;top:128px;width:120px;height:2px;background:repeating-linear-gradient(90deg,#9c9c9c 0 3px,#dadada 3px 4px,#b4b4b4 4px 7px,#f6f6f6 7px 9px,#c4c4c4 9px 12px,#fff 12px 13px)"></div>
</div>

<div class="num" style="left:20px;top:1261px">6</div>
<div class="thumb" style="top:1252px">
  <div style="left:21px;top:22px;width:2px;height:23px;background:#3a9bb7"></div>
  <div class="t" style="left:28px;top:17px;font-size:16px;color:#404040;letter-spacing:-.8px">БУДОВА &nbsp;СЛОВНИКОВОЇ</div>
  <div class="t" style="left:28px;top:29px;font-size:16px;color:#404040;letter-spacing:-.8px">СТАТТІ &nbsp;-2</div>
  <div style="left:41px;top:62px;width:196px;height:2px;background:repeating-linear-gradient(90deg,#9c9c9c 0 3px,#dadada 3px 4px,#b4b4b4 4px 7px,#f6f6f6 7px 9px,#c4c4c4 9px 12px,#fff 12px 13px)"></div>
  <div style="left:30px;top:68px;width:170px;height:2px;background:repeating-linear-gradient(90deg,#9c9c9c 0 3px,#dadada 3px 4px,#b4b4b4 4px 7px,#f6f6f6 7px 9px,#c4c4c4 9px 12px,#fff 12px 13px)"></div>
  <div style="left:30px;top:75px;width:5px;height:2px;background:repeating-linear-gradient(90deg,#9c9c9c 0 3px,#dadada 3px 4px,#b4b4b4 4px 7px,#f6f6f6 7px 9px,#c4c4c4 9px 12px,#fff 12px 13px)"></div>
  <div style="left:30px;top:82px;width:22px;height:2px;background:repeating-linear-gradient(90deg,#9c9c9c 0 3px,#dadada 3px 4px,#b4b4b4 4px 7px,#f6f6f6 7px 9px,#c4c4c4 9px 12px,#fff 12px 13px)"></div>
  <div style="left:30px;top:90px;width:110px;height:2px;background:repeating-linear-gradient(90deg,#9c9c9c 0 3px,#dadada 3px 4px,#b4b4b4 4px 7px,#f6f6f6 7px 9px,#c4c4c4 9px 12px,#fff 12px 13px)"></div>
  <div style="left:30px;top:99px;width:33px;height:2px;background:repeating-linear-gradient(90deg,#9c9c9c 0 3px,#dadada 3px 4px,#b4b4b4 4px 7px,#f6f6f6 7px 9px,#c4c4c4 9px 12px,#fff 12px 13px)"></div>
  <div style="left:30px;top:106px;width:40px;height:2px;background:repeating-linear-gradient(90deg,#9c9c9c 0 3px,#dadada 3px 4px,#b4b4b4 4px 7px,#f6f6f6 7px 9px,#c4c4c4 9px 12px,#fff 12px 13px)"></div>
  <div style="left:30px;top:114px;width:128px;height:2px;background:repeating-linear-gradient(90deg,#9c9c9c 0 3px,#dadada 3px 4px,#b4b4b4 4px 7px,#f6f6f6 7px 9px,#c4c4c4 9px 12px,#fff 12px 13px)"></div>
  <div style="left:30px;top:121px;width:38px;height:2px;background:repeating-linear-gradient(90deg,#9c9c9c 0 3px,#dadada 3px 4px,#b4b4b4 4px 7px,#f6f6f6 7px 9px,#c4c4c4 9px 12px,#fff 12px 13px)"></div>
  <div style="left:30px;top:130px;width:48px;height:2px;background:repeating-linear-gradient(90deg,#9c9c9c 0 3px,#dadada 3px 4px,#b4b4b4 4px 7px,#f6f6f6 7px 9px,#c4c4c4 9px 12px,#fff 12px 13px)"></div>
  <div style="left:30px;top:138px;width:122px;height:2px;background:repeating-linear-gradient(90deg,#9c9c9c 0 3px,#dadada 3px 4px,#b4b4b4 4px 7px,#f6f6f6 7px 9px,#c4c4c4 9px 12px,#fff 12px 13px)"></div>
  <div style="left:30px;top:145px;width:52px;height:2px;background:repeating-linear-gradient(90deg,#9c9c9c 0 3px,#dadada 3px 4px,#b4b4b4 4px 7px,#f6f6f6 7px 9px,#c4c4c4 9px 12px,#fff 12px 13px)"></div>
</div>

<div class="num" style="left:20px;top:1451px">7</div>
<div class="thumb" style="top:1442px;height:63px;box-shadow:0 -2px 4px 1px rgba(80,82,90,.45)">
  <div style="left:21px;top:22px;width:2px;height:23px;background:#3a9bb7"></div>
  <div class="t" style="left:28px;top:17px;font-size:16px;color:#404040;letter-spacing:-.8px">СИНОНІМІЯ &nbsp;ТА</div>
  <div class="t" style="left:28px;top:30px;font-size:16px;color:#404040;letter-spacing:-.8px">ВАРІАНТНІСТЬ &nbsp; У СЛОВНИКУ</div>
  <div style="left:41px;top:59px;width:196px;height:2px;background:repeating-linear-gradient(90deg,#9c9c9c 0 3px,#dadada 3px 4px,#b4b4b4 4px 7px,#f6f6f6 7px 9px,#c4c4c4 9px 12px,#fff 12px 13px)"></div>
</div>

<!-- main slide -->
<div style="left:486px;top:452px;width:1951px;height:1043px;background:#fff;box-shadow:0 0 16px 4px rgba(90,92,100,.55);overflow:hidden">
  <svg width="1951" height="731" viewBox="0 0 1951 731" style="position:absolute;left:0;top:0;display:block;overflow:hidden"><rect width="1951" height="731" fill="#3d7eaa"/><path fill="#fdfdfd" fill-rule="evenodd" d="M232.95 -38.65A135.35 135.35 0 0 1 97.60 96.70A135.35 135.35 0 0 1 232.95 -38.65ZM207.49 -13.19A112.8 112.8 0 0 1 123.06 71.24A112.8 112.8 0 0 1 207.49 -13.19ZM503.65 -38.65A135.35 135.35 0 0 1 368.30 96.70A135.35 135.35 0 0 1 503.65 -38.65ZM478.19 -13.19A112.8 112.8 0 0 1 393.76 71.24A112.8 112.8 0 0 1 478.19 -13.19ZM774.35 -38.65A135.35 135.35 0 0 1 639.00 96.70A135.35 135.35 0 0 1 774.35 -38.65ZM748.89 -13.19A112.8 112.8 0 0 1 664.46 71.24A112.8 112.8 0 0 1 748.89 -13.19ZM1045.05 -38.65A135.35 135.35 0 0 1 909.70 96.70A135.35 135.35 0 0 1 1045.05 -38.65ZM1019.59 -13.19A112.8 112.8 0 0 1 935.16 71.24A112.8 112.8 0 0 1 1019.59 -13.19ZM1315.75 -38.65A135.35 135.35 0 0 1 1180.40 96.70A135.35 135.35 0 0 1 1315.75 -38.65ZM1290.29 -13.19A112.8 112.8 0 0 1 1205.86 71.24A112.8 112.8 0 0 1 1290.29 -13.19ZM1586.45 -38.65A135.35 135.35 0 0 1 1451.10 96.70A135.35 135.35 0 0 1 1586.45 -38.65ZM1560.99 -13.19A112.8 112.8 0 0 1 1476.56 71.24A112.8 112.8 0 0 1 1560.99 -13.19ZM1857.15 -38.65A135.35 135.35 0 0 1 1721.80 96.70A135.35 135.35 0 0 1 1857.15 -38.65ZM1831.69 -13.19A112.8 112.8 0 0 1 1747.26 71.24A112.8 112.8 0 0 1 1831.69 -13.19ZM97.60 96.70A135.35 135.35 0 0 1 -37.75 232.05A135.35 135.35 0 0 1 97.60 96.70ZM72.14 122.16A112.8 112.8 0 0 1 -12.29 206.59A112.8 112.8 0 0 1 72.14 122.16ZM97.60 96.70A135.35 135.35 0 0 0 -37.75 -38.65A135.35 135.35 0 0 0 97.60 96.70ZM72.14 71.24A112.8 112.8 0 0 0 -12.29 -13.19A112.8 112.8 0 0 0 72.14 71.24ZM368.30 96.70A135.35 135.35 0 0 1 232.95 232.05A135.35 135.35 0 0 1 368.30 96.70ZM342.84 122.16A112.8 112.8 0 0 1 258.41 206.59A112.8 112.8 0 0 1 342.84 122.16ZM368.30 96.70A135.35 135.35 0 0 0 232.95 -38.65A135.35 135.35 0 0 0 368.30 96.70ZM342.84 71.24A112.8 112.8 0 0 0 258.41 -13.19A112.8 112.8 0 0 0 342.84 71.24ZM639.00 96.70A135.35 135.35 0 0 1 503.65 232.05A135.35 135.35 0 0 1 639.00 96.70ZM613.54 122.16A112.8 112.8 0 0 1 529.11 206.59A112.8 112.8 0 0 1 613.54 122.16ZM639.00 96.70A135.35 135.35 0 0 0 503.65 -38.65A135.35 135.35 0 0 0 639.00 96.70ZM613.54 71.24A112.8 112.8 0 0 0 529.11 -13.19A112.8 112.8 0 0 0 613.54 71.24ZM909.70 96.70A135.35 135.35 0 0 1 774.35 232.05A135.35 135.35 0 0 1 909.70 96.70ZM884.24 122.16A112.8 112.8 0 0 1 799.81 206.59A112.8 112.8 0 0 1 884.24 122.16ZM909.70 96.70A135.35 135.35 0 0 0 774.35 -38.65A135.35 135.35 0 0 0 909.70 96.70ZM884.24 71.24A112.8 112.8 0 0 0 799.81 -13.19A112.8 112.8 0 0 0 884.24 71.24ZM1180.40 96.70A135.35 135.35 0 0 1 1045.05 232.05A135.35 135.35 0 0 1 1180.40 96.70ZM1154.94 122.16A112.8 112.8 0 0 1 1070.51 206.59A112.8 112.8 0 0 1 1154.94 122.16ZM1180.40 96.70A135.35 135.35 0 0 0 1045.05 -38.65A135.35 135.35 0 0 0 1180.40 96.70ZM1154.94 71.24A112.8 112.8 0 0 0 1070.51 -13.19A112.8 112.8 0 0 0 1154.94 71.24ZM1451.10 96.70A135.35 135.35 0 0 1 1315.75 232.05A135.35 135.35 0 0 1 1451.10 96.70ZM1425.64 122.16A112.8 112.8 0 0 1 1341.21 206.59A112.8 112.8 0 0 1 1425.64 122.16ZM1451.10 96.70A135.35 135.35 0 0 0 1315.75 -38.65A135.35 135.35 0 0 0 1451.10 96.70ZM1425.64 71.24A112.8 112.8 0 0 0 1341.21 -13.19A112.8 112.8 0 0 0 1425.64 71.24ZM1721.80 96.70A135.35 135.35 0 0 1 1586.45 232.05A135.35 135.35 0 0 1 1721.80 96.70ZM1696.34 122.16A112.8 112.8 0 0 1 1611.91 206.59A112.8 112.8 0 0 1 1696.34 122.16ZM1721.80 96.70A135.35 135.35 0 0 0 1586.45 -38.65A135.35 135.35 0 0 0 1721.80 96.70ZM1696.34 71.24A112.8 112.8 0 0 0 1611.91 -13.19A112.8 112.8 0 0 0 1696.34 71.24ZM1992.50 96.70A135.35 135.35 0 0 1 1857.15 232.05A135.35 135.35 0 0 1 1992.50 96.70ZM1967.04 122.16A112.8 112.8 0 0 1 1882.61 206.59A112.8 112.8 0 0 1 1967.04 122.16ZM1992.50 96.70A135.35 135.35 0 0 0 1857.15 -38.65A135.35 135.35 0 0 0 1992.50 96.70ZM1967.04 71.24A112.8 112.8 0 0 0 1882.61 -13.19A112.8 112.8 0 0 0 1967.04 71.24ZM232.95 232.05A135.35 135.35 0 0 1 97.60 367.40A135.35 135.35 0 0 1 232.95 232.05ZM207.49 257.51A112.8 112.8 0 0 1 123.06 341.94A112.8 112.8 0 0 1 207.49 257.51ZM232.95 232.05A135.35 135.35 0 0 0 97.60 96.70A135.35 135.35 0 0 0 232.95 232.05ZM207.49 206.59A112.8 112.8 0 0 0 123.06 122.16A112.8 112.8 0 0 0 207.49 206.59ZM503.65 232.05A135.35 135.35 0 0 1 368.30 367.40A135.35 135.35 0 0 1 503.65 232.05ZM478.19 257.51A112.8 112.8 0 0 1 393.76 341.94A112.8 112.8 0 0 1 478.19 257.51ZM503.65 232.05A135.35 135.35 0 0 0 368.30 96.70A135.35 135.35 0 0 0 503.65 232.05ZM478.19 206.59A112.8 112.8 0 0 0 393.76 122.16A112.8 112.8 0 0 0 478.19 206.59ZM774.35 232.05A135.35 135.35 0 0 1 639.00 367.40A135.35 135.35 0 0 1 774.35 232.05ZM748.89 257.51A112.8 112.8 0 0 1 664.46 341.94A112.8 112.8 0 0 1 748.89 257.51ZM774.35 232.05A135.35 135.35 0 0 0 639.00 96.70A135.35 135.35 0 0 0 774.35 232.05ZM748.89 206.59A112.8 112.8 0 0 0 664.46 122.16A112.8 112.8 0 0 0 748.89 206.59ZM1045.05 232.05A135.35 135.35 0 0 1 909.70 367.40A135.35 135.35 0 0 1 1045.05 232.05ZM1019.59 257.51A112.8 112.8 0 0 1 935.16 341.94A112.8 112.8 0 0 1 1019.59 257.51ZM1045.05 232.05A135.35 135.35 0 0 0 909.70 96.70A135.35 135.35 0 0 0 1045.05 232.05ZM1019.59 206.59A112.8 112.8 0 0 0 935.16 122.16A112.8 112.8 0 0 0 1019.59 206.59ZM1315.75 232.05A135.35 135.35 0 0 1 1180.40 367.40A135.35 135.35 0 0 1 1315.75 232.05ZM1290.29 257.51A112.8 112.8 0 0 1 1205.86 341.94A112.8 112.8 0 0 1 1290.29 257.51ZM1315.75 232.05A135.35 135.35 0 0 0 1180.40 96.70A135.35 135.35 0 0 0 1315.75 232.05ZM1290.29 206.59A112.8 112.8 0 0 0 1205.86 122.16A112.8 112.8 0 0 0 1290.29 206.59ZM1586.45 232.05A135.35 135.35 0 0 1 1451.10 367.40A135.35 135.35 0 0 1 1586.45 232.05ZM1560.99 257.51A112.8 112.8 0 0 1 1476.56 341.94A112.8 112.8 0 0 1 1560.99 257.51ZM1586.45 232.05A135.35 135.35 0 0 0 1451.10 96.70A135.35 135.35 0 0 0 1586.45 232.05ZM1560.99 206.59A112.8 112.8 0 0 0 1476.56 122.16A112.8 112.8 0 0 0 1560.99 206.59ZM1857.15 232.05A135.35 135.35 0 0 1 1721.80 367.40A135.35 135.35 0 0 1 1857.15 232.05ZM1831.69 257.51A112.8 112.8 0 0 1 1747.26 341.94A112.8 112.8 0 0 1 1831.69 257.51ZM1857.15 232.05A135.35 135.35 0 0 0 1721.80 96.70A135.35 135.35 0 0 0 1857.15 232.05ZM1831.69 206.59A112.8 112.8 0 0 0 1747.26 122.16A112.8 112.8 0 0 0 1831.69 206.59ZM97.60 367.40A135.35 135.35 0 0 1 -37.75 502.75A135.35 135.35 0 0 1 97.60 367.40ZM72.14 392.86A112.8 112.8 0 0 1 -12.29 477.29A112.8 112.8 0 0 1 72.14 392.86ZM97.60 367.40A135.35 135.35 0 0 0 -37.75 232.05A135.35 135.35 0 0 0 97.60 367.40ZM72.14 341.94A112.8 112.8 0 0 0 -12.29 257.51A112.8 112.8 0 0 0 72.14 341.94ZM368.30 367.40A135.35 135.35 0 0 1 232.95 502.75A135.35 135.35 0 0 1 368.30 367.40ZM342.84 392.86A112.8 112.8 0 0 1 258.41 477.29A112.8 112.8 0 0 1 342.84 392.86ZM368.30 367.40A135.35 135.35 0 0 0 232.95 232.05A135.35 135.35 0 0 0 368.30 367.40ZM342.84 341.94A112.8 112.8 0 0 0 258.41 257.51A112.8 112.8 0 0 0 342.84 341.94ZM639.00 367.40A135.35 135.35 0 0 1 503.65 502.75A135.35 135.35 0 0 1 639.00 367.40ZM613.54 392.86A112.8 112.8 0 0 1 529.11 477.29A112.8 112.8 0 0 1 613.54 392.86ZM639.00 367.40A135.35 135.35 0 0 0 503.65 232.05A135.35 135.35 0 0 0 639.00 367.40ZM613.54 341.94A112.8 112.8 0 0 0 529.11 257.51A112.8 112.8 0 0 0 613.54 341.94ZM909.70 367.40A135.35 135.35 0 0 1 774.35 502.75A135.35 135.35 0 0 1 909.70 367.40ZM884.24 392.86A112.8 112.8 0 0 1 799.81 477.29A112.8 112.8 0 0 1 884.24 392.86ZM909.70 367.40A135.35 135.35 0 0 0 774.35 232.05A135.35 135.35 0 0 0 909.70 367.40ZM884.24 341.94A112.8 112.8 0 0 0 799.81 257.51A112.8 112.8 0 0 0 884.24 341.94ZM1180.40 367.40A135.35 135.35 0 0 1 1045.05 502.75A135.35 135.35 0 0 1 1180.40 367.40ZM1154.94 392.86A112.8 112.8 0 0 1 1070.51 477.29A112.8 112.8 0 0 1 1154.94 392.86ZM1180.40 367.40A135.35 135.35 0 0 0 1045.05 232.05A135.35 135.35 0 0 0 1180.40 367.40ZM1154.94 341.94A112.8 112.8 0 0 0 1070.51 257.51A112.8 112.8 0 0 0 1154.94 341.94ZM1451.10 367.40A135.35 135.35 0 0 1 1315.75 502.75A135.35 135.35 0 0 1 1451.10 367.40ZM1425.64 392.86A112.8 112.8 0 0 1 1341.21 477.29A112.8 112.8 0 0 1 1425.64 392.86ZM1451.10 367.40A135.35 135.35 0 0 0 1315.75 232.05A135.35 135.35 0 0 0 1451.10 367.40ZM1425.64 341.94A112.8 112.8 0 0 0 1341.21 257.51A112.8 112.8 0 0 0 1425.64 341.94ZM1721.80 367.40A135.35 135.35 0 0 1 1586.45 502.75A135.35 135.35 0 0 1 1721.80 367.40ZM1696.34 392.86A112.8 112.8 0 0 1 1611.91 477.29A112.8 112.8 0 0 1 1696.34 392.86ZM1721.80 367.40A135.35 135.35 0 0 0 1586.45 232.05A135.35 135.35 0 0 0 1721.80 367.40ZM1696.34 341.94A112.8 112.8 0 0 0 1611.91 257.51A112.8 112.8 0 0 0 1696.34 341.94ZM1992.50 367.40A135.35 135.35 0 0 1 1857.15 502.75A135.35 135.35 0 0 1 1992.50 367.40ZM1967.04 392.86A112.8 112.8 0 0 1 1882.61 477.29A112.8 112.8 0 0 1 1967.04 392.86ZM1992.50 367.40A135.35 135.35 0 0 0 1857.15 232.05A135.35 135.35 0 0 0 1992.50 367.40ZM1967.04 341.94A112.8 112.8 0 0 0 1882.61 257.51A112.8 112.8 0 0 0 1967.04 341.94ZM232.95 502.75A135.35 135.35 0 0 1 97.60 638.10A135.35 135.35 0 0 1 232.95 502.75ZM207.49 528.21A112.8 112.8 0 0 1 123.06 612.64A112.8 112.8 0 0 1 207.49 528.21ZM232.95 502.75A135.35 135.35 0 0 0 97.60 367.40A135.35 135.35 0 0 0 232.95 502.75ZM207.49 477.29A112.8 112.8 0 0 0 123.06 392.86A112.8 112.8 0 0 0 207.49 477.29ZM503.65 502.75A135.35 135.35 0 0 1 368.30 638.10A135.35 135.35 0 0 1 503.65 502.75ZM478.19 528.21A112.8 112.8 0 0 1 393.76 612.64A112.8 112.8 0 0 1 478.19 528.21ZM503.65 502.75A135.35 135.35 0 0 0 368.30 367.40A135.35 135.35 0 0 0 503.65 502.75ZM478.19 477.29A112.8 112.8 0 0 0 393.76 392.86A112.8 112.8 0 0 0 478.19 477.29ZM774.35 502.75A135.35 135.35 0 0 1 639.00 638.10A135.35 135.35 0 0 1 774.35 502.75ZM748.89 528.21A112.8 112.8 0 0 1 664.46 612.64A112.8 112.8 0 0 1 748.89 528.21ZM774.35 502.75A135.35 135.35 0 0 0 639.00 367.40A135.35 135.35 0 0 0 774.35 502.75ZM748.89 477.29A112.8 112.8 0 0 0 664.46 392.86A112.8 112.8 0 0 0 748.89 477.29ZM1045.05 502.75A135.35 135.35 0 0 1 909.70 638.10A135.35 135.35 0 0 1 1045.05 502.75ZM1019.59 528.21A112.8 112.8 0 0 1 935.16 612.64A112.8 112.8 0 0 1 1019.59 528.21ZM1045.05 502.75A135.35 135.35 0 0 0 909.70 367.40A135.35 135.35 0 0 0 1045.05 502.75ZM1019.59 477.29A112.8 112.8 0 0 0 935.16 392.86A112.8 112.8 0 0 0 1019.59 477.29ZM1315.75 502.75A135.35 135.35 0 0 1 1180.40 638.10A135.35 135.35 0 0 1 1315.75 502.75ZM1290.29 528.21A112.8 112.8 0 0 1 1205.86 612.64A112.8 112.8 0 0 1 1290.29 528.21ZM1315.75 502.75A135.35 135.35 0 0 0 1180.40 367.40A135.35 135.35 0 0 0 1315.75 502.75ZM1290.29 477.29A112.8 112.8 0 0 0 1205.86 392.86A112.8 112.8 0 0 0 1290.29 477.29ZM1586.45 502.75A135.35 135.35 0 0 1 1451.10 638.10A135.35 135.35 0 0 1 1586.45 502.75ZM1560.99 528.21A112.8 112.8 0 0 1 1476.56 612.64A112.8 112.8 0 0 1 1560.99 528.21ZM1586.45 502.75A135.35 135.35 0 0 0 1451.10 367.40A135.35 135.35 0 0 0 1586.45 502.75ZM1560.99 477.29A112.8 112.8 0 0 0 1476.56 392.86A112.8 112.8 0 0 0 1560.99 477.29ZM1857.15 502.75A135.35 135.35 0 0 1 1721.80 638.10A135.35 135.35 0 0 1 1857.15 502.75ZM1831.69 528.21A112.8 112.8 0 0 1 1747.26 612.64A112.8 112.8 0 0 1 1831.69 528.21ZM1857.15 502.75A135.35 135.35 0 0 0 1721.80 367.40A135.35 135.35 0 0 0 1857.15 502.75ZM1831.69 477.29A112.8 112.8 0 0 0 1747.26 392.86A112.8 112.8 0 0 0 1831.69 477.29ZM97.60 638.10A135.35 135.35 0 0 1 -37.75 773.45A135.35 135.35 0 0 1 97.60 638.10ZM72.14 663.56A112.8 112.8 0 0 1 -12.29 747.99A112.8 112.8 0 0 1 72.14 663.56ZM97.60 638.10A135.35 135.35 0 0 0 -37.75 502.75A135.35 135.35 0 0 0 97.60 638.10ZM72.14 612.64A112.8 112.8 0 0 0 -12.29 528.21A112.8 112.8 0 0 0 72.14 612.64ZM368.30 638.10A135.35 135.35 0 0 1 232.95 773.45A135.35 135.35 0 0 1 368.30 638.10ZM342.84 663.56A112.8 112.8 0 0 1 258.41 747.99A112.8 112.8 0 0 1 342.84 663.56ZM368.30 638.10A135.35 135.35 0 0 0 232.95 502.75A135.35 135.35 0 0 0 368.30 638.10ZM342.84 612.64A112.8 112.8 0 0 0 258.41 528.21A112.8 112.8 0 0 0 342.84 612.64ZM639.00 638.10A135.35 135.35 0 0 1 503.65 773.45A135.35 135.35 0 0 1 639.00 638.10ZM613.54 663.56A112.8 112.8 0 0 1 529.11 747.99A112.8 112.8 0 0 1 613.54 663.56ZM639.00 638.10A135.35 135.35 0 0 0 503.65 502.75A135.35 135.35 0 0 0 639.00 638.10ZM613.54 612.64A112.8 112.8 0 0 0 529.11 528.21A112.8 112.8 0 0 0 613.54 612.64ZM909.70 638.10A135.35 135.35 0 0 1 774.35 773.45A135.35 135.35 0 0 1 909.70 638.10ZM884.24 663.56A112.8 112.8 0 0 1 799.81 747.99A112.8 112.8 0 0 1 884.24 663.56ZM909.70 638.10A135.35 135.35 0 0 0 774.35 502.75A135.35 135.35 0 0 0 909.70 638.10ZM884.24 612.64A112.8 112.8 0 0 0 799.81 528.21A112.8 112.8 0 0 0 884.24 612.64ZM1180.40 638.10A135.35 135.35 0 0 1 1045.05 773.45A135.35 135.35 0 0 1 1180.40 638.10ZM1154.94 663.56A112.8 112.8 0 0 1 1070.51 747.99A112.8 112.8 0 0 1 1154.94 663.56ZM1180.40 638.10A135.35 135.35 0 0 0 1045.05 502.75A135.35 135.35 0 0 0 1180.40 638.10ZM1154.94 612.64A112.8 112.8 0 0 0 1070.51 528.21A112.8 112.8 0 0 0 1154.94 612.64ZM1451.10 638.10A135.35 135.35 0 0 1 1315.75 773.45A135.35 135.35 0 0 1 1451.10 638.10ZM1425.64 663.56A112.8 112.8 0 0 1 1341.21 747.99A112.8 112.8 0 0 1 1425.64 663.56ZM1451.10 638.10A135.35 135.35 0 0 0 1315.75 502.75A135.35 135.35 0 0 0 1451.10 638.10ZM1425.64 612.64A112.8 112.8 0 0 0 1341.21 528.21A112.8 112.8 0 0 0 1425.64 612.64ZM1721.80 638.10A135.35 135.35 0 0 1 1586.45 773.45A135.35 135.35 0 0 1 1721.80 638.10ZM1696.34 663.56A112.8 112.8 0 0 1 1611.91 747.99A112.8 112.8 0 0 1 1696.34 663.56ZM1721.80 638.10A135.35 135.35 0 0 0 1586.45 502.75A135.35 135.35 0 0 0 1721.80 638.10ZM1696.34 612.64A112.8 112.8 0 0 0 1611.91 528.21A112.8 112.8 0 0 0 1696.34 612.64ZM1992.50 638.10A135.35 135.35 0 0 1 1857.15 773.45A135.35 135.35 0 0 1 1992.50 638.10ZM1967.04 663.56A112.8 112.8 0 0 1 1882.61 747.99A112.8 112.8 0 0 1 1967.04 663.56ZM1992.50 638.10A135.35 135.35 0 0 0 1857.15 502.75A135.35 135.35 0 0 0 1992.50 638.10ZM1967.04 612.64A112.8 112.8 0 0 0 1882.61 528.21A112.8 112.8 0 0 0 1967.04 612.64ZM232.95 773.45A135.35 135.35 0 0 0 97.60 638.10A135.35 135.35 0 0 0 232.95 773.45ZM207.49 747.99A112.8 112.8 0 0 0 123.06 663.56A112.8 112.8 0 0 0 207.49 747.99ZM503.65 773.45A135.35 135.35 0 0 0 368.30 638.10A135.35 135.35 0 0 0 503.65 773.45ZM478.19 747.99A112.8 112.8 0 0 0 393.76 663.56A112.8 112.8 0 0 0 478.19 747.99ZM774.35 773.45A135.35 135.35 0 0 0 639.00 638.10A135.35 135.35 0 0 0 774.35 773.45ZM748.89 747.99A112.8 112.8 0 0 0 664.46 663.56A112.8 112.8 0 0 0 748.89 747.99ZM1045.05 773.45A135.35 135.35 0 0 0 909.70 638.10A135.35 135.35 0 0 0 1045.05 773.45ZM1019.59 747.99A112.8 112.8 0 0 0 935.16 663.56A112.8 112.8 0 0 0 1019.59 747.99ZM1315.75 773.45A135.35 135.35 0 0 0 1180.40 638.10A135.35 135.35 0 0 0 1315.75 773.45ZM1290.29 747.99A112.8 112.8 0 0 0 1205.86 663.56A112.8 112.8 0 0 0 1290.29 747.99ZM1586.45 773.45A135.35 135.35 0 0 0 1451.10 638.10A135.35 135.35 0 0 0 1586.45 773.45ZM1560.99 747.99A112.8 112.8 0 0 0 1476.56 663.56A112.8 112.8 0 0 0 1560.99 747.99ZM1857.15 773.45A135.35 135.35 0 0 0 1721.80 638.10A135.35 135.35 0 0 0 1857.15 773.45ZM1831.69 747.99A112.8 112.8 0 0 0 1747.26 663.56A112.8 112.8 0 0 0 1831.69 747.99Z"/></svg>
  <div class="t tt" style="top:787.5px;right:660px;letter-spacing:5.1px">ПОЛЬСЬКО-УКРАЇНСЬКИЙ</div>
  <div class="t tt" style="top:849px;right:657px;letter-spacing:5.35px">ФРАЗЕОЛОГІЧНИЙ СЛОВНИК:</div>
  <div class="t tt" style="top:913px;right:664px;letter-spacing:4.78px">СТРУКТУРА, СЕМАНТИКА,</div>
  <div class="t tt" style="top:975px;right:662px;letter-spacing:4.7px">ЕКВІВАЛЕНТНІСТЬ</div>
  <svg style="left:0;top:0" width="1951" height="1043" viewBox="0 0 1951 1043"><g fill="none" stroke="#e4473f" stroke-width="1.7" opacity=".9"><polyline points="368.5,843.0 371.8,846.2 375.0,843.0 378.2,846.2 381.5,843.0 384.8,846.2 388.0,843.0 391.2,846.2 394.5,843.0 397.8,846.2 401.0,843.0 404.2,846.2 407.5,843.0 410.8,846.2 414.0,843.0 417.2,846.2 420.5,843.0 423.8,846.2 427.0,843.0 430.2,846.2 433.5,843.0 436.8,846.2 440.0,843.0 443.2,846.2 446.5,843.0 449.8,846.2 453.0,843.0 456.2,846.2 459.5,843.0 462.8,846.2 466.0,843.0 469.2,846.2 472.5,843.0 475.8,846.2 479.0,843.0 482.2,846.2 485.5,843.0 488.8,846.2 492.0,843.0 495.2,846.2 498.5,843.0 501.8,846.2 505.0,843.0 508.2,846.2 511.5,843.0 514.8,846.2 518.0,843.0 521.2,846.2 524.5,843.0 527.8,846.2 531.0,843.0 534.2,846.2 537.5,843.0 540.8,846.2 544.0,843.0 547.2,846.2 550.5,843.0 553.8,846.2 557.0,843.0 560.2,846.2 563.5,843.0 566.8,846.2 570.0,843.0 573.2,846.2 576.5,843.0 579.8,846.2 583.0,843.0 586.2,846.2 589.5,843.0 592.8,846.2 596.0,843.0 599.2,846.2 602.5,843.0 605.8,846.2 609.0,843.0 612.2,846.2 615.5,843.0 618.8,846.2 622.0,843.0 625.2,846.2 628.5,843.0 631.8,846.2 635.0,843.0 638.2,846.2 641.5,843.0 644.8,846.2 648.0,843.0 651.2,846.2 654.5,843.0 657.8,846.2 661.0,843.0 664.2,846.2 667.5,843.0 670.8,846.2 674.0,843.0 677.2,846.2 680.5,843.0 683.8,846.2 687.0,843.0 690.2,846.2 693.5,843.0 696.8,846.2 700.0,843.0 703.2,846.2 706.5,843.0 709.8,846.2 713.0,843.0 716.2,846.2 719.5,843.0 722.8,846.2 726.0,843.0 729.2,846.2 732.5,843.0 735.8,846.2 739.0,843.0 742.2,846.2 745.5,843.0 748.8,846.2 752.0,843.0 755.2,846.2 758.5,843.0 761.8,846.2 765.0,843.0 768.2,846.2 771.5,843.0 774.8,846.2 778.0,843.0 781.2,846.2 784.5,843.0 787.8,846.2 791.0,843.0 794.2,846.2 797.5,843.0 800.8,846.2 804.0,843.0 807.2,846.2 810.5,843.0 813.8,846.2 817.0,843.0 820.2,846.2 823.5,843.0 826.8,846.2 830.0,843.0 833.2,846.2 836.5,843.0 839.8,846.2 843.0,843.0 846.2,846.2 849.5,843.0 852.8,846.2 856.0,843.0 859.2,846.2 862.5,843.0 865.8,846.2 869.0,843.0 872.2,846.2 875.5,843.0 878.8,846.2 882.0,843.0 885.2,846.2 888.5,843.0 891.8,846.2 895.0,843.0 898.2,846.2 901.5,843.0 904.8,846.2 908.0,843.0 911.2,846.2 914.5,843.0 917.8,846.2 921.0,843.0 924.2,846.2 927.5,843.0 930.8,846.2 934.0,843.0 937.2,846.2 940.5,843.0 943.8,846.2 947.0,843.0 950.2,846.2 953.5,843.0 956.8,846.2 960.0,843.0 963.2,846.2 966.5,843.0 969.8,846.2 973.0,843.0 976.2,846.2 979.5,843.0 982.8,846.2 986.0,843.0 989.2,846.2 992.5,843.0 995.8,846.2 999.0,843.0 1002.2,846.2 1005.5,843.0 1008.8,846.2 1012.0,843.0 1015.2,846.2 1018.5,843.0 1021.8,846.2 1025.0,843.0 1028.2,846.2 1031.5,843.0 1034.8,846.2 1038.0,843.0 1041.2,846.2 1044.5,843.0 1047.8,846.2 1051.0,843.0 1054.2,846.2 1057.5,843.0 1060.8,846.2 1064.0,843.0 1067.2,846.2 1070.5,843.0 1073.8,846.2 1077.0,843.0 1080.2,846.2 1083.5,843.0 1086.8,846.2 1090.0,843.0 1093.2,846.2 1096.5,843.0 1099.8,846.2 1103.0,843.0 1106.2,846.2 1109.5,843.0 1112.8,846.2 1116.0,843.0 1119.2,846.2 1122.5,843.0 1125.8,846.2 1129.0,843.0 1132.2,846.2 1135.5,843.0 1138.8,846.2 1142.0,843.0 1145.2,846.2 1148.5,843.0 1151.8,846.2 1155.0,843.0 1158.2,846.2 1161.5,843.0 1164.8,846.2 1168.0,843.0 1171.2,846.2 1174.5,843.0 1177.8,846.2 1181.0,843.0 1184.2,846.2 1187.5,843.0 1190.8,846.2 1194.0,843.0 1197.2,846.2 1200.5,843.0 1203.8,846.2 1207.0,843.0 1210.2,846.2 1213.5,843.0 1216.8,846.2 1220.0,843.0 1223.2,846.2 1226.5,843.0 1229.8,846.2 1233.0,843.0 1236.2,846.2 1239.5,843.0 1242.8,846.2 1246.0,843.0 1249.2,846.2 1252.5,843.0 1255.8,846.2 1259.0,843.0 1262.2,846.2 1265.5,843.0 1268.8,846.2 1272.0,843.0 1275.2,846.2 1278.5,843.0 1281.8,846.2 1285.0,843.0 1288.2,846.2 1291.5,843.0 1294.8,846.2"/><polyline points="230.0,904.9 233.2,908.1 236.5,904.9 239.8,908.1 243.0,904.9 246.2,908.1 249.5,904.9 252.8,908.1 256.0,904.9 259.2,908.1 262.5,904.9 265.8,908.1 269.0,904.9 272.2,908.1 275.5,904.9 278.8,908.1 282.0,904.9 285.2,908.1 288.5,904.9 291.8,908.1 295.0,904.9 298.2,908.1 301.5,904.9 304.8,908.1 308.0,904.9 311.2,908.1 314.5,904.9 317.8,908.1 321.0,904.9 324.2,908.1 327.5,904.9 330.8,908.1 334.0,904.9 337.2,908.1 340.5,904.9 343.8,908.1 347.0,904.9 350.2,908.1 353.5,904.9 356.8,908.1 360.0,904.9 363.2,908.1 366.5,904.9 369.8,908.1 373.0,904.9 376.2,908.1 379.5,904.9 382.8,908.1 386.0,904.9 389.2,908.1 392.5,904.9 395.8,908.1 399.0,904.9 402.2,908.1 405.5,904.9 408.8,908.1 412.0,904.9 415.2,908.1 418.5,904.9 421.8,908.1 425.0,904.9 428.2,908.1 431.5,904.9 434.8,908.1 438.0,904.9 441.2,908.1 444.5,904.9 447.8,908.1 451.0,904.9 454.2,908.1 457.5,904.9 460.8,908.1 464.0,904.9 467.2,908.1 470.5,904.9 473.8,908.1 477.0,904.9 480.2,908.1 483.5,904.9 486.8,908.1 490.0,904.9 493.2,908.1 496.5,904.9 499.8,908.1 503.0,904.9 506.2,908.1 509.5,904.9 512.8,908.1 516.0,904.9 519.2,908.1 522.5,904.9 525.8,908.1 529.0,904.9 532.2,908.1 535.5,904.9 538.8,908.1 542.0,904.9 545.2,908.1 548.5,904.9 551.8,908.1 555.0,904.9 558.2,908.1 561.5,904.9 564.8,908.1 568.0,904.9 571.2,908.1 574.5,904.9 577.8,908.1 581.0,904.9 584.2,908.1 587.5,904.9 590.8,908.1 594.0,904.9 597.2,908.1 600.5,904.9 603.8,908.1 607.0,904.9 610.2,908.1 613.5,904.9 616.8,908.1 620.0,904.9 623.2,908.1 626.5,904.9 629.8,908.1 633.0,904.9 636.2,908.1 639.5,904.9 642.8,908.1 646.0,904.9 649.2,908.1 652.5,904.9 655.8,908.1 659.0,904.9 662.2,908.1 665.5,904.9 668.8,908.1 672.0,904.9 675.2,908.1 678.5,904.9 681.8,908.1 685.0,904.9 688.2,908.1 691.5,904.9 694.8,908.1 698.0,904.9 701.2,908.1 704.5,904.9 707.8,908.1 711.0,904.9 714.2,908.1 717.5,904.9 720.8,908.1 724.0,904.9 727.2,908.1 730.5,904.9 733.8,908.1 737.0,904.9 740.2,908.1 743.5,904.9 746.8,908.1 750.0,904.9 753.2,908.1 756.5,904.9 759.8,908.1 763.0,904.9 766.2,908.1 769.5,904.9 772.8,908.1 776.0,904.9 779.2,908.1 782.5,904.9 785.8,908.1 789.0,904.9 792.2,908.1 795.5,904.9 798.8,908.1 802.0,904.9 805.2,908.1 808.5,904.9 811.8,908.1 815.0,904.9 818.2,908.1 821.5,904.9 824.8,908.1 828.0,904.9 831.2,908.1 834.5,904.9 837.8,908.1 841.0,904.9 844.2,908.1 847.5,904.9 850.8,908.1 854.0,904.9 857.2,908.1 860.5,904.9 863.8,908.1 867.0,904.9 870.2,908.1 873.5,904.9 876.8,908.1 880.0,904.9 883.2,908.1 886.5,904.9 889.8,908.1"/><polyline points="625.7,1030.9 629.0,1034.1 632.2,1030.9 635.5,1034.1 638.7,1030.9 642.0,1034.1 645.2,1030.9 648.5,1034.1 651.7,1030.9 655.0,1034.1 658.2,1030.9 661.5,1034.1 664.7,1030.9 668.0,1034.1 671.2,1030.9 674.5,1034.1 677.7,1030.9 681.0,1034.1 684.2,1030.9 687.5,1034.1 690.7,1030.9 694.0,1034.1 697.2,1030.9 700.5,1034.1 703.7,1030.9 707.0,1034.1 710.2,1030.9 713.5,1034.1 716.7,1030.9 720.0,1034.1 723.2,1030.9 726.5,1034.1 729.7,1030.9 733.0,1034.1 736.2,1030.9 739.5,1034.1 742.7,1030.9 746.0,1034.1 749.2,1030.9 752.5,1034.1 755.7,1030.9 759.0,1034.1 762.2,1030.9 765.5,1034.1 768.7,1030.9 772.0,1034.1 775.2,1030.9 778.5,1034.1 781.7,1030.9 785.0,1034.1 788.2,1030.9 791.5,1034.1 794.7,1030.9 798.0,1034.1 801.2,1030.9 804.5,1034.1 807.7,1030.9 811.0,1034.1 814.2,1030.9 817.5,1034.1 820.7,1030.9 824.0,1034.1 827.2,1030.9 830.5,1034.1 833.7,1030.9 837.0,1034.1 840.2,1030.9 843.5,1034.1 846.7,1030.9 850.0,1034.1 853.2,1030.9 856.5,1034.1 859.7,1030.9 863.0,1034.1 866.2,1030.9 869.5,1034.1 872.7,1030.9 876.0,1034.1 879.2,1030.9 882.5,1034.1 885.7,1030.9 889.0,1034.1 892.2,1030.9 895.5,1034.1 898.7,1030.9 902.0,1034.1 905.2,1030.9 908.5,1034.1 911.7,1030.9 915.0,1034.1 918.2,1030.9 921.5,1034.1 924.7,1030.9 928.0,1034.1 931.2,1030.9 934.5,1034.1 937.7,1030.9 941.0,1034.1 944.2,1030.9 947.5,1034.1 950.7,1030.9 954.0,1034.1 957.2,1030.9 960.5,1034.1 963.7,1030.9 967.0,1034.1 970.2,1030.9 973.5,1034.1 976.7,1030.9 980.0,1034.1 983.2,1030.9 986.5,1034.1 989.7,1030.9 993.0,1034.1 996.2,1030.9 999.5,1034.1 1002.7,1030.9 1006.0,1034.1 1009.2,1030.9 1012.5,1034.1 1015.7,1030.9 1019.0,1034.1 1022.2,1030.9 1025.5,1034.1 1028.7,1030.9 1032.0,1034.1 1035.2,1030.9 1038.5,1034.1 1041.7,1030.9 1045.0,1034.1 1048.2,1030.9 1051.5,1034.1 1054.7,1030.9 1058.0,1034.1 1061.2,1030.9 1064.5,1034.1 1067.7,1030.9 1071.0,1034.1 1074.2,1030.9 1077.5,1034.1 1080.7,1030.9 1084.0,1034.1 1087.2,1030.9 1090.5,1034.1 1093.7,1030.9 1097.0,1034.1 1100.2,1030.9 1103.5,1034.1 1106.7,1030.9 1110.0,1034.1 1113.2,1030.9 1116.5,1034.1 1119.7,1030.9 1123.0,1034.1 1126.2,1030.9 1129.5,1034.1 1132.7,1030.9 1136.0,1034.1 1139.2,1030.9 1142.5,1034.1 1145.7,1030.9 1149.0,1034.1 1152.2,1030.9 1155.5,1034.1 1158.7,1030.9 1162.0,1034.1 1165.2,1030.9 1168.5,1034.1 1171.7,1030.9 1175.0,1034.1 1178.2,1030.9 1181.5,1034.1 1184.7,1030.9 1188.0,1034.1 1191.2,1030.9 1194.5,1034.1 1197.7,1030.9 1201.0,1034.1 1204.2,1030.9 1207.5,1034.1 1210.7,1030.9 1214.0,1034.1 1217.2,1030.9 1220.5,1034.1 1223.7,1030.9 1227.0,1034.1 1230.2,1030.9 1233.5,1034.1 1236.7,1030.9 1240.0,1034.1 1243.2,1030.9 1246.5,1034.1 1249.7,1030.9 1253.0,1034.1 1256.2,1030.9 1259.5,1034.1 1262.7,1030.9 1266.0,1034.1 1269.2,1030.9 1272.5,1034.1 1275.7,1030.9 1279.0,1034.1 1282.2,1030.9 1285.5,1034.1 1288.7,1030.9 1292.0,1034.1"/><polyline points="1393.0,904.9 1396.2,908.1 1399.5,904.9 1402.8,908.1 1406.0,904.9 1409.2,908.1 1412.5,904.9 1415.8,908.1 1419.0,904.9 1422.2,908.1 1425.5,904.9 1428.8,908.1 1432.0,904.9 1435.2,908.1 1438.5,904.9 1441.8,908.1 1445.0,904.9 1448.2,908.1 1451.5,904.9 1454.8,908.1 1458.0,904.9 1461.2,908.1 1464.5,904.9 1467.8,908.1 1471.0,904.9 1474.2,908.1 1477.5,904.9 1480.8,908.1 1484.0,904.9 1487.2,908.1"/><polyline points="1393.0,948.4 1396.2,951.6 1399.5,948.4 1402.8,951.6 1406.0,948.4 1409.2,951.6 1412.5,948.4 1415.8,951.6 1419.0,948.4 1422.2,951.6 1425.5,948.4 1428.8,951.6 1432.0,948.4 1435.2,951.6 1438.5,948.4 1441.8,951.6 1445.0,948.4 1448.2,951.6 1451.5,948.4 1454.8,951.6 1458.0,948.4 1461.2,951.6 1464.5,948.4 1467.8,951.6 1471.0,948.4 1474.2,951.6 1477.5,948.4 1480.8,951.6 1484.0,948.4 1487.2,951.6 1490.5,948.4 1493.8,951.6 1497.0,948.4 1500.2,951.6 1503.5,948.4 1506.8,951.6 1510.0,948.4 1513.2,951.6 1516.5,948.4 1519.8,951.6 1523.0,948.4 1526.2,951.6 1529.5,948.4 1532.8,951.6 1536.0,948.4 1539.2,951.6 1542.5,948.4 1545.8,951.6 1549.0,948.4 1552.2,951.6 1555.5,948.4 1558.8,951.6 1562.0,948.4 1565.2,951.6 1568.5,948.4 1571.8,951.6 1575.0,948.4 1578.2,951.6 1581.5,948.4 1584.8,951.6 1588.0,948.4 1591.2,951.6 1594.5,948.4 1597.8,951.6 1601.0,948.4 1604.2,951.6 1607.5,948.4 1610.8,951.6 1614.0,948.4 1617.2,951.6 1620.5,948.4 1623.8,951.6 1627.0,948.4 1630.2,951.6 1633.5,948.4 1636.8,951.6 1640.0,948.4 1643.2,951.6 1646.5,948.4 1649.8,951.6 1653.0,948.4 1656.2,951.6 1659.5,948.4 1662.8,951.6 1666.0,948.4 1669.2,951.6 1672.5,948.4 1675.8,951.6 1679.0,948.4 1682.2,951.6 1685.5,948.4 1688.8,951.6 1692.0,948.4 1695.2,951.6 1698.5,948.4 1701.8,951.6 1705.0,948.4 1708.2,951.6 1711.5,948.4 1714.8,951.6 1718.0,948.4 1721.2,951.6 1724.5,948.4 1727.8,951.6 1731.0,948.4 1734.2,951.6 1737.5,948.4 1740.8,951.6 1744.0,948.4 1747.2,951.6 1750.5,948.4 1753.8,951.6 1757.0,948.4 1760.2,951.6 1763.5,948.4 1766.8,951.6 1770.0,948.4 1773.2,951.6 1776.5,948.4 1779.8,951.6 1783.0,948.4 1786.2,951.6 1789.5,948.4 1792.8,951.6 1796.0,948.4 1799.2,951.6"/></g></svg>
  <div style="left:1341px;top:842px;width:4px;height:146px;background:#3b87b5"></div>
  <div class="t" style="left:1391px;top:869px;font-size:38.5px;font-weight:bold;color:#4b1352;letter-spacing:-.9px">Ірина Кононенко</div>
  <div class="t" style="left:1391px;top:910px;font-size:38.5px;font-weight:bold;color:#4b1352;letter-spacing:-.9px">Варшавський університет</div>
</div>
<!-- bottom band under slide view -->
<div style="left:392px;top:1495px;width:2168px;height:9px;background:linear-gradient(#fafafc,#ececf0);border-top:1px solid #b4b6bb"></div>
<!-- right scrollbar -->
<div style="left:2500px;top:436px;width:60px;height:1059px;background:linear-gradient(90deg,#cbccd1,#d8d9de 40%,#e4e5e9 55%,#e8e9ed 80%,#e2e3e7)"></div>
<div style="left:2530px;top:442px;width:27px;height:31px;border:1px solid #aeb0b5;border-radius:2px;background:linear-gradient(90deg,#f3f4f6,#fcfcfd 50%,#eceef1)"></div>
<svg style="left:2535px;top:452px" width="16" height="9" viewBox="0 0 16 9"><path d="M0 9h16L8 0z" fill="#3f3f44"/></svg>
<div style="left:2530px;top:479px;width:27px;height:54px;border:1px solid #aeb0b5;border-radius:2px;background:linear-gradient(90deg,#eceef1,#fafafb 50%,#e3e5e9)"></div>
<svg style="left:2536px;top:500px" width="15" height="13" viewBox="0 0 15 13"><path d="M1 2h13M1 6h13M1 10h13" stroke="#7b7d83" stroke-width="1.4"/></svg>
<div style="left:2530px;top:1372px;width:27px;height:29px;border:1px solid #aeb0b5;border-radius:2px;background:linear-gradient(90deg,#f3f4f6,#fcfcfd 50%,#eceef1)"></div>
<svg style="left:2534px;top:1382px" width="16" height="9" viewBox="0 0 16 9"><path d="M0 0h16L8 9z" fill="#3f3f44"/></svg>
<svg style="left:2537px;top:1411px" width="18" height="50" viewBox="0 0 18 50">
  <path d="M1 9h16L9 1z M1 18h16L9 10z" fill="#1f1f22"/>
  <path d="M1 31h16L9 39z M1 40h16L9 48z" fill="#1f1f22"/>
</svg>

<!-- status bar -->
<div style="left:0;top:1504px;width:2560px;height:42px;background:linear-gradient(#a0a2a8 0px,#a0a2a8 3px,#eceef2 3px,#e3e4e8 14px,#dcdde2 28px,#cfd0d5 42px)"></div>
<div class="t" style="left:15px;top:1517px;font-size:21px;color:#3f3f3f;letter-spacing:-.3px">Slajd 1 z 15</div>
<div style="left:139px;top:1508px;width:2px;height:36px;background:#8a8c92;border-right:1px solid #f2f3f5"></div>
<div class="t" style="left:156px;top:1517px;font-size:21px;color:#3f3f3f;letter-spacing:.3px">„Integralny”</div>
<div style="left:287px;top:1508px;width:2px;height:36px;background:#8a8c92;border-right:1px solid #f2f3f5"></div>
<div class="t" style="left:306px;top:1517px;font-size:21px;color:#3f3f3f">Polski</div>
<div style="left:379px;top:1508px;width:2px;height:36px;background:#8a8c92;border-right:1px solid #f2f3f5"></div>
<div style="left:2038px;top:1508px;width:2px;height:36px;background:#8a8c92;border-right:1px solid #f2f3f5"></div>
<div style="left:2047px;top:1510px;width:34px;height:34px;border:1px solid #e3b96a;border-radius:3px;background:linear-gradient(#fbe7b4,#f5d68f)"></div>
<svg style="left:2053px;top:1517px" width="22" height="20" viewBox="0 0 22 20"><rect x="1" y="1" width="20" height="18" fill="#fff" stroke="#3c3c6a" stroke-width="2"/><rect x="2" y="2" width="8" height="16" fill="#fff"/><path d="M10 1v18" stroke="#3c3c6a" stroke-width="2"/><rect x="12" y="4" width="7" height="5" fill="#7d7db0"/><rect x="12" y="11" width="7" height="5" fill="#7d7db0"/></svg>
<svg style="left:2089px;top:1517px" width="22" height="20" viewBox="0 0 22 20"><rect x="1" y="1" width="8" height="7" fill="none" stroke="#6c6c6c" stroke-width="1.8"/><rect x="13" y="1" width="8" height="7" fill="none" stroke="#6c6c6c" stroke-width="1.8"/><rect x="1" y="12" width="8" height="7" fill="none" stroke="#6c6c6c" stroke-width="1.8"/><rect x="13" y="12" width="8" height="7" fill="none" stroke="#6c6c6c" stroke-width="1.8"/></svg>
<svg style="left:2123px;top:1516px" width="22" height="22" viewBox="0 0 22 22"><path d="M1 3c4-2 7-2 10 1 3-3 6-3 10-1v15c-4-2-7-2-10 1-3-3-6-3-10-1z" fill="none" stroke="#6c6c6c" stroke-width="1.8"/><path d="M11 4v15M4 7h4M4 10h4M14 7h4M14 10h4" stroke="#6c6c6c" stroke-width="1.3"/></svg>
<svg style="left:2158px;top:1516px" width="24" height="22" viewBox="0 0 24 22"><rect x="1" y="1" width="22" height="4" fill="#6c6c6c"/><rect x="3" y="5" width="18" height="9" fill="none" stroke="#6c6c6c" stroke-width="1.8"/><path d="M12 14v6M7 20h10" stroke="#6c6c6c" stroke-width="2"/></svg>
<div class="t" style="left:2204px;top:1517px;font-size:21px;color:#555;letter-spacing:-.4px">81%</div>
<svg style="left:2259px;top:1512px" width="32" height="32" viewBox="0 0 32 32"><circle cx="16" cy="16" r="13" fill="#eeeff2" stroke="#a8aaaf" stroke-width="2"/><path d="M9 16h14" stroke="#666" stroke-width="3"/></svg>

<!-- zoom gallery panel -->
<div style="left:2070px;top:141px;width:423px;height:1180px;background:#232323;border-radius:10px;box-shadow:0 0 0 2px #101011,0 2px 8px 3px rgba(0,0,0,.3);overflow:hidden">
  <!-- slot 1 : active speaker -->
  <div style="left:1px;top:0;width:421px;height:239px;border:4px solid #5dc957;border-radius:10px;background:#1c1c1c"></div>
  <div style="left:5px;top:4px;width:413px;height:231px;border-radius:6px;overflow:hidden;background:#cbb0ad">
    <div style="left:0;top:0;width:413px;height:231px;background:linear-gradient(100deg,#b9a4a6 0%,#d6c0bd 25%,#d3b6b3 60%,#c4a9a6 100%)"></div>
    <svg style="left:0;top:0;filter:blur(2.2px)" width="413" height="231" viewBox="0 0 413 231">
      <path d="M0 0h413v7L0 50z" fill="#dcd9de"/>
      <path d="M0 50L413 7v10L0 60z" fill="#c8b9ba"/>
      <path d="M0 0h30v231H0z" fill="#bdb2b6"/>
      <path d="M2 30h14v201H2z" fill="#e3e1e6"/>
      <path d="M30 62l14-10h100v8H46v171H30z" fill="#a68984"/>
      <path d="M44 60h100v171H44z" fill="#d3b9b5"/>
      <circle cx="318" cy="48" r="16" fill="#e2dccf" stroke="#5e4a3c" stroke-width="5"/>
      <path d="M270 80l125-4 4 74-117 4z" fill="#d6d3d8" stroke="#5c4650" stroke-width="6"/>
      <path d="M290 110h20M320 105h40M300 125h70" stroke="#8b8ea8" stroke-width="5"/>
      <path d="M246 70L234 108 226 150 214 231H335L322 180 300 130z" fill="#394133"/>
      <path d="M250 100l-8 50 14 6 10-40z" fill="#556049" opacity=".6"/>
      <circle cx="252" cy="170" r="5" fill="#b0503a" opacity=".7"/>
      <path d="M80 231c10-28 40-45 70-52h70c40 7 70 22 100 52z" fill="#403e3c"/>
      <path d="M148 180l30 51h22l20-51z" fill="#5b3936"/>
      <ellipse cx="181" cy="128" rx="47" ry="60" fill="#c99b91"/>
      <ellipse cx="181" cy="120" rx="30" ry="38" fill="#d4aaa0" opacity=".6"/>
      <ellipse cx="133" cy="132" rx="8" ry="15" fill="#b88a80"/>
      <ellipse cx="229" cy="130" rx="8" ry="15" fill="#b88a80"/>
      <path d="M134 110c-6-45 16-68 47-68s53 20 48 68c-4-22-10-36-16-38-28 2-52 2-66-2-6 8-10 22-13 40z" fill="#3a2b27"/>
      <path d="M141 104q12-5 25 0M181 104q14-5 28 1" stroke="#7a5650" stroke-width="3.5" fill="none"/>
      <ellipse cx="155" cy="115" rx="8" ry="3.5" fill="#6d5550"/>
      <ellipse cx="194" cy="115" rx="8" ry="3.5" fill="#6d5550"/>
      <path d="M175 110l-5 28h16" stroke="#b5857c" stroke-width="3" fill="none"/>
      <circle cx="170" cy="140" r="2.5" fill="#5a3a36"/><circle cx="182" cy="140" r="2.5" fill="#5a3a36"/>
      <path d="M158 162q19-4 38 0" stroke="#8f5e5a" stroke-width="3.5" fill="none"/>
      <ellipse cx="210" cy="150" rx="14" ry="22" fill="#b88078" opacity=".45"/>
    </svg>
    <div class="lbl" style="left:1px;top:195px;height:35px;width:195px;line-height:35px">Олексій Воробець</div>
  </div>

  <!-- slot 2 : Pracownik -->
  <div class="t" style="left:131px;top:337px;font-size:35px;color:#fff;letter-spacing:-.5px;-webkit-text-stroke:.4px #fff">Pracownik</div>
  <div class="lbl" style="left:6px;top:434px;width:108px;height:34px;line-height:34px">Pracownik</div>

  <!-- slot 3 : natalia -->
  <div style="left:3px;top:472px;width:417px;height:235px;overflow:hidden;background:#c6b6a0">
    <svg style="left:0;top:0;filter:blur(2px)" width="417" height="235" viewBox="0 0 417 235">
      <defs>
        <linearGradient id="cur" x1="0" x2="1">
          <stop offset="0" stop-color="#857a68"/><stop offset=".1" stop-color="#9d917e"/><stop offset=".2" stop-color="#b9ad98"/>
          <stop offset=".32" stop-color="#d6cfc2"/><stop offset=".42" stop-color="#e6e3de"/><stop offset=".55" stop-color="#ebe9e6"/>
          <stop offset=".7" stop-color="#e3dbcf"/><stop offset=".79" stop-color="#cdbfab"/><stop offset=".88" stop-color="#a18f7a"/><stop offset="1" stop-color="#8c7a66"/>
        </linearGradient>
      </defs>
      <rect width="417" height="235" fill="url(#cur)"/>
      <rect x="175" y="0" width="125" height="170" fill="#dfe5ec" opacity=".6"/>
      <path d="M25 0v235M60 0v235M110 0v235M150 0v235M160 0v235M185 0v235M215 0v235M285 0v235M300 0v235M325 0v235M365 0v235" stroke="#f3eee6" stroke-width="4" opacity=".45"/>
      <path d="M40 0v235M85 0v235M128 0v235M195 0v170M222 0v170M255 0v170M345 0v235M385 0v235" stroke="#8a7c6a" stroke-width="3" opacity=".35"/>
      <path d="M140 235c8-50 40-60 90-62 50 2 75 15 83 62z" fill="#4f2428"/>
      <path d="M205 150h50l5 35h-60z" fill="#5a2a2e"/>
      <ellipse cx="228" cy="120" rx="34" ry="45" fill="#9c7466"/>
      <path d="M192 110c-2-40 14-58 38-58s40 20 38 58c-6-20-12-30-38-32-22 2-32 14-38 32z" fill="#4a3026"/>
      <path d="M210 185l15 45M250 185l-22 45" stroke="#e8e2dc" stroke-width="2"/>
    </svg>
    <div class="lbl" style="left:1px;top:198px;width:187px;height:34px;padding-left:31px;line-height:34px">nataliashcherbii</div>
    <svg style="left:8px;top:205px" width="20" height="22" viewBox="0 0 20 22"><rect x="6" y="1" width="9" height="14" rx="4.5" fill="#d9453a"/><path d="M10.5 15v5M6 21h9" stroke="#d9453a" stroke-width="2.2"/><path d="M0.5 21.5L20 1" stroke="#d9453a" stroke-width="2"/></svg>
  </div>

  <!-- slot 4 : Olga -->
  <div style="left:128px;top:740px;width:167px;height:167px;border-radius:15px;background:#7b58bd"></div>
  <div class="t" style="left:183px;top:775px;font-size:99px;color:#fff;transform:scaleX(.79);transform-origin:0 0">O</div>
  <div class="lbl" style="left:7px;top:905px;width:209px;height:33px;padding-left:31px;line-height:33px">Ольга Лазарович</div>
  <svg style="left:14px;top:911px" width="20" height="22" viewBox="0 0 20 22"><rect x="6" y="1" width="9" height="14" rx="4.5" fill="#d9453a"/><path d="M10.5 15v5M6 21h9" stroke="#d9453a" stroke-width="2.2"/><path d="M0.5 21.5L20 1" stroke="#d9453a" stroke-width="2"/></svg>

  <!-- slot 5 : Serhii -->
  <div style="left:128px;top:975px;width:167px;height:168px;border-radius:15px;background:#fcfcfc;overflow:hidden">
    <svg style="left:0;top:0;filter:blur(1px)" width="167" height="168" viewBox="0 0 167 168">
      <path d="M0 140c20-15 40-22 55-26h57c20 5 40 12 55 26v28H0z" fill="#232327"/>
      <path d="M60 114l24 54 24-54z" fill="#c9d2e0"/>
      <path d="M64 115h40l-20 28z" fill="#d8b8a0"/>
      <ellipse cx="86" cy="80" rx="40" ry="52" fill="#d6a890"/>
      <ellipse cx="46" cy="80" rx="6" ry="12" fill="#c8987e"/>
      <ellipse cx="126" cy="80" rx="6" ry="12" fill="#c8987e"/>
      <path d="M46 70c-4-42 18-58 40-58 26 0 44 16 40 58-4-20-12-34-40-36-22 0-34 14-40 36z" fill="#4c3b30"/>
      <path d="M62 68q10-4 20 0M92 68q10-4 20 0" stroke="#8a6452" stroke-width="3" fill="none"/>
      <ellipse cx="72" cy="78" rx="7" ry="3" fill="#6e5a52"/><ellipse cx="102" cy="78" rx="7" ry="3" fill="#6e5a52"/>
      <path d="M87 80l-5 22h12" stroke="#b88470" stroke-width="3" fill="none"/>
      <path d="M74 112q13-3 26 0" stroke="#a06a5a" stroke-width="3" fill="none"/>
      <ellipse cx="62" cy="100" rx="9" ry="15" fill="#c89078" opacity=".25"/><ellipse cx="110" cy="100" rx="9" ry="15" fill="#c89078" opacity=".25"/>
    </svg>
  </div>
  <div class="lbl" style="left:7px;top:1140px;width:164px;height:33px;padding-left:31px;line-height:33px">Serhii Sharyn</div>
  <svg style="left:14px;top:1146px" width="20" height="22" viewBox="0 0 20 22"><rect x="6" y="1" width="9" height="14" rx="4.5" fill="#d9453a"/><path d="M10.5 15v5M6 21h9" stroke="#d9453a" stroke-width="2.2"/><path d="M0.5 21.5L20 1" stroke="#d9453a" stroke-width="2"/></svg>
</div>


      <div style="left:0;top:1546px;width:2560px;height:119px;background:#0c0c0e"></div>
    </div>
  </div>
</div>

</body></html>
